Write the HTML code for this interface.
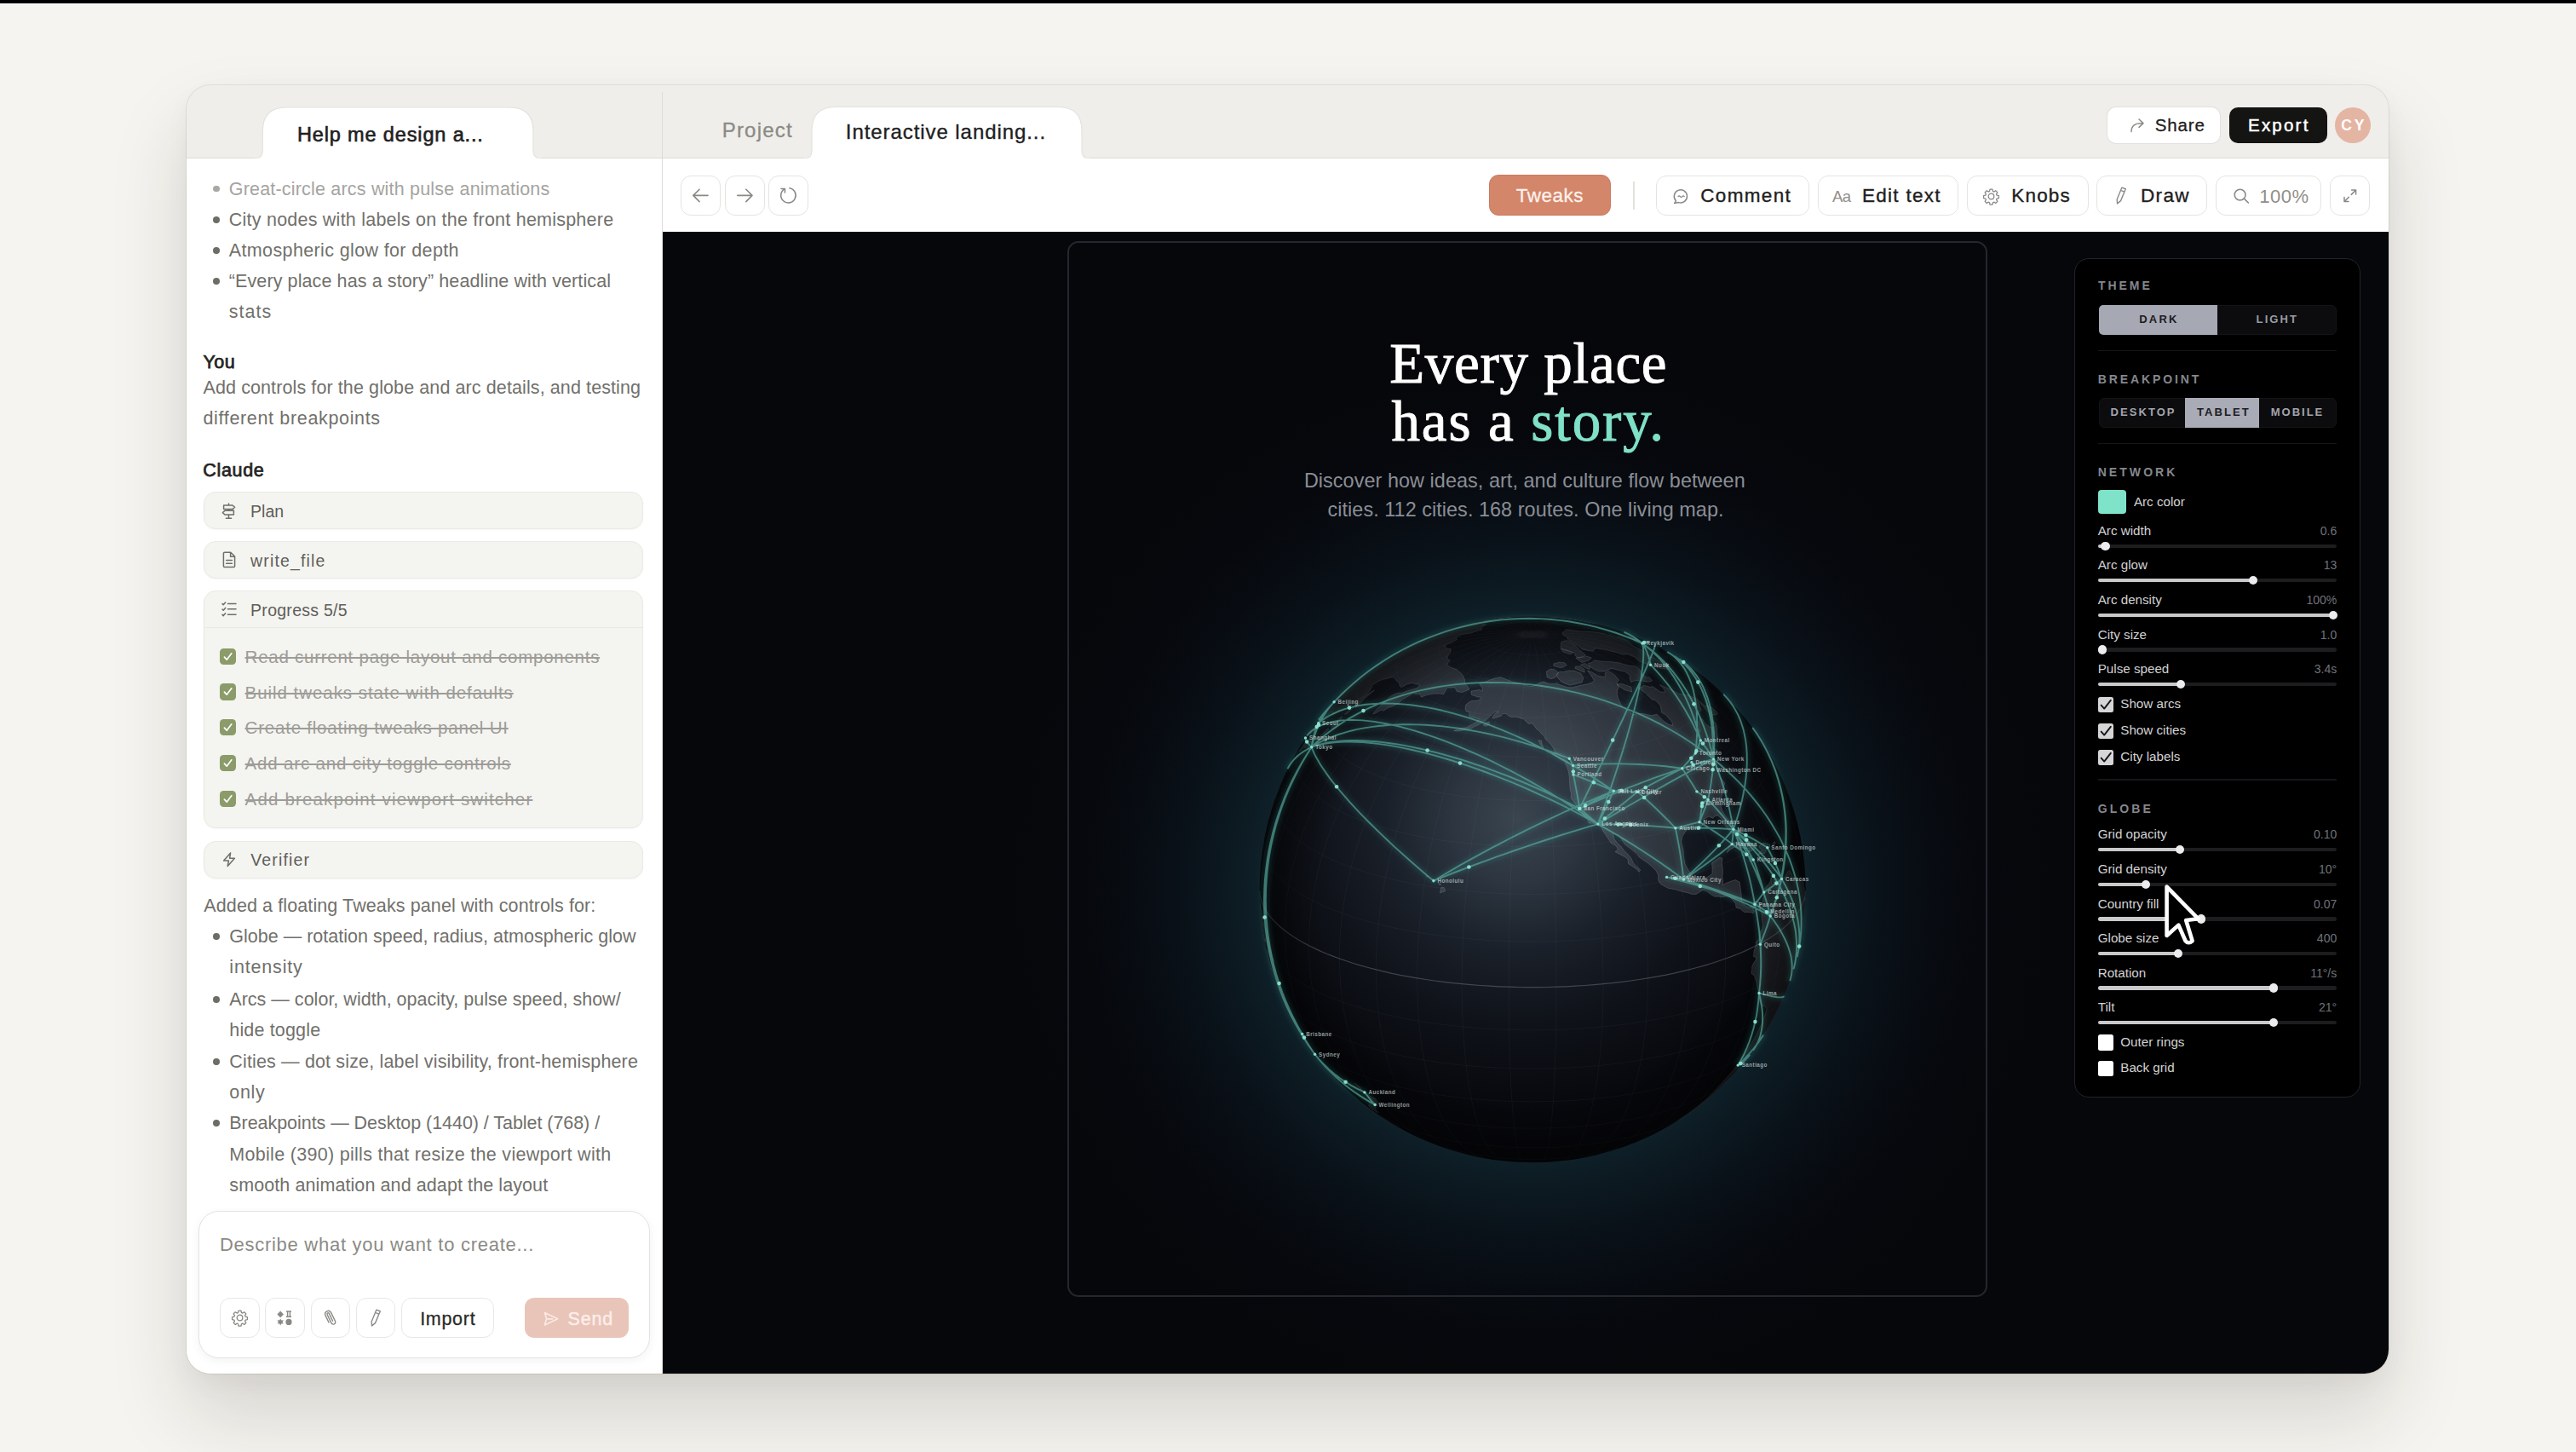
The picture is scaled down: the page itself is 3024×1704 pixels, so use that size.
<!DOCTYPE html>
<html lang="en"><head><meta charset="utf-8"><title>Interactive landing</title>
<style>
html,body{margin:0;padding:0}
body{width:3024px;height:1704px;position:relative;overflow:hidden;background:#f5f4f0;font-family:'Liberation Sans', sans-serif}
.t{position:absolute;white-space:pre;}
svg{position:absolute;overflow:visible}
</style></head><body>
<div style="position:absolute;left:0.0px;top:0.0px;width:3024.0px;height:4.0px;box-sizing:border-box;background:#000"></div>
<div style="position:absolute;left:0.0px;top:4.0px;width:3024.0px;height:1.4px;box-sizing:border-box;background:#fff"></div>
<div style="position:absolute;left:219px;top:100px;width:2585px;height:1512px;border-radius:28px;background:#efeeea;box-shadow:0 0 0 1px rgba(0,0,0,.075),0 48px 90px rgba(40,35,20,.15),0 12px 30px rgba(40,35,20,.04);overflow:hidden"><div style="position:absolute;left:-219px;top:-100px;width:3024px;height:1704px">
<div style="position:absolute;left:219.0px;top:186.0px;width:558.0px;height:1426.0px;box-sizing:border-box;background:#fff"></div>
<div style="position:absolute;left:778.0px;top:186.0px;width:2026.0px;height:85.5px;box-sizing:border-box;background:#fff"></div>
<div style="position:absolute;left:778.0px;top:271.5px;width:2026.0px;height:1340.5px;box-sizing:border-box;background:#06070b"></div>
<div style="position:absolute;left:219.0px;top:185.0px;width:2585.0px;height:1.0px;box-sizing:border-box;background:#dddcd7"></div>
<div style="position:absolute;left:777.0px;top:108.0px;width:1.0px;height:1504.0px;box-sizing:border-box;background:#dcdbd6"></div>
<svg style="left:0.0px;top:0.0px;" width="3024.0" height="1704.0" viewBox="0 0 3024 1704" fill="none"><path d="M299.3 186 Q308.3 186 308.3 177 L308.3 154 Q308.3 126 336.3 126 L598 126 Q626 126 626 154 L626 177 Q626 186 635 186 Z" fill="#fff"/><path d="M299.3 186 Q308.3 186 308.3 177 L308.3 154 Q308.3 126 336.3 126 L598 126 Q626 126 626 154 L626 177 Q626 186 635 186" stroke="#e3e2dd" stroke-width="1.2"/><rect x="299.3" y="185.8" width="335.7" height="1.6" fill="#fff"/></svg>
<svg style="left:0.0px;top:0.0px;" width="3024.0" height="1704.0" viewBox="0 0 3024 1704" fill="none"><path d="M944 186 Q953 186 953 177 L953 153.5 Q953 125.5 981 125.5 L1242 125.5 Q1270 125.5 1270 153.5 L1270 177 Q1270 186 1279 186 Z" fill="#fff"/><path d="M944 186 Q953 186 953 177 L953 153.5 Q953 125.5 981 125.5 L1242 125.5 Q1270 125.5 1270 153.5 L1270 177 Q1270 186 1279 186" stroke="#e3e2dd" stroke-width="1.2"/><rect x="944" y="185.8" width="335" height="1.6" fill="#fff"/></svg>
<div style="position:absolute;left:2474.2px;top:126.3px;width:131.8px;height:41.9px;box-sizing:border-box;background:#fff;border-radius:10px;box-shadow:0 0 0 1px rgba(0,0,0,.05)"></div>
<div style="position:absolute;left:2617.0px;top:126.3px;width:114.8px;height:41.9px;box-sizing:border-box;background:#141413;border-radius:10px"></div>
<div style="position:absolute;left:2741.2px;top:126.4px;width:42.1px;height:41.8px;box-sizing:border-box;background:#e4b5a3;border-radius:50%"></div>
<svg style="left:2500.8px;top:139.0px;" width="16.5" height="16.0" viewBox="0 0 16.5 16" fill="none"><path d="M1 15.5 C1 9 4.5 5.6 14.5 5.6 M10 1 L15 5.6 L10 10.4" stroke="#8d8c87" stroke-width="1.5" stroke-linecap="round" stroke-linejoin="round"/></svg>
<div style="position:absolute;left:799.2px;top:206.2px;width:46.8px;height:46.8px;box-sizing:border-box;background:#fff;border:1.8px solid #e5e4e0;border-radius:12px"></div>
<div style="position:absolute;left:850.8px;top:206.2px;width:46.8px;height:46.8px;box-sizing:border-box;background:#fff;border:1.8px solid #e5e4e0;border-radius:12px"></div>
<div style="position:absolute;left:902.3px;top:206.2px;width:46.8px;height:46.8px;box-sizing:border-box;background:#fff;border:1.8px solid #e5e4e0;border-radius:12px"></div>
<svg style="left:799.2px;top:206.2px;" width="46.8" height="46.8" viewBox="0 0 46.8 46.8" fill="none"><path d="M32 23.4 H15 M22 16.2 L14.8 23.4 L22 30.6" stroke="#8a8985" stroke-width="1.6" stroke-linecap="round" stroke-linejoin="round"/></svg>
<svg style="left:850.8px;top:206.2px;" width="46.8" height="46.8" viewBox="0 0 46.8 46.8" fill="none"><path d="M14.8 23.4 H32 M24.8 16.2 L32 23.4 L24.8 30.6" stroke="#8a8985" stroke-width="1.6" stroke-linecap="round" stroke-linejoin="round"/></svg>
<svg style="left:902.3px;top:206.2px;" width="46.8" height="46.8" viewBox="0 0 46.8 46.8" fill="none"><path d="M24.9 14.7 A8.7 8.7 0 1 1 19.3 15.6 M14.9 15.5 H19.4 V20" stroke="#8a8985" stroke-width="1.6" stroke-linecap="round" stroke-linejoin="round"/></svg>
<div style="position:absolute;left:1748.0px;top:205.1px;width:143.0px;height:48.4px;box-sizing:border-box;background:#d4866a;border:1.5px solid #c87a5d;border-radius:11px"></div>
<div style="position:absolute;left:1916.6px;top:212.5px;width:2.0px;height:33.8px;box-sizing:border-box;background:#e3e2dd"></div>
<div style="position:absolute;left:1944.3px;top:205.8px;width:179.3px;height:47.4px;box-sizing:border-box;background:#fff;border:1.8px solid #e5e4e0;border-radius:12px"></div>
<div style="position:absolute;left:2134.2px;top:205.8px;width:164.8px;height:47.4px;box-sizing:border-box;background:#fff;border:1.8px solid #e5e4e0;border-radius:12px"></div>
<div style="position:absolute;left:2309.2px;top:205.8px;width:142.7px;height:47.4px;box-sizing:border-box;background:#fff;border:1.8px solid #e5e4e0;border-radius:12px"></div>
<div style="position:absolute;left:2461.2px;top:205.8px;width:129.6px;height:47.4px;box-sizing:border-box;background:#fff;border:1.8px solid #e5e4e0;border-radius:12px"></div>
<div style="position:absolute;left:2600.9px;top:205.8px;width:123.7px;height:47.4px;box-sizing:border-box;background:#fff;border:1.8px solid #e5e4e0;border-radius:12px"></div>
<div style="position:absolute;left:2734.7px;top:205.8px;width:47.8px;height:47.4px;box-sizing:border-box;background:#fff;border:1.8px solid #e5e4e0;border-radius:12px"></div>
<svg style="left:1963.5px;top:221.5px;" width="19.0" height="17.5" viewBox="0 0 19 17.5" fill="none"><path d="M3.4 13.6 A7.6 7.6 0 1 1 6.6 15.6 L1.6 16.6 Z" stroke="#8a8985" stroke-width="1.5" stroke-linejoin="round"/><path d="M6 8.6 q1.2 -1.6 2.4 0 t2.4 0 t2.4 0" stroke="#8a8985" stroke-width="1.3" stroke-linecap="round"/></svg>
<svg style="left:2327.4px;top:219.7px;" width="21.0" height="21.0" viewBox="0 0 24 24" fill="none"><path d="M12 8.2a3.8 3.8 0 1 0 0 7.6 3.8 3.8 0 0 0 0-7.6Z M10.3 2.5h3.4l.5 2.6 1.6.7 2.2-1.5 2.4 2.4-1.5 2.2.7 1.6 2.6.5v3.4l-2.6.5-.7 1.6 1.5 2.2-2.4 2.4-2.2-1.5-1.6.7-.5 2.6h-3.4l-.5-2.6-1.6-.7-2.2 1.5-2.4-2.4 1.5-2.200-.7-1.600-2.600-.5v-3.400l2.600-.5.7-1.600-1.500-2.200 2.400-2.400 2.200 1.500 1.600-.7Z" stroke="#8a8985" stroke-width="1.5" stroke-linejoin="round"/></svg>
<svg style="left:2483.4px;top:219.3px;" width="14.0" height="21.0" viewBox="0 0 15 23" fill="none"><path d="M8.5 1.2 L13.3 3 L7 18.2 L2.6 21.8 L2.2 16.4 Z M7 4.8 L11.8 6.6" stroke="#8a8985" stroke-width="1.5" stroke-linejoin="round" stroke-linecap="round"/></svg>
<svg style="left:2622.0px;top:220.7px;" width="18.5" height="18.0" viewBox="0 0 18.5 18" fill="none"><circle cx="7.6" cy="7.6" r="6.4" stroke="#8a8985" stroke-width="1.6"/><path d="M12.4 12.2 L17.4 17" stroke="#8a8985" stroke-width="1.6" stroke-linecap="round"/></svg>
<svg style="left:2750.8px;top:221.9px;" width="15.6" height="15.6" viewBox="0 0 15.6 15.6" fill="none"><path d="M9.6 1 H14.6 V6 M14.4 1.2 L9.2 6.4 M6 14.6 H1 V9.6 M1.2 14.4 L6.4 9.2" stroke="#8a8985" stroke-width="1.5" stroke-linecap="round" stroke-linejoin="round"/></svg>
<div style="position:absolute;left:250.4px;top:217.5px;width:7.8px;height:7.8px;box-sizing:border-box;background:#a9a8a4;border-radius:50%"></div>
<div style="position:absolute;left:250.4px;top:254.0px;width:7.8px;height:7.8px;box-sizing:border-box;background:#6d6c67;border-radius:50%"></div>
<div style="position:absolute;left:250.4px;top:290.1px;width:7.8px;height:7.8px;box-sizing:border-box;background:#6d6c67;border-radius:50%"></div>
<div style="position:absolute;left:250.4px;top:326.2px;width:7.8px;height:7.8px;box-sizing:border-box;background:#6d6c67;border-radius:50%"></div>
<div style="position:absolute;left:239.0px;top:577.0px;width:515.5px;height:43.5px;box-sizing:border-box;background:#f4f4f0;border:1px solid #ebeae5;border-radius:14px;box-shadow:0 1px 2px rgba(0,0,0,.035)"></div>
<div style="position:absolute;left:239.0px;top:635.2px;width:515.5px;height:43.6px;box-sizing:border-box;background:#f4f4f0;border:1px solid #ebeae5;border-radius:14px;box-shadow:0 1px 2px rgba(0,0,0,.035)"></div>
<div style="position:absolute;left:239.0px;top:692.8px;width:515.5px;height:279.2px;box-sizing:border-box;background:#f4f4f0;border:1px solid #ebeae5;border-radius:14px;box-shadow:0 1px 2px rgba(0,0,0,.035)"></div>
<div style="position:absolute;left:240.0px;top:735.5px;width:513.5px;height:1.1px;box-sizing:border-box;background:#e9e8e3"></div>
<div style="position:absolute;left:239.0px;top:986.9px;width:515.5px;height:43.7px;box-sizing:border-box;background:#f4f4f0;border:1px solid #ebeae5;border-radius:14px;box-shadow:0 1px 2px rgba(0,0,0,.035)"></div>
<svg style="left:260.2px;top:589.6px;" width="17.0" height="19.5" viewBox="0 0 17 19.5" fill="none"><path d="M8.5 1 V3 M8.5 7.6 V9 M8.5 14.2 V18 M5.4 18.3 H11.6 M2.6 3 H13 L15.6 5.3 L13 7.6 H2.6 Z M14.4 9.2 H4 L1.4 11.6 L4 14 H14.4 Z" stroke="#6f6e69" stroke-width="1.5" stroke-linejoin="round" stroke-linecap="round"/></svg>
<svg style="left:260.6px;top:647.0px;" width="16.0" height="19.5" viewBox="0 0 16 19.5" fill="none"><path d="M2.6 1.2 H9.8 L14.6 6 V17.2 Q14.6 18.4 13.4 18.4 H2.6 Q1.4 18.4 1.4 17.2 V2.4 Q1.4 1.2 2.6 1.2 Z M9.6 1.4 V6.2 H14.4 M4.6 10.6 H11.4 M4.6 14.2 H11.4" stroke="#6f6e69" stroke-width="1.5" stroke-linejoin="round" stroke-linecap="round"/></svg>
<svg style="left:259.6px;top:706.0px;" width="18.0" height="17.5" viewBox="0 0 18 17.5" fill="none"><path d="M7.4 2.4 H17 M7.4 8.8 H17 M7.4 15.2 H17 M1 2.6 L2.2 3.8 L4.6 1 M1 9 L2.2 10.2 L4.6 7.4 M1 15.400 L2.2 16.6 L4.6 13.8" stroke="#6f6e69" stroke-width="1.5" stroke-linejoin="round" stroke-linecap="round"/></svg>
<svg style="left:260.6px;top:1000.2px;" width="16.0" height="17.5" viewBox="0 0 16 17.5" fill="none"><path d="M9.6 1 L1.600 10 H7.4 L6.2 16.5 L14.4 7.2 H8.6 Z" stroke="#6f6e69" stroke-width="1.5" stroke-linejoin="round"/></svg>
<div style="position:absolute;left:257.5px;top:760.7px;width:19.3px;height:19.2px;box-sizing:border-box;background:#8b9b6a;border-radius:4.5px"></div>
<svg style="left:257.5px;top:760.7px;" width="19.3" height="19.2" viewBox="0 0 19.3 19.2" fill="none"><path d="M5.4 10.2 L8.2 13.2 L13.8 5.800" stroke="#fff" stroke-width="1.7" stroke-linecap="round" stroke-linejoin="round"/></svg>
<div style="position:absolute;left:257.5px;top:802.4px;width:19.3px;height:19.2px;box-sizing:border-box;background:#8b9b6a;border-radius:4.5px"></div>
<svg style="left:257.5px;top:802.4px;" width="19.3" height="19.2" viewBox="0 0 19.3 19.2" fill="none"><path d="M5.4 10.2 L8.2 13.2 L13.8 5.800" stroke="#fff" stroke-width="1.7" stroke-linecap="round" stroke-linejoin="round"/></svg>
<div style="position:absolute;left:257.5px;top:844.2px;width:19.3px;height:19.2px;box-sizing:border-box;background:#8b9b6a;border-radius:4.5px"></div>
<svg style="left:257.5px;top:844.2px;" width="19.3" height="19.2" viewBox="0 0 19.3 19.2" fill="none"><path d="M5.4 10.2 L8.2 13.2 L13.8 5.800" stroke="#fff" stroke-width="1.7" stroke-linecap="round" stroke-linejoin="round"/></svg>
<div style="position:absolute;left:257.5px;top:885.9px;width:19.3px;height:19.2px;box-sizing:border-box;background:#8b9b6a;border-radius:4.5px"></div>
<svg style="left:257.5px;top:885.9px;" width="19.3" height="19.2" viewBox="0 0 19.3 19.2" fill="none"><path d="M5.4 10.2 L8.2 13.2 L13.8 5.800" stroke="#fff" stroke-width="1.7" stroke-linecap="round" stroke-linejoin="round"/></svg>
<div style="position:absolute;left:257.5px;top:927.7px;width:19.3px;height:19.2px;box-sizing:border-box;background:#8b9b6a;border-radius:4.5px"></div>
<svg style="left:257.5px;top:927.7px;" width="19.3" height="19.2" viewBox="0 0 19.3 19.2" fill="none"><path d="M5.4 10.2 L8.2 13.2 L13.8 5.800" stroke="#fff" stroke-width="1.7" stroke-linecap="round" stroke-linejoin="round"/></svg>
<div style="position:absolute;left:250.4px;top:1094.9px;width:7.8px;height:7.8px;box-sizing:border-box;background:#6d6c67;border-radius:50%"></div>
<div style="position:absolute;left:250.4px;top:1169.0px;width:7.8px;height:7.8px;box-sizing:border-box;background:#6d6c67;border-radius:50%"></div>
<div style="position:absolute;left:250.4px;top:1242.0px;width:7.8px;height:7.8px;box-sizing:border-box;background:#6d6c67;border-radius:50%"></div>
<div style="position:absolute;left:250.4px;top:1314.3px;width:7.8px;height:7.8px;box-sizing:border-box;background:#6d6c67;border-radius:50%"></div>
<div style="position:absolute;left:233.2px;top:1421.4px;width:529.8px;height:172.6px;box-sizing:border-box;background:#fff;border:1px solid #e4e3de;border-radius:24px;box-shadow:0 3px 12px rgba(0,0,0,.05)"></div>
<div style="position:absolute;left:258.4px;top:1523.4px;width:46.2px;height:46.2px;box-sizing:border-box;background:#fff;border:1.8px solid #e8e7e3;border-radius:12px"></div>
<div style="position:absolute;left:311.4px;top:1523.4px;width:46.2px;height:46.2px;box-sizing:border-box;background:#fff;border:1.8px solid #e8e7e3;border-radius:12px"></div>
<div style="position:absolute;left:364.6px;top:1523.4px;width:46.2px;height:46.2px;box-sizing:border-box;background:#fff;border:1.8px solid #e8e7e3;border-radius:12px"></div>
<div style="position:absolute;left:417.7px;top:1523.4px;width:46.2px;height:46.2px;box-sizing:border-box;background:#fff;border:1.8px solid #e8e7e3;border-radius:12px"></div>
<div style="position:absolute;left:470.8px;top:1523.4px;width:109.6px;height:46.2px;box-sizing:border-box;background:#fff;border:1.8px solid #e8e7e3;border-radius:12px"></div>
<div style="position:absolute;left:616.4px;top:1523.4px;width:122.1px;height:46.6px;box-sizing:border-box;background:#e9c5b9;border-radius:11px"></div>
<svg style="left:637.6px;top:1538.6px;" width="18.0" height="17.5" viewBox="0 0 18 17.5" fill="none"><path d="M1.4 1.6 L16.6 8.8 L1.4 16 L3.6 8.8 Z M3.6 8.8 H10.5" stroke="#fbe9e2" stroke-width="1.7" stroke-linejoin="round" stroke-linecap="round"/></svg>
<svg style="left:271.0px;top:1536.0px;" width="21.0" height="21.0" viewBox="0 0 24 24" fill="none"><path d="M12 8.2a3.8 3.8 0 1 0 0 7.6 3.8 3.8 0 0 0 0-7.6Z M10.3 2.5h3.4l.5 2.6 1.6.7 2.2-1.5 2.4 2.4-1.5 2.2.7 1.6 2.6.5v3.4l-2.6.5-.7 1.6 1.5 2.2-2.4 2.4-2.2-1.5-1.6.7-.5 2.6h-3.4l-.5-2.6-1.6-.7-2.2 1.5-2.4-2.4 1.5-2.200-.7-1.600-2.600-.5v-3.400l2.600-.5.7-1.600-1.500-2.200 2.400-2.400 2.200 1.500 1.600-.7Z" stroke="#8a8985" stroke-width="1.5" stroke-linejoin="round"/></svg>
<svg style="left:325.4px;top:1538.0px;" width="18.5" height="17.5" viewBox="0 0 18.5 17.5" fill="none"><path d="M4.2 0.600 L8 4.4 L4.2 8.2 L0.4 4.4 Z" fill="#8a8985"/><path d="M11 1 H17 M11 7.2 H17 M12.6 1 V7.2 M15.4 1 V7.2" stroke="#8a8985" stroke-width="1.4"/><circle cx="14" cy="13.4" r="3.6" fill="#8a8985"/><path d="M4.2 9.4 L5.4 11.6 L7.8 11.2 L6.6 13.400 L7.8 15.600 L5.4 15.2 L4.2 17.4 L3 15.2 L0.600 15.600 L1.800 13.400 L0.600 11.2 L3 11.6 Z" fill="#8a8985"/></svg>
<svg style="left:380.4px;top:1536.6px;" width="15.0" height="20.0" viewBox="0 0 15 20" fill="none"><path d="M10.6 13.2 L6.4 4.6 C5.6 3 3.400 4 4.200 5.7 L8.8 15.400 C10.4 18.700 15 16.600 13.4 13.2 L8.6 3.400 C6.600 -0.800 0 2.2 2 6.600 L6 15" stroke="#8a8985" stroke-width="1.4" stroke-linecap="round" stroke-linejoin="round"/></svg>
<svg style="left:434.0px;top:1536.4px;" width="14.0" height="21.0" viewBox="0 0 15 23" fill="none"><path d="M8.5 1.2 L13.3 3 L7 18.2 L2.6 21.8 L2.2 16.4 Z M7 4.8 L11.8 6.6" stroke="#8a8985" stroke-width="1.5" stroke-linejoin="round" stroke-linecap="round"/></svg>
<div style="position:absolute;left:778.0px;top:271.5px;width:2026.0px;height:1340.5px;box-sizing:border-box;background:radial-gradient(circle 620px at 1019px 768px,rgba(24,56,68,.60) 0,rgba(21,49,62,.48) 48%,rgba(15,32,45,.30) 66%,rgba(9,16,25,.12) 84%,rgba(6,7,11,0) 100%)"></div>
<div style="position:absolute;left:1252.6px;top:283.3px;width:1080.4px;height:1238.7px;box-sizing:border-box;border:2.2px solid #25272e;border-radius:13px"></div>
<div style="position:absolute;left:2435.0px;top:303.0px;width:336.0px;height:985.3px;box-sizing:border-box;background:#000;border:1.2px solid #22242a;border-radius:17px"></div>
<div style="position:absolute;left:2463.6px;top:357.6px;width:279.3px;height:35.6px;box-sizing:border-box;background:#0c0c0e;border:1px solid #141417;border-radius:6px"></div>
<div style="position:absolute;left:2464.4px;top:358.2px;width:138.8px;height:34.4px;box-sizing:border-box;background:#a6a8b4;border-radius:5px 0 0 5px"></div>
<div style="position:absolute;left:2463.6px;top:466.7px;width:279.3px;height:35.6px;box-sizing:border-box;background:#0c0c0e;border:1px solid #141417;border-radius:6px"></div>
<div style="position:absolute;left:2565.2px;top:467.3px;width:87.2px;height:34.4px;box-sizing:border-box;background:#a9abb6"></div>
<div style="position:absolute;left:2463.0px;top:411.2px;width:280.0px;height:1.2px;box-sizing:border-box;background:#15161a"></div>
<div style="position:absolute;left:2463.0px;top:519.6px;width:280.0px;height:1.2px;box-sizing:border-box;background:#15161a"></div>
<div style="position:absolute;left:2463.0px;top:914.4px;width:280.0px;height:1.2px;box-sizing:border-box;background:#15161a"></div>
<div style="position:absolute;left:2462.7px;top:575.0px;width:33.7px;height:28.0px;box-sizing:border-box;background:#7fe3c9;border-radius:4px"></div>
<div style="position:absolute;left:2462.7px;top:638.6px;width:280.5px;height:4.4px;box-sizing:border-box;background:#1d1d1f;border-radius:3px"></div>
<div style="position:absolute;left:2462.7px;top:638.6px;width:8.9px;height:4.4px;box-sizing:border-box;background:#c9c9cb;border-radius:3px"></div>
<div style="position:absolute;left:2466.4px;top:635.6px;width:10.4px;height:10.4px;box-sizing:border-box;background:#ececee;border-radius:50%"></div>
<div style="position:absolute;left:2462.7px;top:678.8px;width:280.5px;height:4.4px;box-sizing:border-box;background:#1d1d1f;border-radius:3px"></div>
<div style="position:absolute;left:2462.7px;top:678.8px;width:182.4px;height:4.4px;box-sizing:border-box;background:#c9c9cb;border-radius:3px"></div>
<div style="position:absolute;left:2639.9px;top:675.8px;width:10.4px;height:10.4px;box-sizing:border-box;background:#ececee;border-radius:50%"></div>
<div style="position:absolute;left:2462.7px;top:719.5px;width:280.5px;height:4.4px;box-sizing:border-box;background:#1d1d1f;border-radius:3px"></div>
<div style="position:absolute;left:2462.7px;top:719.5px;width:276.4px;height:4.4px;box-sizing:border-box;background:#c9c9cb;border-radius:3px"></div>
<div style="position:absolute;left:2733.9px;top:716.5px;width:10.4px;height:10.4px;box-sizing:border-box;background:#ececee;border-radius:50%"></div>
<div style="position:absolute;left:2462.7px;top:760.4px;width:280.5px;height:4.4px;box-sizing:border-box;background:#1d1d1f;border-radius:3px"></div>
<div style="position:absolute;left:2462.7px;top:760.4px;width:5.2px;height:4.4px;box-sizing:border-box;background:#c9c9cb;border-radius:3px"></div>
<div style="position:absolute;left:2462.7px;top:757.4px;width:10.4px;height:10.4px;box-sizing:border-box;background:#ececee;border-radius:50%"></div>
<div style="position:absolute;left:2462.7px;top:800.9px;width:280.5px;height:4.4px;box-sizing:border-box;background:#1d1d1f;border-radius:3px"></div>
<div style="position:absolute;left:2462.7px;top:800.9px;width:97.2px;height:4.4px;box-sizing:border-box;background:#c9c9cb;border-radius:3px"></div>
<div style="position:absolute;left:2554.7px;top:797.9px;width:10.4px;height:10.4px;box-sizing:border-box;background:#ececee;border-radius:50%"></div>
<div style="position:absolute;left:2462.7px;top:994.8px;width:280.5px;height:4.4px;box-sizing:border-box;background:#1d1d1f;border-radius:3px"></div>
<div style="position:absolute;left:2462.7px;top:994.8px;width:96.0px;height:4.4px;box-sizing:border-box;background:#c9c9cb;border-radius:3px"></div>
<div style="position:absolute;left:2553.5px;top:991.8px;width:10.4px;height:10.4px;box-sizing:border-box;background:#ececee;border-radius:50%"></div>
<div style="position:absolute;left:2462.7px;top:1035.5px;width:280.5px;height:4.4px;box-sizing:border-box;background:#1d1d1f;border-radius:3px"></div>
<div style="position:absolute;left:2462.7px;top:1035.5px;width:56.4px;height:4.4px;box-sizing:border-box;background:#c9c9cb;border-radius:3px"></div>
<div style="position:absolute;left:2513.9px;top:1032.5px;width:10.4px;height:10.4px;box-sizing:border-box;background:#ececee;border-radius:50%"></div>
<div style="position:absolute;left:2462.7px;top:1076.3px;width:280.5px;height:4.4px;box-sizing:border-box;background:#1d1d1f;border-radius:3px"></div>
<div style="position:absolute;left:2462.7px;top:1076.3px;width:121.1px;height:4.4px;box-sizing:border-box;background:#c9c9cb;border-radius:3px"></div>
<div style="position:absolute;left:2578.6px;top:1073.3px;width:10.4px;height:10.4px;box-sizing:border-box;background:#ececee;border-radius:50%"></div>
<div style="position:absolute;left:2462.7px;top:1116.7px;width:280.5px;height:4.4px;box-sizing:border-box;background:#1d1d1f;border-radius:3px"></div>
<div style="position:absolute;left:2462.7px;top:1116.7px;width:94.3px;height:4.4px;box-sizing:border-box;background:#c9c9cb;border-radius:3px"></div>
<div style="position:absolute;left:2551.8px;top:1113.7px;width:10.4px;height:10.4px;box-sizing:border-box;background:#ececee;border-radius:50%"></div>
<div style="position:absolute;left:2462.7px;top:1157.4px;width:280.5px;height:4.4px;box-sizing:border-box;background:#1d1d1f;border-radius:3px"></div>
<div style="position:absolute;left:2462.7px;top:1157.4px;width:206.3px;height:4.4px;box-sizing:border-box;background:#c9c9cb;border-radius:3px"></div>
<div style="position:absolute;left:2663.8px;top:1154.4px;width:10.4px;height:10.4px;box-sizing:border-box;background:#ececee;border-radius:50%"></div>
<div style="position:absolute;left:2462.7px;top:1197.8px;width:280.5px;height:4.4px;box-sizing:border-box;background:#1d1d1f;border-radius:3px"></div>
<div style="position:absolute;left:2462.7px;top:1197.8px;width:206.3px;height:4.4px;box-sizing:border-box;background:#c9c9cb;border-radius:3px"></div>
<div style="position:absolute;left:2663.8px;top:1194.8px;width:10.4px;height:10.4px;box-sizing:border-box;background:#ececee;border-radius:50%"></div>
<div style="position:absolute;left:2462.7px;top:817.9px;width:18.3px;height:18.2px;box-sizing:border-box;background:#d6d6d8;border-radius:2.5px"></div>
<svg style="left:2462.7px;top:817.9px;" width="18.3" height="18.2" viewBox="0 0 18.3 18.2" fill="none"><path d="M3.6 9.6 L7.2 13.6 L14.8 3.8" stroke="#161618" stroke-width="1.9" stroke-linecap="round" stroke-linejoin="round"/></svg>
<div style="position:absolute;left:2462.7px;top:848.7px;width:18.3px;height:18.2px;box-sizing:border-box;background:#d6d6d8;border-radius:2.5px"></div>
<svg style="left:2462.7px;top:848.7px;" width="18.3" height="18.2" viewBox="0 0 18.3 18.2" fill="none"><path d="M3.6 9.6 L7.2 13.6 L14.8 3.8" stroke="#161618" stroke-width="1.9" stroke-linecap="round" stroke-linejoin="round"/></svg>
<div style="position:absolute;left:2462.7px;top:879.5px;width:18.3px;height:18.2px;box-sizing:border-box;background:#d6d6d8;border-radius:2.5px"></div>
<svg style="left:2462.7px;top:879.5px;" width="18.3" height="18.2" viewBox="0 0 18.3 18.2" fill="none"><path d="M3.6 9.6 L7.2 13.6 L14.8 3.8" stroke="#161618" stroke-width="1.9" stroke-linecap="round" stroke-linejoin="round"/></svg>
<div style="position:absolute;left:2462.7px;top:1214.4px;width:18.3px;height:18.2px;box-sizing:border-box;background:#fff;border-radius:2.5px"></div>
<div style="position:absolute;left:2462.7px;top:1245.1px;width:18.3px;height:18.2px;box-sizing:border-box;background:#fff;border-radius:2.5px"></div>
</div></div>
<svg style="left:0;top:0" width="3024" height="1704" viewBox="0 0 3024 1704" fill="none">
<defs>
<radialGradient id="gsph" cx="1781.1" cy="961.8" r="346.14000000000004" gradientUnits="userSpaceOnUse"><stop offset="0" stop-color="#3a4550"/><stop offset=".22" stop-color="#2c3540"/><stop offset=".45" stop-color="#1a2029"/><stop offset=".7" stop-color="#0f1219"/><stop offset="1" stop-color="#07080d"/></radialGradient>
<radialGradient id="gshade" cx="1799.1" cy="1043.8" r="320.5" gradientUnits="userSpaceOnUse"><stop offset=".78" stop-color="#000" stop-opacity="0"/><stop offset="1" stop-color="#000" stop-opacity=".55"/></radialGradient>
<radialGradient id="ghalo" cx="1799.1" cy="1043.8" r="530.5" gradientUnits="userSpaceOnUse"><stop offset="0.604" stop-color="#1a4450" stop-opacity=".17"/><stop offset="0.646" stop-color="#183e4a" stop-opacity=".13"/><stop offset="0.736" stop-color="#143844" stop-opacity=".09"/><stop offset="0.849" stop-color="#112d3a" stop-opacity=".045"/><stop offset="1" stop-color="#0c1c25" stop-opacity="0"/></radialGradient>
<clipPath id="gclip"><circle cx="1799.1" cy="1043.8" r="320.5"/></clipPath>
<filter id="gblur" x="-10%" y="-10%" width="120%" height="120%"><feGaussianBlur stdDeviation="3.2"/></filter>
</defs>
<circle cx="1799.1" cy="1043.8" r="530.5" fill="url(#ghalo)"/>
<circle cx="1799.1" cy="1043.8" r="320.5" fill="url(#gsph)"/>
<g clip-path="url(#gclip)">
<path d="M1727 811.1 L1732.1 810.3 L1737.1 809.5 L1740.4 811.3 L1739.8 807.1 L1738.1 804.5 L1736.7 801.9 L1741.6 800.5 L1746.4 799.1 L1750.3 797.6 L1754.1 796.2 L1757.8 795.4 L1761.4 794.6 L1763.7 795.6 L1765.9 796.5 L1768.3 797.4 L1771.5 798.6 L1774.8 799.8 L1777.8 800.4 L1780.8 801 L1783.8 801.5 L1786.9 802.7 L1790 803.7 L1793.1 804.8 L1796.1 805.2 L1799.1 805.6 L1803 803.7 L1806.7 801.8 L1809.5 800.8 L1812.1 799.8 L1815.3 801.3 L1818.5 802.8 L1821.7 802.7 L1824.9 802.6 L1828.2 802.4 L1832 803.9 L1836 805.4 L1840.2 806.8 L1843.3 806.8 L1846.4 806.7 L1850.1 805.7 L1853.6 804.7 L1857.3 804 L1860.9 803.3 L1864.5 802.5 L1868 801.6 L1869.7 800.1 L1871.4 798.6 L1868.1 793.2 L1863.4 787 L1868.9 788.7 L1875.6 793 L1881.1 794.2 L1885 794.1 L1883.8 789.9 L1885.1 789.4 L1886.9 788.6 L1888.7 787.7 L1895.6 792 L1900.6 798.2 L1898.2 800.8 L1900.5 805.8 L1899.6 808.1 L1898.4 810.5 L1898.3 815.3 L1900.4 821.9 L1904.7 830.3 L1911.2 833.3 L1917 839 L1922.5 837.1 L1928.5 837.5 L1933.7 838.7 L1938.9 839.8 L1945 838.2 L1953.1 846.4 L1959.4 850.4 L1963.7 851.3 L1962.7 847.6 L1955.8 839.2 L1950.6 836 L1949.1 827.9 L1943.6 822 L1938.7 820.6 L1932.2 813.8 L1923.6 807.6 L1927.5 806 L1930 804.4 L1937.3 806.3 L1939.9 805.6 L1949.3 811.9 L1954.7 812.3 L1953.2 808.5 L1948.3 803.4 L1955.2 806.6 L1963.3 810 L1970.9 814 L1977.1 815.2 L1983 816.3 L1990.2 819.4 L1993 821.1 L1994.3 824.5 L1995.2 828.1 L1997.3 832.9 L1995.6 834.6 L1993.8 836.3 L1992 838.6 L1990 840.9 L1991.9 846.6 L1994.2 853.3 L1995.9 859.1 L1995.8 855 L1994.1 847.6 L1995.9 843 L1999.1 844.5 L2001.1 848.8 L2007.1 853.2 L2010.2 853.9 L2012.8 852.7 L2015 852.6 L2013.4 848.4 L2010 845.5 L2015.6 853.7 L2015.5 859.7 L2016.9 867 L2013.3 865 L2011.3 859.2 L2009.6 861.6 L2010.4 864.6 L2009.7 869.6 L2009.3 873.4 L2011.2 877.6 L2015.6 880.6 L2014.3 884.4 L2012.3 887.7 L2011.9 891.4 L2015 896.7 L2016 902 L2017.3 906.5 L2018.5 911 L2022.6 916.3 L2024.8 919 L2023.1 924.5 L2022.2 928.8 L2021.4 933.7 L2019.9 940.8 L2020.2 945 L2021.8 951.7 L2025.9 957.8 L2029.5 962.2 L2033.2 967.8 L2035.3 974.2 L2034.8 977.6 L2032.9 977.3 L2029.8 974.5 L2026.3 970 L2023.1 966.5 L2021.3 961.2 L2016.8 957.1 L2013.9 957.2 L2010.8 960.3 L2006.1 958 L2003.1 959.8 L1999.8 961.1 L1996.7 962.9 L1999.2 968.5 L1996.4 969.5 L1992.6 969.7 L1987.4 969.6 L1982.5 970.6 L1979.1 975.2 L1974.9 981.6 L1973.4 987.9 L1976 997 L1976.5 1005.6 L1978.1 1013.8 L1982.1 1021.4 L1986.9 1027.6 L1989.8 1030.8 L1994.5 1032.3 L1997.6 1033.1 L2002.6 1030.3 L2006.3 1028 L2009.9 1025.6 L2010.1 1019.7 L2009.6 1012.8 L2013.9 1009.4 L2019 1006.3 L2022 1007.5 L2021.2 1013.2 L2022.1 1018.1 L2022.4 1023.9 L2021.9 1028.8 L2022.7 1034.3 L2022.1 1038.7 L2025.6 1036.7 L2031.7 1034.3 L2037.1 1032.6 L2042.1 1035.1 L2043 1041.7 L2044 1048.8 L2044.6 1057.2 L2047.8 1061.5 L2050.7 1064.1 L2053.6 1065 L2056.7 1062.3 L2059.5 1058 L2062.8 1057.5 L2066.3 1059.5 L2066.3 1067.5 L2064.4 1064.6 L2063.7 1062.1 L2060.9 1060.8 L2059.3 1063.3 L2058 1066.8 L2059.4 1070.1 L2057.9 1071.9 L2056.1 1070.6 L2053.6 1070.7 L2050.8 1070.3 L2047.9 1070.5 L2046.3 1069.5 L2043 1066.5 L2040.3 1065.9 L2037.9 1064.7 L2037.6 1060.2 L2033.9 1056 L2030.2 1052.3 L2027.3 1051.7 L2021.5 1052.8 L2017.3 1052 L2013.2 1052.3 L2008.5 1049.8 L2003.5 1045.6 L1999 1044.2 L1995.9 1046.3 L1991.2 1049.4 L1985.4 1049.3 L1982 1047.9 L1974.9 1046.3 L1966.2 1043.8 L1958 1042.3 L1952.8 1039.4 L1949.2 1037.3 L1946.5 1032.7 L1946.8 1027 L1944 1021.8 L1939.3 1017.1 L1933.8 1012.4 L1928.4 1008.9 L1924 1005.7 L1921.4 1001.6 L1917 998.3 L1914.2 996 L1907.7 991.3 L1903.8 985.2 L1900.9 980 L1896.1 979 L1893.2 977.7 L1894.9 984.8 L1899.1 989.8 L1902.9 993.2 L1906.7 998.3 L1910.7 1002.2 L1914.9 1007.2 L1917.2 1012.4 L1920.2 1015.9 L1924.1 1019.2 L1925.9 1021.2 L1923.9 1023.3 L1921.5 1020.3 L1915.5 1016.1 L1911.8 1013.9 L1910.7 1007.8 L1906.5 1005 L1901.3 1002.4 L1896.1 999.7 L1899.3 996.5 L1897.3 992.8 L1891 989.2 L1887.8 984 L1884.7 979.4 L1881.6 974.7 L1879.6 970.5 L1874.6 967.8 L1869.8 966.1 L1865.2 966 L1863.7 961.7 L1859.6 958.3 L1857.4 955.2 L1856.1 952.1 L1853.9 949 L1851.4 946.5 L1847.1 940.4 L1844 935.8 L1844.7 931.6 L1843.2 926.4 L1842.7 920.2 L1842.5 913 L1841.4 905.9 L1839.8 900.4 L1837.1 895.1 L1842.8 895.7 L1846.1 899.5 L1845.7 895.5 L1843.5 891.6 L1841.8 890.3 L1837.9 888.1 L1834.6 885.4 L1829 883.7 L1825.4 882.9 L1823.8 878.2 L1821 874.5 L1817.2 869.9 L1814.4 867.6 L1812.5 863.5 L1809.2 860.8 L1806.8 857.6 L1803.7 855.4 L1800.6 850.9 L1797.6 848.7 L1794.7 849.6 L1791.9 847.3 L1788.4 843.7 L1785.9 843.2 L1782.3 841.8 L1778.2 841.2 L1774 841.4 L1770.3 839.4 L1767.9 837.5 L1763.8 837.6 L1761.7 840.5 L1758.1 841.5 L1754 842.9 L1751.7 843.1 L1754.8 837.7 L1759.1 835 L1755 835.5 L1751.2 838.6 L1747.9 841.8 L1744 845.4 L1739.8 848 L1735.1 851.1 L1730.6 852.7 L1726.9 855 L1722.6 855.7 L1718.1 856.9 L1714 857.6 L1710.7 857.9 L1706.8 857.6 L1712.4 855.8 L1717.1 854.3 L1721.9 853.7 L1728.1 850 L1732.6 847.9 L1736.2 843.4 L1732.7 842.9 L1729.5 841.9 L1725.3 841.6 L1724.6 839.2 L1725.1 835.6 L1721.4 834.9 L1720 831.9 L1720.8 827 L1724.4 824.2 L1727.5 822.6 L1731.3 822.5 L1735.3 821.9 L1738 820.2 L1738.2 818.1 L1735.2 818 L1732.2 817 L1727.7 815.6 L1726.9 812.8Z M1841.5 894.8 L1835.8 893.7 L1829.9 890.1 L1822.8 884.5 L1826.7 884.3 L1833 886.4 L1838.3 890.5Z M1812.2 878.6 L1808.5 873.9 L1805.7 868.7 L1809.6 869.1 L1810.2 873.8Z M1741.1 850.9 L1743.7 852.2 L1748.2 850.4 L1748.3 847.2 L1744.2 848.1Z M2008.1 841.6 L2006 836.8 L1997.7 827.4 L1995.2 822.8 L2001.5 828.4 L2004.7 827.9 L2009.3 830.6 L2014.4 834.5 L2016.5 837.7 L2014.2 839 L2011.3 838.7Z M2027.2 1000.6 L2030.2 993.2 L2033.7 989.8 L2039.1 987.8 L2044.8 989.2 L2051.1 990 L2056.4 991.3 L2061.7 993.1 L2060.1 996 L2053.3 1000 L2053 995.8 L2048.6 995.8 L2042 994.3 L2035.9 994.2 L2031.3 996.9Z M2064 1002.9 L2067.9 1001.6 L2071.7 1001.5 L2073.9 997.3 L2077.9 994.2 L2077.7 991.1 L2073.7 989.7 L2070 989.3 L2065.7 992.3 L2064.8 994.2 L2068.4 998.1 L2065.3 1000.8Z M2053.6 1010.2 L2057.3 1010.6 L2060 1008.5 L2057.6 1006.8 L2054.6 1007.9Z M2081.3 992.6 L2084.2 990 L2083.4 987.4 L2080.7 989.8Z M1833 800 L1838 802.4 L1842.9 804.1 L1846.6 803.3 L1850.1 802.5 L1853.6 801.7 L1857.1 800.8 L1858 798.2 L1858.8 795.6 L1856 790.3 L1851.9 788.7 L1847.9 787.1 L1844.5 787 L1841.2 786.9 L1838.5 787.8 L1835.7 788.6 L1833.1 788.4 L1830.6 788.2 L1828.9 789.7 L1827.1 791.1 L1828 795Z M1816 794.6 L1820.6 796.8 L1823 796 L1825.4 795.3 L1827.7 792.3 L1829.6 789.4 L1824.5 785.5 L1822.1 785.4 L1819.8 785.3 L1817.7 786.6 L1815.4 788Z M1872.8 775.1 L1876.1 775.6 L1879.5 776 L1882.9 776.2 L1886.3 776.4 L1889.7 776.6 L1894.4 777.1 L1899 777.5 L1905.5 779.3 L1911.9 781.1 L1916.3 781.5 L1920.7 781.9 L1925.5 786.2 L1926.4 789.2 L1932.2 794.8 L1936.3 794.6 L1939.6 798.9 L1936.7 800.1 L1931.9 799.9 L1925.6 798.7 L1922.4 798.7 L1919 798.8 L1917 799.7 L1914.8 800.7 L1913 796.1 L1913.7 792.7 L1907.4 788 L1901.7 787 L1894.3 784.9 L1890 784.6 L1888.8 785.7 L1887.5 786.9 L1885.3 787.4 L1883.1 787.9 L1880.2 787.9 L1877.3 787.9 L1871.6 785.6 L1865.4 781.4 L1864.5 778.3 L1866.5 778 L1868.4 777.6 L1869.5 776.7 L1870.5 775.8Z M1852 771.8 L1854.4 771.5 L1856.8 771.2 L1858.1 770.7 L1859.3 770.1 L1860.6 769.5 L1861.7 768.9 L1857.3 765.2 L1853.9 762.4 L1852.6 760.7 L1851.1 759.1 L1849.4 757.6 L1847.6 756.3 L1845.7 754.9 L1843.6 753.7 L1841.4 752.6 L1839.1 751.5 L1838.1 751.7 L1837.1 751.9 L1836.1 752.1 L1835.1 752.3 L1834.4 752.6 L1833.8 753 L1833.1 753.3 L1832.4 753.7 L1832.6 754.9 L1832.5 756.2 L1832.4 757.5 L1832.1 758.8 L1831.8 759.4 L1835.2 762.6 L1838.5 763.2 L1841.8 763.9 L1848.6 766.3 L1848.8 767.6 L1849 768.9Z M1849.8 772.2 L1852 771.8 L1854.2 771.4 L1856.1 771.2 L1858 771 L1859.9 770.8 L1861.7 770.6 L1863.5 770.3 L1868.4 772.1 L1867.2 773.1 L1866 774.2 L1864.7 775.2 L1862.8 775.8 L1860.8 776.3 L1858.8 776.9 L1856.8 777.4Z M1834.8 765.1 L1839 766.5 L1843.4 767.8 L1844.5 767.2 L1845.6 766.6 L1846.6 765.9 L1839.1 763 L1835.5 762.1 L1831.9 761.2 L1833.5 763.1Z M1823.9 781.5 L1826.7 782.2 L1829.6 783 L1832.6 783.7 L1834.3 783 L1836.1 782.3 L1837.7 781.5 L1839.3 780.8 L1836.7 777.8 L1833.7 777.5 L1830.7 777.2 L1829 777.6 L1827.3 778 L1825.6 778.4 L1823.8 778.8Z M1848.7 784.3 L1854.4 786.7 L1860.3 789.2 L1859.8 785.3 L1854.2 781.7 L1852 781.9 L1849.8 782.1Z M1855.3 780.6 L1865.4 785.6 L1866.7 783.1 L1861.2 778.7 L1857.5 779.1Z M1897.9 803.4 L1900.6 802.8 L1903.2 802.2 L1909 804.2 L1914.8 806.1 L1915.7 812.1 L1907 809.6Z M1857 761.9 L1862.9 763.2 L1866.7 763.8 L1870.5 764.3 L1871 763.2 L1871.4 762.1 L1872.7 761.4 L1874 760.7 L1882.7 762.1 L1896.6 765.4 L1904.6 768.1 L1907.7 767.9 L1910.7 767.7 L1918.5 770.9 L1923 775 L1928 777.4 L1938.6 781 L1946.4 783.5 L1951.7 784.7 L1956.8 785.4 L1959.3 784.7 L1959.3 782.7 L1951.9 778.5 L1944.3 774 L1934 768.4 L1931.7 766.3 L1929.2 764.3 L1922.9 760.8 L1916.5 757.4 L1915.3 756.1 L1913.9 754.7 L1912.4 753.4 L1910.2 751.7 L1904.8 749.5 L1899.4 747.4 L1897.2 748.1 L1890.6 745.6 L1887.6 745.8 L1884.9 744.7 L1882.3 743.6 L1874.3 742.2 L1863.9 740.9 L1857 740.9 L1848.7 740.1 L1845.4 739.5 L1842.1 739 L1837.9 738.7 L1837.7 739.6 L1837.3 740.4 L1836.2 741.2 L1835.2 741.7 L1834.2 742 L1834.3 742.8 L1834.1 743.4 L1834.4 744.2 L1835 745 L1836.1 745.8 L1836.9 746.3 L1837.7 746.7 L1838.5 747.2 L1839.2 747.7 L1839.8 748.7 L1840.3 749.8 L1841 750.4 L1841.6 751 L1842.2 751.6 L1844.4 752.8 L1846.5 754.1 L1848.5 755.5 L1852.9 757.8 L1854.5 759.3 L1855.8 760.6Z M1923.3 754.6 L1917.2 751.6 L1916.8 750.8 L1916.3 750 L1913.8 748.6 L1911.3 747.3 L1913.6 747.4 L1916.1 747.8 L1922.9 750.7 L1925.5 752.2 L1928.1 753.7 L1928.9 755.1 L1926.1 754.4 L1926 755.4 L1923.3 753.7Z M2067 1059.7 L2068.8 1062.1 L2069.7 1056.5 L2070.6 1052.4 L2070.6 1046.6 L2072.1 1042.5 L2074 1039.8 L2076.5 1037.5 L2078.5 1033.1 L2079.2 1029.6 L2080.4 1032.4 L2079.5 1036.7 L2080.8 1038.1 L2082.1 1034.2 L2083.1 1028.5 L2084.9 1030.8 L2087.8 1031.5 L2090.2 1032 L2093.2 1029.2 L2095.5 1029.5 L2097.1 1026 L2098.6 1023.1 L2100.3 1021.2 L2101.5 1022.9 L2102.9 1025.1 L2104.5 1029.4 L2106.4 1030.6 L2108.4 1033.9 L2110.9 1036.3 L2112.6 1033.9 L2114 1031.4 L2115.6 1032.7 L2116.6 1034.3 L2117.4 1040.1 L2118.2 1044.4 L2118.1 1052.2 L2118.4 1053.8 L2118.8 1057 L2119.1 1054 L2119.4 1053.1 L2120.7 1055.9 L2120.8 1052.9 L2120.8 1052 L2120.8 1048.5 L2120.8 1050.7 L2120.7 1053.1 L2120.8 1052.2 L2120.6 1058.2 L2120.1 1065.9 L2119.3 1075.3 L2118.1 1086.2 L2116.6 1096 L2115.4 1103.2 L2113.2 1113.7 L2110.7 1124.3 L2107.4 1135.9 L2104.6 1145 L2102 1152.5 L2100.1 1157.6 L2099.2 1159.9 L2096.6 1166.3 L2094.6 1171.2 L2090.9 1179.4 L2088.2 1185.1 L2083.4 1194.6 L2079.1 1202.3 L2075.3 1209 L2069.7 1217.9 L2063.9 1226.6 L2060 1232.2 L2058.4 1234.4 L2055.4 1238.3 L2053.2 1241.3 L2046.4 1249.7 L2042.1 1254.7 L2038.3 1259.1 L2032.8 1265 L2028.7 1269.2 L2026.4 1269.7 L2023.7 1274.2 L2017.8 1279.8 L2012.6 1284.6 L2007.5 1289 L2003.8 1292.1 L2002.5 1293.2 L1993.5 1300.2 L1986.2 1305.6 L1979.6 1310.2 L1976 1312.6 L1974.4 1313.6 L1973.8 1314 L1969.7 1316.6 L1966.1 1318.8 L1967.8 1317.8 L1969.3 1316.9 L1970.8 1314.4 L1975.1 1311.5 L1980.3 1307.9 L1987 1303 L1988.8 1301.3 L1994.6 1296.9 L2001.7 1291.1 L2005.1 1287.9 L2007.4 1285.4 L2011.1 1281.9 L2016 1276.7 L2023.5 1268.4 L2026.6 1265.1 L2032 1258.9 L2037.7 1252.1 L2041 1247.8 L2046.2 1239.8 L2050 1233.7 L2056 1224.3 L2061.3 1215.1 L2066.8 1203.7 L2071.6 1192.1 L2074 1184.5 L2073.1 1182.3 L2071.3 1181.1 L2068.6 1179.8 L2066.4 1178 L2065 1173.1 L2064.4 1165.9 L2063.7 1161 L2062.7 1155.7 L2061.4 1150.9 L2060.2 1146.3 L2057.5 1143.4 L2056 1142.7 L2056.7 1137.5 L2056.7 1134 L2059.5 1128.6 L2061.2 1126.8 L2061.4 1123.2 L2058.5 1122.6 L2059 1116.2 L2060 1113.1 L2061.3 1109.8 L2061.6 1105.5 L2064.7 1101.7 L2065.3 1098.3 L2066.1 1093.6 L2069 1089.8 L2069.4 1085.2 L2068.5 1080.3 L2068.1 1076 L2067.8 1069.5 L2066.3 1067.5Z M1724.9 808.9 L1716.7 812.5 L1713.5 812.1 L1710.4 811.6 L1709.2 809.2 L1708.1 806.7 L1703.3 806.9 L1698.9 806.8 L1694.6 814.5 L1689.1 813.9 L1685.2 814.1 L1681.4 814.3 L1675 815.6 L1668.6 818 L1666.7 814.2 L1661.7 814.3 L1658.8 813.6 L1649.8 819.1 L1646.8 820.2 L1641.7 825.2 L1635.3 828.6 L1629.1 830.8 L1624.3 834.1 L1621.4 833.2 L1614.8 837 L1611.7 838 L1614.9 833.4 L1621.1 827.8 L1627 821.9 L1633.4 816.5 L1638.9 814.1 L1642.2 813.3 L1646.1 813.1 L1652.7 810.7 L1658.5 809.1 L1664.7 807 L1666.4 803.1 L1661.8 803 L1660.7 802.2 L1657.3 801.4 L1651.3 803.2 L1645.3 806.6 L1643 805 L1642.7 802.1 L1641.3 800.1 L1639 798.7 L1638 796.7 L1636.6 795.6 L1635.3 794.5 L1629 795.9 L1622.4 797.6 L1617.7 799.8 L1610.8 804.1 L1610.2 806.5 L1607.1 811.5 L1603.8 815.1 L1600.8 817.5 L1594.1 821.9 L1587.7 827 L1583.2 829.3 L1576.8 832.7 L1571.8 835.1 L1566.6 837.8 L1564 838.3 L1565 835.3 L1562.7 836.1 L1561.1 836.9 L1557.5 840.3 L1555.2 841.5 L1553.9 841.9 L1549.9 847.4 L1544.4 854.6 L1541 859 L1538.8 861.6 L1537.9 861.5 L1537.9 860.3 L1542.1 854.7 L1545.8 850.5 L1549.3 845.4 L1552.1 841.9 L1556.1 837.4 L1557.9 835 L1557.7 834.3 L1556.9 834.7 L1561.6 829.8 L1564 826.9 L1562.5 828 L1560.9 829.4 L1559.3 831.2 L1554.7 836.5 L1553 838.8 L1549.9 843.1 L1548.8 843.9 L1547.1 845.8 L1544.7 846.7 L1540.4 854.7 L1534.8 862.5 L1531.4 867.6 L1527.2 871.6 L1524.1 876.8 L1522.5 879.3 L1519.7 884.2 L1517.1 888.8 L1516.1 890.6 L1516.5 890 L1516.9 889.2 L1517.4 888.3 L1518 887.2 L1522.4 879.5 L1520.3 883.1 L1513.7 895.1 L1507.7 907.4 L1503.5 916.7 L1499.6 926.2 L1498.8 928.2 L1498.1 930.1 L1502.5 918.9 L1507.5 907.8 L1512.9 896.7 L1509.9 902.8 L1506.9 909.1 L1504 915.6 L1499 927.8 L1494.5 940.1 L1490.5 952.5 L1487.1 964.9 L1490.2 953.6 L1493.8 942.3 L1497.7 931.1 L1502 920.1 L1506.8 909.3 L1511.9 898.7 L1517.4 888.4 L1523.2 878.2 L1529.3 868.4 L1536.2 858.2 L1543.5 848.4 L1551 838.8 L1558.9 829.6 L1559.8 828.7 L1560.4 828 L1561.1 827.2 L1562 826.2 L1559.2 829.3 L1556.4 832.6 L1553.4 836 L1550.4 839.6 L1558.5 830.2 L1566.7 821.3 L1575 812.9 L1583.3 805.1 L1591.7 797.8 L1600 791 L1608.3 784.7 L1616.6 778.8 L1628.1 771.2 L1639.8 764.2 L1651.6 757.8 L1663.3 752.1 L1671.8 748.3 L1680.5 744.7 L1689.5 741.3 L1698.7 738.1 L1708.1 735.1 L1717.8 732.5 L1721.1 731.6 L1724.8 730.7 L1729 729.7 L1733.7 728.7 L1739 727.7 L1750.7 725.7 L1763.1 724 L1776.1 722.8 L1789.7 722.2 L1803.9 722.1 L1818.6 722.6 L1826.2 723.2 L1833 723.8 L1839.3 724.5 L1844.9 725.3 L1850.1 726.1 L1854.8 726.9 L1859.1 727.7 L1863 728.4 L1866.5 729.2 L1869.7 729.9 L1864.8 728.8 L1860 727.8 L1855.6 727 L1851.3 726.3 L1847.3 725.7 L1854.9 726.9 L1862.3 728.3 L1869.6 729.8 L1876.7 731.5 L1883.7 733.3 L1890.4 735.2 L1889.6 735 L1888.8 734.8 L1899.6 738.1 L1910.5 741.9 L1911.8 742.4 L1912.6 742.7 L1916.3 744.1 L1919.7 745.5 L1922.9 746.8 L1925.8 748 L1931.6 750.5 L1937.5 753.3 L1943.4 756.2 L1949.5 759.3 L1948.5 758.8 L1947.3 758.2 L1946 757.5 L1944.5 756.8 L1950.6 759.9 L1956.5 763.1 L1962.3 766.5 L1970 771.2 L1977.7 776.1 L1985.4 781.4 L1993 787 L1997.2 790.2 L2001.2 793.4 L2005.1 796.6 L2008.8 799.7 L2012.4 802.8 L2007.3 798.5 L2002.2 794.2 L1997.1 790.1 L1991.9 786.2 L1988.3 783.5 L1984.5 780.8 L1980.7 778.1 L1976.7 775.5 L1972.6 772.8 L1966.7 769.1 L1960.8 765.6 L1961.8 766.2 L1962.7 766.7 L1957.1 763.5 L1951.5 760.4 L1945.8 757.4 L1940 754.5 L1933.6 751.5 L1927.1 748.6 L1920.6 745.9 L1914.2 743.3 L1909.1 741.4 L1904 739.6 L1897.6 737.5 L1894.5 736.5 L1898.2 737.7 L1901.8 738.8 L1905.4 740.1 L1897.8 737.5 L1891.6 735.6 L1885.5 733.8 L1878.6 732 L1871.5 731.6 L1860.9 729.5 L1856.3 728.7 L1851.8 728 L1848.1 727.4 L1844.5 726.9 L1840.9 726.5 L1837 726 L1833.1 725.5 L1830.4 725.1 L1827.5 724.7 L1824.1 724.3 L1820.5 724.1 L1817.9 723.9 L1815.3 722.4 L1812.5 722.3 L1809.6 722.2 L1808.1 722.1 L1811.8 722.3 L1815.5 722.4 L1819.2 722.6 L1825.6 723.1 L1821 722.8 L1816.4 722.5 L1812.5 722.3 L1808.8 722.2 L1805 722.1 L1801.4 722 L1800.1 722 L1796.5 722 L1792.7 722.1 L1789.6 722.2 L1786.6 722.3 L1783.6 722.4 L1780.7 722.5 L1776.6 722.8 L1772.7 724.4 L1770.5 724.6 L1768.5 724.9 L1765 725.2 L1761.5 725.6 L1757.9 726 L1763.6 726.5 L1760.8 727 L1758 727.5 L1751.4 727.9 L1743.4 728.5 L1746.4 728.4 L1749.6 728.5 L1747.6 729 L1745.7 729.5 L1745.6 730.5 L1744.1 731 L1742.7 731.6 L1741.3 732.1 L1740 732.7 L1744.7 732.7 L1743.8 733.3 L1742.9 733.8 L1742.2 734.3 L1741.5 734.9 L1740.4 735.5 L1739.4 736.1 L1738.5 736.7 L1739.1 737.8 L1740.1 738.9 L1737.1 739.5 L1734 740.2 L1732.3 740.9 L1730.6 741.6 L1728.9 742.3 L1727.2 743.1 L1715.9 744.7 L1713.6 745.9 L1711.3 747.1 L1709 748.4 L1709.3 749.1 L1709.8 749.9 L1710.3 750.6 L1706.8 752.3 L1703.4 754.2 L1695.2 757.6 L1696.3 758.2 L1697.5 758.8 L1697.4 760 L1697.5 761.3 L1700.2 761.4 L1703.1 761.4 L1703 762.6 L1703 763.7 L1703.1 764.8 L1701.8 766.5 L1700.5 768.3 L1699.3 770.1 L1699.1 771.5 L1698.9 772.9 L1700.6 773.9 L1702.4 774.9 L1700.3 777.4 L1698.3 780 L1700 781.3 L1701.8 782.5 L1704 783.6 L1706.3 784.6 L1709.3 785.2 L1710.6 786.3 L1711.9 787.4 L1713.7 788.9 L1715.7 790.5 L1716.7 792 L1717.9 793.6 L1718.6 795.6 L1719.5 797.7 L1719.6 801.7 L1722.2 804.7Z M1534.1 869.7 L1532.8 872.8 L1534.7 872.8 L1535.3 873.9 L1535.1 877.3 L1535.6 878.8 L1537.2 878.7 L1538.2 879.5 L1540.2 878.6 L1544.5 873.3 L1549.2 868.6 L1554 863.9 L1557 859.4 L1560.2 855.5 L1558.2 855.5 L1554.5 859.1 L1550.9 863 L1547.2 865.9 L1543.4 867.7 L1544.3 865.4 L1541.6 868.2 L1538.5 870.9 L1538.2 868.4 L1538.1 866.4 L1535.9 867.6Z M1561.8 851 L1564.1 850.5 L1563.4 855.8 L1568.3 854.3 L1573 849.9 L1572 847.8 L1575.7 840.6 L1572 843.5 L1567.3 847.8 L1566.5 846.7Z M1532.9 870.3 L1530.7 875.5 L1526.4 881.3 L1525.5 881.7 L1528.8 876.2 L1531.5 871.9Z M1533.6 872.3 L1534.4 873.5 L1532.8 876.8 L1531.6 877.4 L1530.5 877.5 L1531.5 875.3Z M1578.1 838.3 L1582.1 837.2 L1590.9 828.5 L1591.8 830.5 L1601.7 820 L1610.3 812.8 L1613.7 809.7 L1609 812.3 L1601 818.1 L1590.4 827.3 L1584.2 832.7Z M1487 1114.6 L1489.1 1123.7 L1491.5 1132.7 L1494.5 1141.1 L1497.1 1149.1 L1499.9 1157.1 L1504.1 1167.1 L1507.8 1174.6 L1515.2 1189.5 L1522.1 1201.6 L1527.8 1211.6 L1532.5 1219.5 L1537.8 1228.3 L1541.3 1233.7 L1543.8 1237.4 L1546.7 1243.3 L1551.5 1249.3 L1553.2 1251.4 L1548.4 1245.6 L1546.5 1243.2 L1541.7 1236.9 L1534.1 1226.4 L1533.7 1225.7 L1526.2 1214.3 L1529.9 1220.2 L1528.3 1217.6 L1520.6 1205 L1517 1198.5 L1519.5 1203.1 L1518.6 1201.6 L1517.9 1200.1 L1519.8 1203.7 L1516.8 1198.3 L1510.4 1186 L1505.6 1175.7 L1501.1 1165.1 L1495.2 1149.6 L1491.9 1139.5 L1488.9 1129.3 L1486.9 1121.9 L1486.5 1120.2 L1484.4 1110.8 L1484.1 1109.5 L1482.3 1100.5 L1483.8 1108.3 L1484.4 1110.9 L1482.4 1100.6 L1482.1 1099.1 L1483.7 1107.5 L1484.4 1110.9 L1486.1 1118.6 L1487.2 1122.8 L1489.5 1131.6 L1492.9 1142.8 L1493.7 1145.3 L1491.5 1133.8 L1488.3 1121.6Z M1590.1 1271.2 L1596.7 1276.1 L1601.9 1281.9 L1604.8 1283.1 L1609.2 1287 L1614.5 1289.1 L1617.2 1293.5 L1615.6 1293.7 L1617.4 1297.3 L1616 1297.9 L1614.1 1296.5 L1611.8 1293.4 L1606.1 1289.3 L1605.8 1287.4 L1602.7 1283.1 L1597 1277.9Z M1606.3 1291.5 L1612.5 1295.6 L1614.5 1298 L1615.4 1300.8 L1614.2 1301.4 L1618.2 1305.4 L1616.5 1305.3 L1612 1302.5 L1608.2 1299.9 L1606.4 1297.2 L1608 1296.3 L1607.2 1294.1Z M1480.7 1069.4 L1481.8 1075.5 L1483.2 1081.6 L1485.9 1094.3 L1487.9 1099.8 L1489.2 1108.1 L1495.2 1127.5 L1491.7 1121.7 L1487.9 1109.7 L1485.3 1101.2 L1485.4 1106.4 L1484.4 1103 L1482.5 1093.4 L1481.4 1086.2 L1480.5 1078.5 L1478.3 1069.4 L1478 1064.8 L1477.7 1060.2 L1477.4 1052.5 L1477.3 1046 L1478.9 1057.3 L1479.2 1058.7 L1479.8 1064Z M1690.5 1047.8 L1696.8 1045.8 L1695.2 1041.6 L1691.8 1041.2Z M1688.4 1036.8 L1691.7 1037.8 L1690.1 1038.7Z M1681.1 1032.3 L1683.9 1033.8 L1683.2 1031.5Z M1674.5 1028.4 L1676.9 1028.2 L1675.8 1029.2Z" fill="#c9ccd6" fill-opacity=".14" stroke="#d5d8e0" stroke-opacity=".2" stroke-width=".9" stroke-linejoin="round"/>
<path d="M1685.8 1343.5 L1679 1340.6 L1672.4 1337.3 L1665.9 1333.6 L1659.6 1329.6 L1653.4 1325.2 L1647.5 1320.5 L1641.7 1315.5 L1636.1 1310.1 L1630.7 1304.4 L1625.5 1298.3 L1620.5 1292 L1615.8 1285.4 L1611.2 1278.4 L1606.9 1271.2 L1602.8 1263.7 L1599 1256 L1595.4 1248 L1592.1 1239.7 L1589 1231.2 L1586.1 1222.5 L1583.6 1213.5 L1581.3 1204.3 L1579.2 1195 L1577.4 1185.5 L1575.9 1175.7 L1574.7 1165.9 L1573.7 1155.8 L1573 1145.7 L1572.6 1135.4 L1572.5 1125 L1572.6 1114.5 L1573 1103.9 L1573.7 1093.3 L1574.7 1082.6 L1575.9 1071.8 L1577.4 1061 L1579.2 1050.2 L1581.3 1039.4 L1583.6 1028.6 L1586.1 1017.8 L1589 1007 L1592.1 996.3 L1595.4 985.6 L1599 975 L1602.8 964.5 L1606.9 954.1 L1611.2 943.8 L1615.8 933.6 L1620.5 923.6 L1625.5 913.7 L1630.7 903.9 L1636.1 894.4 L1641.7 885 L1647.5 875.8 L1653.4 866.8 L1659.6 858 L1665.9 849.5 L1672.4 841.2 L1679 833.1 L1685.8 825.3 L1692.7 817.7 L1699.8 810.5 L1706.9 803.5 L1714.2 796.8 L1721.6 790.4 L1729.1 784.3 L1736.6 778.6 L1744.3 773.1 L1752 768 L1759.7 763.2 L1767.6 758.8 L1775.4 754.7 L1783.3 751 L1791.2 747.6M1718.5 1354 L1712.8 1352.2 L1707.2 1350 L1701.7 1347.4 L1696.3 1344.5 L1691 1341.2 L1685.9 1337.5 L1680.9 1333.5 L1676.1 1329.1 L1671.4 1324.4 L1666.9 1319.3 L1662.5 1313.9 L1658.3 1308.2 L1654.2 1302.2 L1650.4 1295.8 L1646.7 1289.1 L1643.2 1282.1 L1639.9 1274.9 L1636.8 1267.3 L1633.9 1259.5 L1631.2 1251.5 L1628.7 1243.1 L1626.4 1234.5 L1624.3 1225.7 L1622.4 1216.7 L1620.7 1207.5 L1619.3 1198 L1618.1 1188.4 L1617.1 1178.6 L1616.3 1168.6 L1615.7 1158.5 L1615.4 1148.3 L1615.3 1137.9 L1615.4 1127.4 L1615.7 1116.8 L1616.3 1106.1 L1617.1 1095.3 L1618.1 1084.5 L1619.3 1073.6 L1620.7 1062.7 L1622.4 1051.8 L1624.3 1040.8 L1626.4 1029.9 L1628.7 1018.9 L1631.2 1008.1 L1633.9 997.2 L1636.8 986.4 L1639.9 975.7 L1643.2 965 L1646.7 954.5 L1650.4 944 L1654.2 933.7 L1658.3 923.5 L1662.5 913.5 L1666.9 903.6 L1671.4 893.9 L1676.1 884.4 L1680.9 875.1 L1685.9 865.9 L1691 857 L1696.3 848.4 L1701.7 839.9 L1707.2 831.7 L1712.8 823.8 L1718.5 816.1 L1724.3 808.7 L1730.2 801.6 L1736.2 794.8 L1742.3 788.3 L1748.4 782.1 L1754.6 776.2 L1760.9 770.7 L1767.2 765.5 L1773.5 760.6 L1779.9 756.1 L1786.3 751.9 L1792.7 748.1M1744 1359.5 L1739.7 1358.4 L1735.5 1356.9 L1731.4 1355 L1727.3 1352.7 L1723.4 1350.1 L1719.5 1347.1 L1715.7 1343.7 L1712 1339.9 L1708.5 1335.8 L1705 1331.3 L1701.7 1326.5 L1698.4 1321.4 L1695.3 1315.9 L1692.4 1310 L1689.5 1303.9 L1686.8 1297.4 L1684.2 1290.6 L1681.8 1283.6 L1679.5 1276.2 L1677.4 1268.5 L1675.4 1260.6 L1673.5 1252.4 L1671.8 1244 L1670.3 1235.3 L1668.9 1226.3 L1667.7 1217.2 L1666.6 1207.8 L1665.7 1198.3 L1665 1188.5 L1664.4 1178.6 L1664 1168.5 L1663.7 1158.3 L1663.7 1147.9 L1663.7 1137.4 L1664 1126.8 L1664.4 1116 L1665 1105.2 L1665.7 1094.4 L1666.6 1083.4 L1667.7 1072.4 L1668.9 1061.4 L1670.3 1050.3 L1671.8 1039.3 L1673.5 1028.2 L1675.4 1017.2 L1677.4 1006.2 L1679.5 995.2 L1681.8 984.3 L1684.2 973.5 L1686.8 962.8 L1689.5 952.1 L1692.4 941.6 L1695.3 931.2 L1698.4 920.9 L1701.7 910.8 L1705 900.9 L1708.5 891.1 L1712 881.5 L1715.7 872.1 L1719.5 862.9 L1723.4 854 L1727.3 845.2 L1731.4 836.7 L1735.5 828.5 L1739.7 820.5 L1744 812.8 L1748.4 805.4 L1752.8 798.2 L1757.2 791.4 L1761.8 784.9 L1766.3 778.7 L1770.9 772.8 L1775.6 767.2 L1780.2 762 L1784.9 757.1 L1789.7 752.6 L1794.4 748.4M1768 1362.8 L1765.4 1362.3 L1762.7 1361.4 L1760.2 1360.1 L1757.6 1358.4 L1755.1 1356.3 L1752.7 1353.9 L1750.3 1351.1 L1748 1347.9 L1745.8 1344.3 L1743.6 1340.4 L1741.5 1336.1 L1739.4 1331.5 L1737.5 1326.5 L1735.6 1321.1 L1733.7 1315.4 L1732 1309.4 L1730.3 1303.1 L1728.8 1296.4 L1727.3 1289.5 L1725.9 1282.2 L1724.5 1274.7 L1723.3 1266.9 L1722.2 1258.8 L1721.2 1250.4 L1720.2 1241.8 L1719.4 1232.9 L1718.6 1223.8 L1718 1214.5 L1717.4 1205 L1717 1195.3 L1716.6 1185.4 L1716.4 1175.3 L1716.2 1165.1 L1716.1 1154.7 L1716.2 1144.2 L1716.4 1133.6 L1716.6 1122.9 L1717 1112 L1717.4 1101.1 L1718 1090.1 L1718.6 1079.1 L1719.4 1068 L1720.2 1056.9 L1721.2 1045.7 L1722.2 1034.6 L1723.3 1023.5 L1724.5 1012.3 L1725.9 1001.3 L1727.3 990.3 L1728.8 979.3 L1730.3 968.5 L1732 957.7 L1733.7 947 L1735.6 936.5 L1737.5 926 L1739.4 915.8 L1741.5 905.6 L1743.6 895.7 L1745.8 885.9 L1748 876.3 L1750.3 866.9 L1752.7 857.8 L1755.1 848.8 L1757.6 840.1 L1760.2 831.7 L1762.7 823.5 L1765.4 815.6 L1768 807.9 L1770.7 800.6 L1773.5 793.5 L1776.2 786.8 L1779 780.3 L1781.9 774.2 L1784.7 768.4 L1787.6 762.9 L1790.4 757.8 L1793.3 753.1 L1796.2 748.6M1788.6 1364.1 L1787.7 1363.7 L1786.9 1362.9 L1786 1361.7 L1785.1 1360.1 L1784.3 1358.2 L1783.5 1355.8 L1782.7 1353.1 L1781.9 1350 L1781.1 1346.6 L1780.4 1342.7 L1779.7 1338.5 L1779 1334 L1778.3 1329 L1777.7 1323.8 L1777.1 1318.2 L1776.5 1312.2 L1775.9 1306 L1775.4 1299.4 L1774.9 1292.5 L1774.4 1285.3 L1774 1277.8 L1773.6 1270 L1773.2 1262 L1772.9 1253.7 L1772.5 1245.1 L1772.2 1236.3 L1772 1227.2 L1771.8 1217.9 L1771.6 1208.4 L1771.4 1198.7 L1771.3 1188.9 L1771.2 1178.8 L1771.2 1168.6 L1771.2 1158.2 L1771.2 1147.7 L1771.2 1137.1 L1771.3 1126.3 L1771.4 1115.5 L1771.6 1104.5 L1771.8 1093.5 L1772 1082.4 L1772.2 1071.3 L1772.5 1060.2 L1772.9 1049 L1773.2 1037.8 L1773.6 1026.6 L1774 1015.5 L1774.4 1004.4 L1774.9 993.3 L1775.4 982.3 L1775.9 971.3 L1776.5 960.5 L1777.1 949.8 L1777.7 939.1 L1778.3 928.6 L1779 918.3 L1779.7 908 L1780.4 898 L1781.1 888.1 L1781.9 878.5 L1782.7 869 L1783.5 859.7 L1784.3 850.7 L1785.1 841.9 L1786 833.3 L1786.9 825 L1787.7 817 L1788.6 809.2 L1789.5 801.8 L1790.5 794.6 L1791.4 787.7 L1792.3 781.2 L1793.3 774.9 L1794.2 769 L1795.2 763.4 L1796.2 758.2 L1797.2 753.3 L1798.1 748.8M1809.6 1364.1 L1810.5 1363.7 L1811.3 1362.9 L1812.2 1361.7 L1813.1 1360.1 L1813.9 1358.2 L1814.7 1355.8 L1815.5 1353.1 L1816.3 1350 L1817.1 1346.6 L1817.8 1342.7 L1818.5 1338.5 L1819.2 1334 L1819.9 1329 L1820.5 1323.8 L1821.1 1318.2 L1821.7 1312.2 L1822.3 1306 L1822.8 1299.4 L1823.3 1292.5 L1823.8 1285.3 L1824.2 1277.8 L1824.6 1270 L1825 1262 L1825.3 1253.7 L1825.7 1245.1 L1826 1236.3 L1826.2 1227.2 L1826.4 1217.9 L1826.6 1208.4 L1826.8 1198.7 L1826.9 1188.9 L1827 1178.8 L1827 1168.6 L1827 1158.2 L1827 1147.7 L1827 1137.1 L1826.9 1126.3 L1826.8 1115.5 L1826.6 1104.5 L1826.4 1093.5 L1826.2 1082.4 L1826 1071.3 L1825.7 1060.2 L1825.3 1049 L1825 1037.8 L1824.6 1026.6 L1824.2 1015.5 L1823.8 1004.4 L1823.3 993.3 L1822.8 982.3 L1822.3 971.3 L1821.7 960.5 L1821.1 949.8 L1820.5 939.1 L1819.9 928.6 L1819.2 918.3 L1818.5 908 L1817.8 898 L1817.1 888.1 L1816.3 878.5 L1815.5 869 L1814.7 859.7 L1813.9 850.7 L1813.1 841.9 L1812.2 833.3 L1811.3 825 L1810.5 817 L1809.6 809.2 L1808.7 801.8 L1807.7 794.6 L1806.8 787.7 L1805.9 781.2 L1804.9 774.9 L1804 769 L1803 763.4 L1802 758.2 L1801 753.3 L1800.1 748.8M1830.2 1362.8 L1832.8 1362.3 L1835.5 1361.4 L1838 1360.1 L1840.6 1358.4 L1843.1 1356.3 L1845.5 1353.9 L1847.9 1351.1 L1850.2 1347.9 L1852.4 1344.3 L1854.6 1340.4 L1856.7 1336.1 L1858.8 1331.5 L1860.7 1326.5 L1862.6 1321.1 L1864.5 1315.4 L1866.2 1309.4 L1867.9 1303.1 L1869.4 1296.4 L1870.9 1289.5 L1872.3 1282.2 L1873.7 1274.7 L1874.9 1266.9 L1876 1258.8 L1877 1250.4 L1878 1241.8 L1878.8 1232.9 L1879.6 1223.8 L1880.2 1214.5 L1880.8 1205 L1881.2 1195.3 L1881.6 1185.4 L1881.8 1175.3 L1882 1165.1 L1882.1 1154.7 L1882 1144.2 L1881.8 1133.6 L1881.6 1122.9 L1881.2 1112 L1880.8 1101.1 L1880.2 1090.1 L1879.6 1079.1 L1878.8 1068 L1878 1056.9 L1877 1045.7 L1876 1034.6 L1874.9 1023.5 L1873.7 1012.3 L1872.3 1001.3 L1870.9 990.3 L1869.4 979.3 L1867.9 968.5 L1866.2 957.7 L1864.5 947 L1862.6 936.5 L1860.7 926 L1858.8 915.8 L1856.7 905.6 L1854.6 895.7 L1852.4 885.9 L1850.2 876.3 L1847.9 866.9 L1845.5 857.8 L1843.1 848.8 L1840.6 840.1 L1838 831.7 L1835.5 823.5 L1832.8 815.6 L1830.2 807.9 L1827.5 800.6 L1824.7 793.5 L1822 786.8 L1819.2 780.3 L1816.3 774.2 L1813.5 768.4 L1810.6 762.9 L1807.8 757.8 L1804.9 753.1 L1802 748.6M1854.2 1359.5 L1858.5 1358.4 L1862.7 1356.9 L1866.8 1355 L1870.9 1352.7 L1874.8 1350.1 L1878.7 1347.1 L1882.5 1343.7 L1886.2 1339.9 L1889.7 1335.8 L1893.2 1331.3 L1896.5 1326.5 L1899.8 1321.4 L1902.9 1315.9 L1905.8 1310 L1908.7 1303.9 L1911.4 1297.4 L1914 1290.6 L1916.4 1283.6 L1918.7 1276.2 L1920.8 1268.5 L1922.8 1260.6 L1924.7 1252.4 L1926.4 1244 L1927.9 1235.3 L1929.3 1226.3 L1930.5 1217.2 L1931.6 1207.8 L1932.5 1198.3 L1933.2 1188.5 L1933.8 1178.6 L1934.2 1168.5 L1934.5 1158.3 L1934.5 1147.9 L1934.5 1137.4 L1934.2 1126.8 L1933.8 1116 L1933.2 1105.2 L1932.5 1094.4 L1931.6 1083.4 L1930.5 1072.4 L1929.3 1061.4 L1927.9 1050.3 L1926.4 1039.3 L1924.7 1028.2 L1922.8 1017.2 L1920.8 1006.2 L1918.7 995.2 L1916.4 984.3 L1914 973.5 L1911.4 962.8 L1908.7 952.1 L1905.8 941.6 L1902.9 931.2 L1899.8 920.9 L1896.5 910.8 L1893.2 900.9 L1889.7 891.1 L1886.2 881.5 L1882.5 872.1 L1878.7 862.9 L1874.8 854 L1870.9 845.2 L1866.8 836.7 L1862.7 828.5 L1858.5 820.5 L1854.2 812.8 L1849.8 805.4 L1845.4 798.2 L1841 791.4 L1836.4 784.9 L1831.9 778.7 L1827.3 772.8 L1822.6 767.2 L1818 762 L1813.3 757.1 L1808.5 752.6 L1803.8 748.4M1879.7 1354 L1885.4 1352.2 L1891 1350 L1896.5 1347.4 L1901.9 1344.5 L1907.2 1341.2 L1912.3 1337.5 L1917.3 1333.5 L1922.1 1329.1 L1926.8 1324.4 L1931.3 1319.3 L1935.7 1313.9 L1939.9 1308.2 L1944 1302.2 L1947.8 1295.8 L1951.5 1289.1 L1955 1282.1 L1958.3 1274.9 L1961.4 1267.3 L1964.3 1259.5 L1967 1251.5 L1969.5 1243.1 L1971.8 1234.5 L1973.9 1225.7 L1975.8 1216.7 L1977.5 1207.5 L1978.9 1198 L1980.1 1188.4 L1981.1 1178.6 L1981.9 1168.6 L1982.5 1158.5 L1982.8 1148.3 L1982.9 1137.9 L1982.8 1127.4 L1982.5 1116.8 L1981.9 1106.1 L1981.1 1095.3 L1980.1 1084.5 L1978.9 1073.6 L1977.5 1062.7 L1975.8 1051.8 L1973.9 1040.8 L1971.8 1029.9 L1969.5 1018.9 L1967 1008.1 L1964.3 997.2 L1961.4 986.4 L1958.3 975.7 L1955 965 L1951.5 954.5 L1947.8 944 L1944 933.7 L1939.9 923.5 L1935.7 913.5 L1931.3 903.6 L1926.8 893.9 L1922.1 884.4 L1917.3 875.1 L1912.3 865.9 L1907.2 857 L1901.9 848.4 L1896.5 839.9 L1891 831.7 L1885.4 823.8 L1879.7 816.1 L1873.9 808.7 L1868 801.6 L1862 794.8 L1855.9 788.3 L1849.8 782.1 L1843.6 776.2 L1837.3 770.7 L1831 765.5 L1824.7 760.6 L1818.3 756.1 L1811.9 751.9 L1805.5 748.1M1912.4 1343.5 L1919.2 1340.6 L1925.8 1337.3 L1932.3 1333.6 L1938.6 1329.6 L1944.8 1325.2 L1950.7 1320.5 L1956.5 1315.5 L1962.1 1310.1 L1967.5 1304.4 L1972.7 1298.3 L1977.7 1292 L1982.4 1285.4 L1987 1278.4 L1991.3 1271.2 L1995.4 1263.7 L1999.2 1256 L2002.8 1248 L2006.1 1239.7 L2009.2 1231.2 L2012.1 1222.5 L2014.6 1213.5 L2016.9 1204.3 L2019 1195 L2020.8 1185.5 L2022.3 1175.7 L2023.5 1165.9 L2024.5 1155.8 L2025.2 1145.7 L2025.6 1135.4 L2025.7 1125 L2025.6 1114.5 L2025.2 1103.9 L2024.5 1093.3 L2023.5 1082.6 L2022.3 1071.8 L2020.8 1061 L2019 1050.2 L2016.9 1039.4 L2014.6 1028.6 L2012.1 1017.8 L2009.2 1007 L2006.1 996.3 L2002.8 985.6 L1999.2 975 L1995.4 964.5 L1991.3 954.1 L1987 943.8 L1982.4 933.6 L1977.7 923.6 L1972.7 913.7 L1967.5 903.9 L1962.1 894.4 L1956.5 885 L1950.7 875.8 L1944.8 866.8 L1938.6 858 L1932.3 849.5 L1925.8 841.2 L1919.2 833.1 L1912.4 825.3 L1905.5 817.7 L1898.4 810.5 L1891.3 803.5 L1884 796.8 L1876.6 790.4 L1869.1 784.3 L1861.6 778.6 L1853.9 773.1 L1846.2 768 L1838.5 763.2 L1830.6 758.8 L1822.8 754.7 L1814.9 751 L1807 747.6M1945.9 1328.7 L1953.4 1324.6 L1960.7 1320.1 L1967.9 1315.4 L1974.8 1310.2 L1981.5 1304.8 L1988 1299 L1994.2 1293 L2000.2 1286.6 L2006 1279.9 L2011.5 1273 L2016.8 1265.7 L2021.7 1258.2 L2026.5 1250.5 L2030.9 1242.4 L2035.1 1234.2 L2038.9 1225.7 L2042.5 1217 L2045.8 1208 L2048.8 1198.9 L2051.5 1189.6 L2053.8 1180.1 L2055.9 1170.4 L2057.6 1160.6 L2059.1 1150.7 L2060.2 1140.6 L2061 1130.4 L2061.5 1120.1 L2061.6 1109.7 L2061.5 1099.2 L2061 1088.6 L2060.2 1078 L2059.1 1067.4 L2057.6 1056.7 L2055.9 1046 L2053.8 1035.3 L2051.5 1024.7 L2048.8 1014 L2045.8 1003.4 L2042.5 992.8 L2038.9 982.3 L2035.1 971.8 L2030.9 961.5 L2026.5 951.2 L2021.7 941.1 L2016.8 931.1 L2011.5 921.2 L2006 911.5 L2000.2 901.9 L1994.2 892.5 L1988 883.3 L1981.5 874.3 L1974.8 865.5 L1967.9 856.9 L1960.7 848.6 L1953.4 840.5 L1945.9 832.6 L1938.2 825 L1930.4 817.6 L1922.4 810.5 L1914.2 803.7 L1905.9 797.3 L1897.4 791.1 L1888.9 785.2 L1880.2 779.6 L1871.5 774.3 L1862.6 769.4 L1853.7 764.8 L1844.7 760.6 L1835.6 756.7 L1826.5 753.1 L1817.4 749.9 L1808.3 747.1M2000.9 1292.8 L2008 1286.6 L2015 1280.1 L2021.6 1273.3 L2028 1266.3 L2034.1 1258.9 L2039.9 1251.4 L2045.4 1243.5 L2050.7 1235.4 L2055.6 1227.1 L2060.2 1218.6 L2064.5 1209.8 L2068.4 1200.9 L2072.1 1191.7 L2075.4 1182.4 L2078.3 1172.9 L2080.9 1163.3 L2083.2 1153.5 L2085.2 1143.6 L2086.7 1133.5 L2088 1123.4 L2088.9 1113.1 L2089.4 1102.8 L2089.6 1092.3 L2089.4 1081.9 L2088.9 1071.4 L2088 1060.8 L2086.7 1050.2 L2085.2 1039.6 L2083.2 1029.1 L2080.9 1018.5 L2078.3 1008 L2075.4 997.5 L2072.1 987.1 L2068.4 976.7 L2064.5 966.4 L2060.2 956.3 L2055.6 946.2 L2050.7 936.2 L2045.4 926.4 L2039.9 916.7 L2034.1 907.2 L2028 897.8 L2021.6 888.7 L2015 879.7 L2008 870.9 L2000.9 862.3 L1993.5 853.9 L1985.8 845.8 L1977.9 837.9 L1969.8 830.3 L1961.5 822.9 L1953 815.8 L1944.3 808.9 L1935.5 802.4 L1926.4 796.1 L1917.2 790.2 L1907.9 784.6 L1898.4 779.2 L1888.9 774.2 L1879.2 769.6 L1869.4 765.2 L1859.5 761.2 L1849.5 757.6 L1839.5 754.3 L1829.5 751.3 L1819.4 748.7 L1809.2 746.5M2061.6 1227.6 L2067.2 1219.2 L2072.4 1210.5 L2077.3 1201.7 L2081.9 1192.7 L2086.1 1183.4 L2090 1174.1 L2093.5 1164.5 L2096.7 1154.8 L2099.5 1145 L2101.9 1135.1 L2104 1125 L2105.7 1114.9 L2107 1104.6 L2107.9 1094.3 L2108.5 1084 L2108.7 1073.5 L2108.5 1063.1 L2107.9 1052.6 L2107 1042.1 L2105.7 1031.6 L2104 1021.1 L2101.9 1010.7 L2099.5 1000.3 L2096.7 989.9 L2093.5 979.6 L2090 969.4 L2086.1 959.3 L2081.9 949.3 L2077.3 939.4 L2072.4 929.6 L2067.2 919.9 L2061.6 910.5 L2055.8 901.1 L2049.6 892 L2043.1 883 L2036.3 874.2 L2029.2 865.7 L2021.8 857.3 L2014.2 849.2 L2006.2 841.3 L1998.1 833.7 L1989.7 826.3 L1981.1 819.2 L1972.2 812.4 L1963.2 805.8 L1953.9 799.5 L1944.4 793.6 L1934.8 787.9 L1925 782.5 L1915.1 777.5 L1905 772.8 L1894.8 768.4 L1884.4 764.4 L1874 760.7 L1863.5 757.3 L1852.9 754.3 L1842.2 751.6 L1831.5 749.3 L1820.7 747.4 L1809.9 745.8M2111.4 1115.8 L2113.5 1105.6 L2115.3 1095.4 L2116.6 1085 L2117.6 1074.7 L2118.2 1064.2 L2118.4 1053.8 L2118.2 1043.4 L2117.6 1032.9 L2116.6 1022.5 L2115.3 1012.1 L2113.5 1001.7 L2111.4 991.4 L2108.9 981.1 L2106 970.9 L2102.8 960.9 L2099.1 950.9 L2095.1 941 L2090.8 931.2 L2086.1 921.6 L2081 912.2 L2075.6 902.9 L2069.9 893.7 L2063.8 884.8 L2057.4 876 L2050.7 867.5 L2043.7 859.1 L2036.4 851 L2028.8 843.2 L2020.9 835.5 L2012.7 828.1 L2004.3 821 L1995.7 814.2 L1986.8 807.6 L1977.6 801.3 L1968.3 795.4 L1958.7 789.7 L1949 784.3 L1939.1 779.3 L1929 774.5 L1918.7 770.1 L1908.3 766.1 L1897.8 762.3 L1887.1 758.9 L1876.3 755.9 L1865.5 753.2 L1854.5 750.9 L1843.5 748.9 L1832.5 747.3 L1821.4 746 L1810.2 745.1M2108.9 961.7 L2106 951.7 L2102.8 941.8 L2099.1 932.1 L2095.1 922.4 L2090.8 913 L2086.1 903.6 L2081 894.5 L2075.6 885.5 L2069.9 876.8 L2063.8 868.2 L2057.4 859.8 L2050.7 851.7 L2043.7 843.8 L2036.4 836.1 L2028.8 828.7 L2020.9 821.6 L2012.7 814.7 L2004.3 808.2 L1995.7 801.9 L1986.8 795.8 L1977.6 790.1 L1968.3 784.7 L1958.7 779.7 L1949 774.9 L1939.1 770.5 L1929 766.4 L1918.7 762.6 L1908.3 759.2 L1897.8 756.1 L1887.1 753.4 L1876.3 751.1 L1865.5 749 L1854.5 747.4 L1843.5 746.1 L1832.5 745.2 L1821.4 744.6 L1810.2 744.4M2055.8 851.8 L2049.6 843.9 L2043.1 836.2 L2036.3 828.7 L2029.2 821.5 L2021.8 814.6 L2014.2 807.9 L2006.2 801.6 L1998.1 795.5 L1989.7 789.7 L1981.1 784.3 L1972.2 779.1 L1963.2 774.3 L1953.9 769.8 L1944.4 765.7 L1934.8 761.8 L1925 758.4 L1915.1 755.2 L1905 752.5 L1894.8 750 L1884.4 748 L1874 746.3 L1863.5 744.9 L1852.9 744 L1842.2 743.4 L1831.5 743.1 L1820.7 743.2 L1809.9 743.7M1993.5 789 L1985.8 783.4 L1977.9 778.1 L1969.8 773.2 L1961.5 768.6 L1953 764.3 L1944.3 760.4 L1935.5 756.8 L1926.4 753.6 L1917.2 750.7 L1907.9 748.2 L1898.4 746 L1888.9 744.2 L1879.2 742.8 L1869.4 741.7 L1859.5 741 L1849.5 740.7 L1839.5 740.7 L1829.5 741.2 L1819.4 741.9 L1809.2 743.1M1938.2 755.1 L1930.4 751.7 L1922.4 748.7 L1914.2 746 L1905.9 743.7 L1897.4 741.7 L1888.9 740.1 L1880.2 738.9 L1871.5 738 L1862.6 737.5 L1853.7 737.4 L1844.7 737.7 L1835.6 738.3 L1826.5 739.3 L1817.4 740.7 L1808.3 742.5M1905.5 741.5 L1898.4 739.3 L1891.3 737.4 L1884 736 L1876.6 734.9 L1869.1 734.1 L1861.6 733.8 L1853.9 733.8 L1846.2 734.2 L1838.5 735 L1830.6 736.2 L1822.8 737.7 L1814.9 739.7 L1807 741.9M1873.9 732.2 L1868 731.1 L1862 730.5 L1855.9 730.2 L1849.8 730.2 L1843.6 730.7 L1837.3 731.6 L1831 732.8 L1824.7 734.4 L1818.3 736.4 L1811.9 738.8 L1805.5 741.5M1849.8 727.4 L1845.4 727 L1841 727.1 L1836.4 727.5 L1831.9 728.3 L1827.3 729.5 L1822.6 731.1 L1818 733 L1813.3 735.3 L1808.5 738.1 L1803.8 741.1M1827.5 724.7 L1824.7 724.9 L1822 725.6 L1819.2 726.6 L1816.3 728.1 L1813.5 729.9 L1810.6 732.1 L1807.8 734.6 L1804.9 737.6 L1802 740.9M1808.7 723.5 L1807.7 723.9 L1806.8 724.6 L1805.9 725.8 L1804.9 727.3 L1804 729.3 L1803 731.6 L1802 734.3 L1801 737.3 L1800.1 740.8M1789.5 723.5 L1790.5 723.9 L1791.4 724.6 L1792.3 725.8 L1793.3 727.3 L1794.2 729.3 L1795.2 731.6 L1796.2 734.3 L1797.2 737.3 L1798.1 740.8M1770.7 724.7 L1773.5 724.9 L1776.2 725.6 L1779 726.6 L1781.9 728.1 L1784.7 729.9 L1787.6 732.1 L1790.4 734.6 L1793.3 737.6 L1796.2 740.9M1748.4 727.4 L1752.8 727 L1757.2 727.1 L1761.8 727.5 L1766.3 728.3 L1770.9 729.5 L1775.6 731.1 L1780.2 733 L1784.9 735.3 L1789.7 738.1 L1794.4 741.1M1724.3 732.2 L1730.2 731.1 L1736.2 730.5 L1742.3 730.2 L1748.4 730.2 L1754.6 730.7 L1760.9 731.6 L1767.2 732.8 L1773.5 734.4 L1779.9 736.4 L1786.3 738.8 L1792.7 741.5M1692.7 741.5 L1699.8 739.3 L1706.9 737.4 L1714.2 736 L1721.6 734.9 L1729.1 734.1 L1736.6 733.8 L1744.3 733.8 L1752 734.2 L1759.7 735 L1767.6 736.2 L1775.4 737.7 L1783.3 739.7 L1791.2 741.9M1660 755.1 L1667.8 751.7 L1675.8 748.7 L1684 746 L1692.3 743.7 L1700.8 741.7 L1709.3 740.1 L1718 738.9 L1726.7 738 L1735.6 737.5 L1744.5 737.4 L1753.5 737.7 L1762.6 738.3 L1771.7 739.3 L1780.8 740.7 L1789.9 742.5M1604.7 789 L1612.4 783.4 L1620.3 778.1 L1628.4 773.2 L1636.7 768.6 L1645.2 764.3 L1653.9 760.4 L1662.7 756.8 L1671.8 753.6 L1681 750.7 L1690.3 748.2 L1699.8 746 L1709.3 744.2 L1719 742.8 L1728.8 741.7 L1738.7 741 L1748.7 740.7 L1758.7 740.7 L1768.7 741.2 L1778.8 741.9 L1789 743.1M1542.4 851.8 L1548.6 843.9 L1555.1 836.2 L1561.9 828.7 L1569 821.5 L1576.4 814.6 L1584 807.9 L1592 801.6 L1600.1 795.5 L1608.5 789.7 L1617.1 784.3 L1626 779.1 L1635 774.3 L1644.3 769.8 L1653.8 765.7 L1663.4 761.8 L1673.2 758.4 L1683.1 755.2 L1693.2 752.5 L1703.4 750 L1713.8 748 L1724.2 746.3 L1734.7 744.9 L1745.3 744 L1756 743.4 L1766.7 743.1 L1777.5 743.2 L1788.3 743.7M1489.3 961.7 L1492.2 951.7 L1495.4 941.8 L1499.1 932.1 L1503.1 922.4 L1507.4 913 L1512.1 903.6 L1517.2 894.5 L1522.6 885.5 L1528.3 876.8 L1534.4 868.2 L1540.8 859.8 L1547.5 851.7 L1554.5 843.8 L1561.8 836.1 L1569.4 828.7 L1577.3 821.6 L1585.5 814.7 L1593.9 808.2 L1602.5 801.9 L1611.4 795.8 L1620.6 790.1 L1629.9 784.7 L1639.5 779.7 L1649.2 774.9 L1659.1 770.5 L1669.2 766.4 L1679.5 762.6 L1689.9 759.2 L1700.4 756.1 L1711.1 753.4 L1721.9 751.1 L1732.7 749 L1743.7 747.4 L1754.7 746.1 L1765.7 745.2 L1776.8 744.6 L1788 744.4M1486.8 1115.8 L1484.7 1105.6 L1482.9 1095.4 L1481.6 1085 L1480.6 1074.7 L1480 1064.2 L1479.8 1053.8 L1480 1043.4 L1480.6 1032.9 L1481.6 1022.5 L1482.9 1012.1 L1484.7 1001.7 L1486.8 991.4 L1489.3 981.1 L1492.2 970.9 L1495.4 960.9 L1499.1 950.9 L1503.1 941 L1507.4 931.2 L1512.1 921.6 L1517.2 912.2 L1522.6 902.9 L1528.3 893.7 L1534.4 884.8 L1540.8 876 L1547.5 867.5 L1554.5 859.1 L1561.8 851 L1569.4 843.2 L1577.3 835.5 L1585.5 828.1 L1593.9 821 L1602.5 814.2 L1611.4 807.6 L1620.6 801.3 L1629.9 795.4 L1639.5 789.7 L1649.2 784.3 L1659.1 779.3 L1669.2 774.5 L1679.5 770.1 L1689.9 766.1 L1700.4 762.3 L1711.1 758.9 L1721.9 755.9 L1732.7 753.2 L1743.7 750.9 L1754.7 748.9 L1765.7 747.3 L1776.8 746 L1788 745.1M1536.6 1227.6 L1531 1219.2 L1525.8 1210.5 L1520.9 1201.7 L1516.3 1192.7 L1512.1 1183.4 L1508.2 1174.1 L1504.7 1164.5 L1501.5 1154.8 L1498.7 1145 L1496.3 1135.1 L1494.2 1125 L1492.5 1114.9 L1491.2 1104.6 L1490.3 1094.3 L1489.7 1084 L1489.5 1073.5 L1489.7 1063.1 L1490.3 1052.6 L1491.2 1042.1 L1492.5 1031.6 L1494.2 1021.1 L1496.3 1010.7 L1498.7 1000.3 L1501.5 989.9 L1504.7 979.6 L1508.2 969.4 L1512.1 959.3 L1516.3 949.3 L1520.9 939.4 L1525.8 929.6 L1531 919.9 L1536.6 910.5 L1542.4 901.1 L1548.6 892 L1555.1 883 L1561.9 874.2 L1569 865.7 L1576.4 857.3 L1584 849.2 L1592 841.3 L1600.1 833.7 L1608.5 826.3 L1617.1 819.2 L1626 812.4 L1635 805.8 L1644.3 799.5 L1653.8 793.6 L1663.4 787.9 L1673.2 782.5 L1683.1 777.5 L1693.2 772.8 L1703.4 768.4 L1713.8 764.4 L1724.2 760.7 L1734.7 757.3 L1745.3 754.3 L1756 751.6 L1766.7 749.3 L1777.5 747.4 L1788.3 745.8M1597.3 1292.8 L1590.2 1286.6 L1583.2 1280.1 L1576.6 1273.3 L1570.2 1266.3 L1564.1 1258.9 L1558.3 1251.4 L1552.8 1243.5 L1547.5 1235.4 L1542.6 1227.1 L1538 1218.6 L1533.7 1209.8 L1529.8 1200.9 L1526.1 1191.7 L1522.8 1182.4 L1519.9 1172.9 L1517.3 1163.3 L1515 1153.5 L1513 1143.6 L1511.5 1133.5 L1510.2 1123.4 L1509.3 1113.1 L1508.8 1102.8 L1508.6 1092.3 L1508.8 1081.9 L1509.3 1071.4 L1510.2 1060.8 L1511.5 1050.2 L1513 1039.6 L1515 1029.1 L1517.3 1018.5 L1519.9 1008 L1522.8 997.5 L1526.1 987.1 L1529.8 976.7 L1533.7 966.4 L1538 956.3 L1542.6 946.2 L1547.5 936.2 L1552.8 926.4 L1558.3 916.7 L1564.1 907.2 L1570.2 897.8 L1576.6 888.7 L1583.2 879.7 L1590.2 870.9 L1597.3 862.3 L1604.7 853.9 L1612.4 845.8 L1620.3 837.9 L1628.4 830.3 L1636.7 822.9 L1645.2 815.8 L1653.9 808.9 L1662.7 802.4 L1671.8 796.1 L1681 790.2 L1690.3 784.6 L1699.8 779.2 L1709.3 774.2 L1719 769.6 L1728.8 765.2 L1738.7 761.2 L1748.7 757.6 L1758.7 754.3 L1768.7 751.3 L1778.8 748.7 L1789 746.5M1652.3 1328.7 L1644.8 1324.6 L1637.5 1320.1 L1630.3 1315.4 L1623.4 1310.2 L1616.7 1304.8 L1610.2 1299 L1604 1293 L1598 1286.6 L1592.2 1279.9 L1586.7 1273 L1581.4 1265.7 L1576.5 1258.2 L1571.7 1250.5 L1567.3 1242.4 L1563.1 1234.2 L1559.3 1225.7 L1555.7 1217 L1552.4 1208 L1549.4 1198.9 L1546.7 1189.6 L1544.4 1180.1 L1542.3 1170.4 L1540.6 1160.6 L1539.1 1150.7 L1538 1140.6 L1537.2 1130.4 L1536.7 1120.1 L1536.6 1109.7 L1536.7 1099.2 L1537.2 1088.6 L1538 1078 L1539.1 1067.4 L1540.6 1056.7 L1542.3 1046 L1544.4 1035.3 L1546.7 1024.7 L1549.4 1014 L1552.4 1003.4 L1555.7 992.8 L1559.3 982.3 L1563.1 971.8 L1567.3 961.5 L1571.7 951.2 L1576.5 941.1 L1581.4 931.1 L1586.7 921.2 L1592.2 911.5 L1598 901.9 L1604 892.5 L1610.2 883.3 L1616.7 874.3 L1623.4 865.5 L1630.3 856.9 L1637.5 848.6 L1644.8 840.5 L1652.3 832.6 L1660 825 L1667.8 817.6 L1675.8 810.5 L1684 803.7 L1692.3 797.3 L1700.8 791.1 L1709.3 785.2 L1718 779.6 L1726.7 774.3 L1735.6 769.4 L1744.5 764.8 L1753.5 760.6 L1762.6 756.7 L1771.7 753.1 L1780.8 749.9 L1789.9 747.1M1685.8 1343.5 L1689.8 1344.9 L1694 1346.3 L1698.3 1347.6 L1702.7 1348.8 L1707.2 1350 L1711.8 1351.1 L1716.6 1352.2 L1721.4 1353.2 L1726.3 1354.1 L1731.4 1355 L1736.5 1355.8 L1741.7 1356.5 L1746.9 1357.2 L1752.2 1357.8 L1757.6 1358.4 L1763.1 1358.9 L1768.5 1359.3 L1774 1359.6 L1779.6 1359.9 L1785.1 1360.1 L1790.7 1360.3 L1796.3 1360.3 L1801.9 1360.3 L1807.5 1360.3 L1813.1 1360.1 L1818.6 1359.9 L1824.2 1359.6 L1829.7 1359.3 L1835.1 1358.9 L1840.6 1358.4 L1846 1357.8 L1851.3 1357.2 L1856.5 1356.5 L1861.7 1355.8 L1866.8 1355 L1871.9 1354.1 L1876.8 1353.2 L1881.6 1352.2 L1886.4 1351.1 L1891 1350 L1895.5 1348.8 L1899.9 1347.6 L1904.2 1346.3 L1908.4 1344.9 L1912.4 1343.5 L1916.3 1342.1M1681.9 1342.1 L1685.8 1343.5M1653.4 1325.2 L1658.6 1327 L1663.9 1328.7 L1669.5 1330.4 L1675.1 1332 L1680.9 1333.5 L1686.9 1334.9 L1693 1336.3 L1699.2 1337.6 L1705.6 1338.8 L1712 1339.9 L1718.6 1341 L1725.3 1341.9 L1732 1342.8 L1738.9 1343.6 L1745.8 1344.3 L1752.8 1344.9 L1759.8 1345.5 L1766.9 1345.9 L1774 1346.3 L1781.1 1346.6 L1788.3 1346.7 L1795.5 1346.8 L1802.7 1346.8 L1809.9 1346.7 L1817.1 1346.6 L1824.2 1346.3 L1831.3 1345.9 L1838.4 1345.5 L1845.4 1344.9 L1852.4 1344.3 L1859.3 1343.6 L1866.2 1342.8 L1872.9 1341.9 L1879.6 1341 L1886.2 1339.9 L1892.6 1338.8 L1899 1337.6 L1905.2 1336.3 L1911.3 1334.9 L1917.3 1333.5 L1923.1 1332 L1928.7 1330.4 L1934.3 1328.7 L1939.6 1327 L1944.8 1325.2 L1949.8 1323.4 L1954.6 1321.4 L1959.2 1319.5 L1963.6 1317.4 L1967.9 1315.4 L1971.9 1313.2 L1975.7 1311 L1979.3 1308.8M1618.9 1308.8 L1622.5 1311 L1626.3 1313.2 L1630.3 1315.4 L1634.6 1317.4 L1639 1319.5 L1643.6 1321.4 L1648.4 1323.4 L1653.4 1325.2M1625.5 1298.3 L1631.7 1300.5 L1638 1302.5 L1644.6 1304.5 L1651.3 1306.4 L1658.3 1308.2 L1665.4 1309.9 L1672.6 1311.5 L1680.1 1313.1 L1687.6 1314.5 L1695.3 1315.9 L1703.2 1317.1 L1711.1 1318.3 L1719.2 1319.3 L1727.3 1320.3 L1735.6 1321.1 L1743.9 1321.9 L1752.3 1322.5 L1760.7 1323 L1769.2 1323.5 L1777.7 1323.8 L1786.3 1324 L1794.8 1324.1 L1803.4 1324.1 L1811.9 1324 L1820.5 1323.8 L1829 1323.5 L1837.5 1323 L1845.9 1322.5 L1854.3 1321.9 L1862.6 1321.1 L1870.9 1320.3 L1879 1319.3 L1887.1 1318.3 L1895 1317.1 L1902.9 1315.9 L1910.6 1314.5 L1918.1 1313.1 L1925.6 1311.5 L1932.8 1309.9 L1939.9 1308.2 L1946.9 1306.4 L1953.6 1304.5 L1960.2 1302.5 L1966.5 1300.5 L1972.7 1298.3 L1978.7 1296.1 L1984.4 1293.9 L1989.9 1291.5 L1995.2 1289.1 L2000.2 1286.6 L2005 1284.1 L2009.5 1281.4 L2013.8 1278.8 L2017.9 1276.1 L2021.6 1273.3 L2025.1 1270.5 L2028.3 1267.7 L2031.2 1264.8M1567 1264.8 L1569.9 1267.7 L1573.1 1270.5 L1576.6 1273.3 L1580.3 1276.1 L1584.4 1278.8 L1588.7 1281.4 L1593.2 1284.1 L1598 1286.6 L1603 1289.1 L1608.3 1291.5 L1613.8 1293.9 L1619.5 1296.1 L1625.5 1298.3M1602.8 1263.7 L1609.8 1266.2 L1617 1268.5 L1624.4 1270.7 L1632.1 1272.8 L1639.9 1274.9 L1647.9 1276.8 L1656.1 1278.7 L1664.5 1280.4 L1673.1 1282 L1681.8 1283.6 L1690.6 1285 L1699.6 1286.3 L1708.7 1287.5 L1717.9 1288.5 L1727.3 1289.5 L1736.7 1290.3 L1746.1 1291 L1755.7 1291.7 L1765.3 1292.1 L1774.9 1292.5 L1784.6 1292.7 L1794.3 1292.9 L1803.9 1292.9 L1813.6 1292.7 L1823.3 1292.5 L1832.9 1292.1 L1842.5 1291.7 L1852.1 1291 L1861.5 1290.3 L1870.9 1289.5 L1880.3 1288.5 L1889.5 1287.5 L1898.6 1286.3 L1907.6 1285 L1916.4 1283.6 L1925.1 1282 L1933.7 1280.4 L1942.1 1278.7 L1950.3 1276.8 L1958.3 1274.9 L1966.1 1272.8 L1973.8 1270.7 L1981.2 1268.5 L1988.4 1266.2 L1995.4 1263.7 L2002.1 1261.2 L2008.6 1258.7 L2014.8 1256 L2020.8 1253.3 L2026.5 1250.5 L2031.9 1247.6 L2037 1244.6 L2041.9 1241.6 L2046.4 1238.6 L2050.7 1235.4 L2054.6 1232.3 L2058.2 1229.1 L2061.5 1225.8 L2064.5 1222.5 L2067.2 1219.2 L2069.5 1215.8M1528.7 1215.8 L1531 1219.2 L1533.7 1222.5 L1536.7 1225.8 L1540 1229.1 L1543.6 1232.3 L1547.5 1235.4 L1551.8 1238.6 L1556.3 1241.6 L1561.2 1244.6 L1566.3 1247.6 L1571.7 1250.5 L1577.4 1253.3 L1583.4 1256 L1589.6 1258.7 L1596.1 1261.2 L1602.8 1263.7M1586.1 1222.5 L1593.7 1225.1 L1601.5 1227.6 L1609.6 1230 L1617.9 1232.3 L1626.4 1234.5 L1635.1 1236.7 L1644 1238.7 L1653.1 1240.5 L1662.4 1242.3 L1671.8 1244 L1681.4 1245.5 L1691.2 1246.9 L1701 1248.2 L1711 1249.4 L1721.2 1250.4 L1731.4 1251.3 L1741.6 1252.1 L1752 1252.7 L1762.4 1253.3 L1772.9 1253.7 L1783.3 1253.9 L1793.8 1254.1 L1804.4 1254.1 L1814.9 1253.9 L1825.3 1253.7 L1835.8 1253.3 L1846.2 1252.7 L1856.6 1252.1 L1866.8 1251.3 L1877 1250.4 L1887.2 1249.4 L1897.2 1248.2 L1907 1246.9 L1916.8 1245.5 L1926.4 1244 L1935.8 1242.3 L1945.1 1240.5 L1954.2 1238.7 L1963.1 1236.7 L1971.8 1234.5 L1980.3 1232.3 L1988.6 1230 L1996.7 1227.6 L2004.5 1225.1 L2012.1 1222.5 L2019.4 1219.7 L2026.4 1216.9 L2033.2 1214.1 L2039.6 1211.1 L2045.8 1208 L2051.7 1204.9 L2057.3 1201.7 L2062.5 1198.5 L2067.4 1195.1 L2072.1 1191.7 L2076.3 1188.3 L2080.3 1184.8 L2083.9 1181.3 L2087.1 1177.7 L2090 1174.1 L2092.6 1170.4 L2094.7 1166.7 L2096.6 1163M1501.6 1163 L1503.5 1166.7 L1505.6 1170.4 L1508.2 1174.1 L1511.1 1177.7 L1514.3 1181.3 L1517.9 1184.8 L1521.9 1188.3 L1526.1 1191.7 L1530.8 1195.1 L1535.7 1198.5 L1540.9 1201.7 L1546.5 1204.9 L1552.4 1208 L1558.6 1211.1 L1565 1214.1 L1571.8 1216.9 L1578.8 1219.7 L1586.1 1222.5M1575.9 1175.7 L1583.8 1178.5 L1592 1181.1 L1600.5 1183.7 L1609.1 1186.1 L1618.1 1188.4 L1627.2 1190.6 L1636.5 1192.7 L1646.1 1194.7 L1655.8 1196.5 L1665.7 1198.3 L1675.8 1199.9 L1686 1201.4 L1696.3 1202.7 L1706.8 1203.9 L1717.4 1205 L1728.1 1206 L1738.9 1206.8 L1749.7 1207.5 L1760.6 1208 L1771.6 1208.4 L1782.6 1208.7 L1793.6 1208.9 L1804.6 1208.9 L1815.6 1208.7 L1826.6 1208.4 L1837.6 1208 L1848.5 1207.5 L1859.3 1206.8 L1870.1 1206 L1880.8 1205 L1891.4 1203.9 L1901.9 1202.7 L1912.2 1201.4 L1922.4 1199.9 L1932.5 1198.3 L1942.4 1196.5 L1952.1 1194.7 L1961.7 1192.7 L1971 1190.6 L1980.1 1188.4 L1989.1 1186.1 L1997.7 1183.7 L2006.2 1181.1 L2014.4 1178.5 L2022.3 1175.7 L2029.9 1172.9 L2037.3 1170 L2044.4 1166.9 L2051.2 1163.8 L2057.6 1160.6 L2063.8 1157.4 L2069.6 1154 L2075.2 1150.6 L2080.3 1147.1 L2085.2 1143.6 L2089.6 1140 L2093.8 1136.3 L2097.5 1132.6 L2100.9 1128.8 L2104 1125 L2106.6 1121.2 L2108.9 1117.3 L2110.8 1113.5 L2112.4 1109.5 L2113.5 1105.6M1484.7 1105.6 L1485.8 1109.5 L1487.4 1113.5 L1489.3 1117.3 L1491.6 1121.2 L1494.2 1125 L1497.3 1128.8 L1500.7 1132.6 L1504.4 1136.3 L1508.6 1140 L1513 1143.6 L1517.9 1147.1 L1523 1150.6 L1528.6 1154 L1534.4 1157.4 L1540.6 1160.6 L1547 1163.8 L1553.8 1166.9 L1560.9 1170 L1568.3 1172.9 L1575.9 1175.7M1575.9 1071.8 L1583.8 1074.6 L1592 1077.2 L1600.5 1079.7 L1609.1 1082.2 L1618.1 1084.5 L1627.2 1086.7 L1636.5 1088.8 L1646.1 1090.8 L1655.8 1092.6 L1665.7 1094.4 L1675.8 1096 L1686 1097.4 L1696.3 1098.8 L1706.8 1100 L1717.4 1101.1 L1728.1 1102.1 L1738.9 1102.9 L1749.7 1103.6 L1760.6 1104.1 L1771.6 1104.5 L1782.6 1104.8 L1793.6 1104.9 L1804.6 1104.9 L1815.6 1104.8 L1826.6 1104.5 L1837.6 1104.1 L1848.5 1103.6 L1859.3 1102.9 L1870.1 1102.1 L1880.8 1101.1 L1891.4 1100 L1901.9 1098.8 L1912.2 1097.4 L1922.4 1096 L1932.5 1094.4 L1942.4 1092.6 L1952.1 1090.8 L1961.7 1088.8 L1971 1086.7 L1980.1 1084.5 L1989.1 1082.2 L1997.7 1079.7 L2006.2 1077.2 L2014.4 1074.6 L2022.3 1071.8 L2029.9 1069 L2037.3 1066.1 L2044.4 1063 L2051.2 1059.9 L2057.6 1056.7 L2063.8 1053.4 L2069.6 1050.1 L2075.2 1046.7 L2080.3 1043.2 L2085.2 1039.6 L2089.6 1036 L2093.8 1032.4 L2097.5 1028.7 L2100.9 1024.9 L2104 1021.1 L2106.6 1017.3 L2108.9 1013.4 L2110.8 1009.5 L2112.4 1005.6 L2113.5 1001.7 L2114.3 997.8 L2114.7 993.8 L2114.7 989.9 L2114.3 985.9M1483.9 985.9 L1483.5 989.9 L1483.5 993.8 L1483.9 997.8 L1484.7 1001.7 L1485.8 1005.6 L1487.4 1009.5 L1489.3 1013.4 L1491.6 1017.3 L1494.2 1021.1 L1497.3 1024.9 L1500.7 1028.7 L1504.4 1032.4 L1508.6 1036 L1513 1039.6 L1517.9 1043.2 L1523 1046.7 L1528.6 1050.1 L1534.4 1053.4 L1540.6 1056.7 L1547 1059.9 L1553.8 1063 L1560.9 1066.1 L1568.3 1069 L1575.9 1071.8M1586.1 1017.8 L1593.7 1020.4 L1601.5 1022.9 L1609.6 1025.3 L1617.9 1027.7 L1626.4 1029.9 L1635.1 1032 L1644 1034 L1653.1 1035.9 L1662.4 1037.6 L1671.8 1039.3 L1681.4 1040.8 L1691.2 1042.2 L1701 1043.5 L1711 1044.7 L1721.2 1045.7 L1731.4 1046.6 L1741.6 1047.4 L1752 1048.1 L1762.4 1048.6 L1772.9 1049 L1783.3 1049.2 L1793.8 1049.4 L1804.4 1049.4 L1814.9 1049.2 L1825.3 1049 L1835.8 1048.6 L1846.2 1048.1 L1856.6 1047.4 L1866.8 1046.6 L1877 1045.7 L1887.2 1044.7 L1897.2 1043.5 L1907 1042.2 L1916.8 1040.8 L1926.4 1039.3 L1935.8 1037.6 L1945.1 1035.9 L1954.2 1034 L1963.1 1032 L1971.8 1029.9 L1980.3 1027.7 L1988.6 1025.3 L1996.7 1022.9 L2004.5 1020.4 L2012.1 1017.8 L2019.4 1015.1 L2026.4 1012.3 L2033.2 1009.4 L2039.6 1006.4 L2045.8 1003.4 L2051.7 1000.2 L2057.3 997.1 L2062.5 993.8 L2067.4 990.5 L2072.1 987.1 L2076.3 983.6 L2080.3 980.1 L2083.9 976.6 L2087.1 973 L2090 969.4 L2092.6 965.7 L2094.7 962.1 L2096.6 958.3 L2098 954.6 L2099.1 950.9 L2099.9 947.1 L2100.2 943.3 L2100.2 939.6 L2099.9 935.8 L2099.1 932.1 L2098 928.3M1500.2 928.3 L1499.1 932.1 L1498.3 935.8 L1498 939.6 L1498 943.3 L1498.3 947.1 L1499.1 950.9 L1500.2 954.6 L1501.6 958.3 L1503.5 962.1 L1505.6 965.7 L1508.2 969.4 L1511.1 973 L1514.3 976.6 L1517.9 980.1 L1521.9 983.6 L1526.1 987.1 L1530.8 990.5 L1535.7 993.8 L1540.9 997.1 L1546.5 1000.2 L1552.4 1003.4 L1558.6 1006.4 L1565 1009.4 L1571.8 1012.3 L1578.8 1015.1 L1586.1 1017.8M1602.8 964.5 L1609.8 966.9 L1617 969.3 L1624.4 971.5 L1632.1 973.6 L1639.9 975.7 L1647.9 977.6 L1656.1 979.5 L1664.5 981.2 L1673.1 982.8 L1681.8 984.3 L1690.6 985.8 L1699.6 987.1 L1708.7 988.2 L1717.9 989.3 L1727.3 990.3 L1736.7 991.1 L1746.1 991.8 L1755.7 992.4 L1765.3 992.9 L1774.9 993.3 L1784.6 993.5 L1794.3 993.6 L1803.9 993.6 L1813.6 993.5 L1823.3 993.3 L1832.9 992.9 L1842.5 992.4 L1852.1 991.8 L1861.5 991.1 L1870.9 990.3 L1880.3 989.3 L1889.5 988.2 L1898.6 987.1 L1907.6 985.8 L1916.4 984.3 L1925.1 982.8 L1933.7 981.2 L1942.1 979.5 L1950.3 977.6 L1958.3 975.7 L1966.1 973.6 L1973.8 971.5 L1981.2 969.3 L1988.4 966.9 L1995.4 964.5 L2002.1 962 L2008.6 959.5 L2014.8 956.8 L2020.8 954.1 L2026.5 951.2 L2031.9 948.4 L2037 945.4 L2041.9 942.4 L2046.4 939.4 L2050.7 936.2 L2054.6 933.1 L2058.2 929.8 L2061.5 926.6 L2064.5 923.3 L2067.2 919.9 L2069.5 916.6 L2071.6 913.2 L2073.2 909.8 L2074.6 906.3 L2075.6 902.9 L2076.3 899.4 L2076.6 895.9 L2076.6 892.5 L2076.3 889 L2075.6 885.5 L2074.6 882.1 L2073.2 878.6 L2071.6 875.2M1526.6 875.2 L1525 878.6 L1523.6 882.1 L1522.6 885.5 L1521.9 889 L1521.6 892.5 L1521.6 895.9 L1521.9 899.4 L1522.6 902.9 L1523.6 906.3 L1525 909.8 L1526.6 913.2 L1528.7 916.6 L1531 919.9 L1533.7 923.3 L1536.7 926.6 L1540 929.8 L1543.6 933.1 L1547.5 936.2 L1551.8 939.4 L1556.3 942.4 L1561.2 945.4 L1566.3 948.4 L1571.7 951.2 L1577.4 954.1 L1583.4 956.8 L1589.6 959.5 L1596.1 962 L1602.8 964.5M1625.5 913.7 L1631.7 915.8 L1638 917.9 L1644.6 919.8 L1651.3 921.7 L1658.3 923.5 L1665.4 925.3 L1672.6 926.9 L1680.1 928.4 L1687.6 929.9 L1695.3 931.2 L1703.2 932.5 L1711.1 933.6 L1719.2 934.7 L1727.3 935.6 L1735.6 936.5 L1743.9 937.2 L1752.3 937.8 L1760.7 938.4 L1769.2 938.8 L1777.7 939.1 L1786.3 939.3 L1794.8 939.4 L1803.4 939.4 L1811.9 939.3 L1820.5 939.1 L1829 938.8 L1837.5 938.4 L1845.9 937.8 L1854.3 937.2 L1862.6 936.5 L1870.9 935.6 L1879 934.7 L1887.1 933.6 L1895 932.5 L1902.9 931.2 L1910.6 929.9 L1918.1 928.4 L1925.6 926.9 L1932.8 925.3 L1939.9 923.5 L1946.9 921.7 L1953.6 919.8 L1960.2 917.9 L1966.5 915.8 L1972.7 913.7 L1978.7 911.5 L1984.4 909.2 L1989.9 906.8 L1995.2 904.4 L2000.2 901.9 L2005 899.4 L2009.5 896.8 L2013.8 894.1 L2017.9 891.4 L2021.6 888.7 L2025.1 885.8 L2028.3 883 L2031.2 880.1 L2033.9 877.2 L2036.3 874.2 L2038.3 871.3 L2040.1 868.3 L2041.6 865.2 L2042.8 862.2 L2043.7 859.1 L2044.3 856.1 L2044.6 853 L2044.6 849.9 L2044.3 846.9 L2043.7 843.8 L2042.8 840.7 L2041.6 837.7 L2040.1 834.7 L2038.3 831.7 L2036.3 828.7 L2033.9 825.7M1564.3 825.7 L1561.9 828.7 L1559.9 831.7 L1558.1 834.7 L1556.6 837.7 L1555.4 840.7 L1554.5 843.8 L1553.9 846.9 L1553.6 849.9 L1553.6 853 L1553.9 856.1 L1554.5 859.1 L1555.4 862.2 L1556.6 865.2 L1558.1 868.3 L1559.9 871.3 L1561.9 874.2 L1564.3 877.2 L1567 880.1 L1569.9 883 L1573.1 885.8 L1576.6 888.7 L1580.3 891.4 L1584.4 894.1 L1588.7 896.8 L1593.2 899.4 L1598 901.9 L1603 904.4 L1608.3 906.8 L1613.8 909.2 L1619.5 911.5 L1625.5 913.7M1653.4 866.8 L1658.6 868.6 L1663.9 870.3 L1669.5 872 L1675.1 873.6 L1680.9 875.1 L1686.9 876.5 L1693 877.9 L1699.2 879.2 L1705.6 880.4 L1712 881.5 L1718.6 882.5 L1725.3 883.5 L1732 884.4 L1738.9 885.2 L1745.8 885.9 L1752.8 886.5 L1759.8 887.1 L1766.9 887.5 L1774 887.9 L1781.1 888.1 L1788.3 888.3 L1795.5 888.4 L1802.7 888.4 L1809.9 888.3 L1817.1 888.1 L1824.2 887.9 L1831.3 887.5 L1838.4 887.1 L1845.4 886.5 L1852.4 885.9 L1859.3 885.2 L1866.2 884.4 L1872.9 883.5 L1879.6 882.5 L1886.2 881.5 L1892.6 880.4 L1899 879.2 L1905.2 877.9 L1911.3 876.5 L1917.3 875.1 L1923.1 873.6 L1928.7 872 L1934.3 870.3 L1939.6 868.6 L1944.8 866.8 L1949.8 864.9 L1954.6 863 L1959.2 861.1 L1963.6 859 L1967.9 856.9 L1971.9 854.8 L1975.7 852.6 L1979.3 850.4 L1982.7 848.1 L1985.8 845.8 L1988.7 843.4 L1991.4 841 L1993.9 838.6 L1996.1 836.2 L1998.1 833.7 L1999.8 831.2 L2001.3 828.7 L2002.6 826.1 L2003.6 823.6 L2004.3 821 L2004.8 818.5 L2005.1 815.9 L2005.1 813.3 L2004.8 810.7 L2004.3 808.2 L2003.6 805.6 L2002.6 803 L2001.3 800.5 L1999.8 798 L1998.1 795.5 L1996.1 793 L1993.9 790.6 L1991.4 788.1 L1988.7 785.7 L1985.8 783.4 L1982.7 781.1M1615.5 781.1 L1612.4 783.4 L1609.5 785.7 L1606.8 788.1 L1604.3 790.6 L1602.1 793 L1600.1 795.5 L1598.4 798 L1596.9 800.5 L1595.6 803 L1594.6 805.6 L1593.9 808.2 L1593.4 810.7 L1593.1 813.3 L1593.1 815.9 L1593.4 818.5 L1593.9 821 L1594.6 823.6 L1595.6 826.1 L1596.9 828.7 L1598.4 831.2 L1600.1 833.7 L1602.1 836.2 L1604.3 838.6 L1606.8 841 L1609.5 843.4 L1612.4 845.8 L1615.5 848.1 L1618.9 850.4 L1622.5 852.6 L1626.3 854.8 L1630.3 856.9 L1634.6 859 L1639 861.1 L1643.6 863 L1648.4 864.9 L1653.4 866.8M1685.8 825.3 L1689.8 826.7 L1694 828 L1698.3 829.3 L1702.7 830.5 L1707.2 831.7 L1711.8 832.8 L1716.6 833.9 L1721.4 834.9 L1726.3 835.8 L1731.4 836.7 L1736.5 837.5 L1741.7 838.3 L1746.9 839 L1752.2 839.6 L1757.6 840.1 L1763.1 840.6 L1768.5 841 L1774 841.4 L1779.6 841.7 L1785.1 841.9 L1790.7 842 L1796.3 842.1 L1801.9 842.1 L1807.5 842 L1813.1 841.9 L1818.6 841.7 L1824.2 841.4 L1829.7 841 L1835.1 840.6 L1840.6 840.1 L1846 839.6 L1851.3 839 L1856.5 838.3 L1861.7 837.5 L1866.8 836.7 L1871.9 835.8 L1876.8 834.9 L1881.6 833.9 L1886.4 832.8 L1891 831.7 L1895.5 830.5 L1899.9 829.3 L1904.2 828 L1908.4 826.7 L1912.4 825.3 L1916.3 823.8 L1920 822.4 L1923.6 820.8 L1927.1 819.2 L1930.4 817.6 L1933.5 816 L1936.5 814.3 L1939.3 812.5 L1941.9 810.7 L1944.3 808.9 L1946.6 807.1 L1948.7 805.3 L1950.6 803.4 L1952.3 801.5 L1953.9 799.5 L1955.2 797.6 L1956.4 795.6 L1957.4 793.7 L1958.2 791.7 L1958.7 789.7 L1959.1 787.7 L1959.3 785.7 L1959.3 783.7 L1959.1 781.7 L1958.7 779.7 L1958.2 777.7 L1957.4 775.7 L1956.4 773.7 L1955.2 771.8 L1953.9 769.8 L1952.3 767.9 L1950.6 766 L1948.7 764.1 L1946.6 762.2 L1944.3 760.4 L1941.9 758.6 L1939.3 756.8 L1936.5 755.1 L1933.5 753.4 L1930.4 751.7 L1927.1 750.1 L1923.6 748.5 L1920 747M1678.2 747 L1674.6 748.5 L1671.1 750.1 L1667.8 751.7 L1664.7 753.4 L1661.7 755.1 L1658.9 756.8 L1656.3 758.6 L1653.9 760.4 L1651.6 762.2 L1649.5 764.1 L1647.6 766 L1645.9 767.9 L1644.3 769.8 L1643 771.8 L1641.8 773.7 L1640.8 775.7 L1640 777.7 L1639.5 779.7 L1639.1 781.7 L1638.9 783.7 L1638.9 785.7 L1639.1 787.7 L1639.5 789.7 L1640 791.7 L1640.8 793.7 L1641.8 795.6 L1643 797.6 L1644.3 799.5 L1645.9 801.5 L1647.6 803.4 L1649.5 805.3 L1651.6 807.1 L1653.9 808.9 L1656.3 810.7 L1658.9 812.5 L1661.7 814.3 L1664.7 816 L1667.8 817.6 L1671.1 819.2 L1674.6 820.8 L1678.2 822.4 L1681.9 823.8 L1685.8 825.3M1721.6 790.4 L1724.3 791.4 L1727.2 792.3 L1730.1 793.2 L1733.1 794 L1736.2 794.8 L1739.4 795.6 L1742.6 796.3 L1746 797 L1749.3 797.6 L1752.8 798.2 L1756.3 798.8 L1759.8 799.3 L1763.4 799.8 L1767.1 800.2 L1770.7 800.6 L1774.4 800.9 L1778.2 801.2 L1782 801.4 L1785.7 801.6 L1789.5 801.8 L1793.4 801.9 L1797.2 801.9 L1801 801.9 L1804.8 801.9 L1808.7 801.8 L1812.5 801.6 L1816.2 801.4 L1820 801.2 L1823.8 800.9 L1827.5 800.6 L1831.1 800.2 L1834.8 799.8 L1838.4 799.3 L1841.9 798.8 L1845.4 798.2 L1848.9 797.6 L1852.2 797 L1855.6 796.3 L1858.8 795.6 L1862 794.8 L1865.1 794 L1868.1 793.2 L1871 792.3 L1873.9 791.4 L1876.6 790.4 L1879.3 789.4 L1881.8 788.4 L1884.3 787.4 L1886.6 786.3 L1888.9 785.2 L1891 784 L1893.1 782.9 L1895 781.7 L1896.8 780.5 L1898.4 779.2 L1900 778 L1901.4 776.7 L1902.7 775.4 L1903.9 774.1 L1905 772.8 L1905.9 771.5 L1906.7 770.1 L1907.4 768.8 L1907.9 767.4 L1908.3 766.1 L1908.6 764.7 L1908.7 763.3 L1908.7 761.9 L1908.6 760.6 L1908.3 759.2 L1907.9 757.8 L1907.4 756.5 L1906.7 755.1 L1905.9 753.8 L1905 752.5 L1903.9 751.1 L1902.7 749.8 L1901.4 748.6 L1900 747.3 L1898.4 746 L1896.8 744.8 L1895 743.6 L1893.1 742.4 L1891 741.2 L1888.9 740.1 L1886.6 739 L1884.3 737.9 L1881.8 736.9 L1879.3 735.8 L1876.6 734.9 L1873.9 733.9 L1871 733 L1868.1 732.1 L1865.1 731.3 L1862 730.5 L1858.8 729.7 L1855.6 729 L1852.2 728.3 L1848.9 727.6 L1845.4 727 L1841.9 726.5 L1838.4 726 L1834.8 725.5 L1831.1 725.1 L1827.5 724.7 L1823.8 724.4 L1820 724.1 L1816.2 723.8 L1812.5 723.6 L1808.7 723.5 L1804.8 723.4 L1801 723.4 L1797.2 723.4 L1793.4 723.4 L1789.5 723.5 L1785.7 723.6 L1782 723.8 L1778.2 724.1 L1774.4 724.4 L1770.7 724.7 L1767.1 725.1 L1763.4 725.5 L1759.8 726 L1756.3 726.5 L1752.8 727 L1749.3 727.6 L1746 728.3 L1742.6 729 L1739.4 729.7 L1736.2 730.5 L1733.1 731.3 L1730.1 732.1 L1727.2 733 L1724.3 733.9 L1721.6 734.9 L1718.9 735.8 L1716.4 736.9 L1713.9 737.9 L1711.6 739 L1709.3 740.1 L1707.2 741.2 L1705.1 742.4 L1703.2 743.6 L1701.4 744.8 L1699.8 746 L1698.2 747.3 L1696.8 748.6 L1695.5 749.8 L1694.3 751.1 L1693.2 752.5 L1692.3 753.8 L1691.5 755.1 L1690.8 756.5 L1690.3 757.8 L1689.9 759.2 L1689.6 760.6 L1689.5 761.9 L1689.5 763.3 L1689.6 764.7 L1689.9 766.1 L1690.3 767.4 L1690.8 768.8 L1691.5 770.1 L1692.3 771.5 L1693.2 772.8 L1694.3 774.1 L1695.5 775.4 L1696.8 776.7 L1698.2 778 L1699.8 779.2 L1701.4 780.5 L1703.2 781.7 L1705.1 782.9 L1707.2 784 L1709.3 785.2 L1711.6 786.3 L1713.9 787.4 L1716.4 788.4 L1718.9 789.4 L1721.6 790.4M1759.7 763.2 L1761.1 763.7 L1762.6 764.2 L1764.1 764.6 L1765.6 765.1 L1767.2 765.5 L1768.8 765.9 L1770.4 766.2 L1772.1 766.6 L1773.8 766.9 L1775.6 767.2 L1777.4 767.5 L1779.2 767.8 L1781 768 L1782.8 768.2 L1784.7 768.4 L1786.6 768.6 L1788.5 768.7 L1790.4 768.8 L1792.3 768.9 L1794.2 769 L1796.2 769.1 L1798.1 769.1 L1800.1 769.1 L1802 769.1 L1804 769 L1805.9 768.9 L1807.8 768.8 L1809.7 768.7 L1811.6 768.6 L1813.5 768.4 L1815.4 768.2 L1817.2 768 L1819 767.8 L1820.8 767.5 L1822.6 767.2 L1824.4 766.9 L1826.1 766.6 L1827.8 766.2 L1829.4 765.9 L1831 765.5 L1832.6 765.1 L1834.1 764.6 L1835.6 764.2 L1837.1 763.7 L1838.5 763.2 L1839.8 762.7 L1841.1 762.2 L1842.4 761.7 L1843.5 761.1 L1844.7 760.6 L1845.8 760 L1846.8 759.4 L1847.8 758.8 L1848.7 758.2 L1849.5 757.6 L1850.3 756.9 L1851.1 756.3 L1851.7 755.6 L1852.3 755 L1852.9 754.3 L1853.3 753.6 L1853.7 752.9 L1854.1 752.3 L1854.3 751.6 L1854.5 750.9 L1854.7 750.2 L1854.7 749.5 L1854.7 748.8 L1854.7 748.1 L1854.5 747.4 L1854.3 746.7 L1854.1 746 L1853.7 745.3 L1853.3 744.6 L1852.9 744 L1852.3 743.3 L1851.7 742.6 L1851.1 742 L1850.3 741.3 L1849.5 740.7 L1848.7 740.1 L1847.8 739.5 L1846.8 738.9 L1845.8 738.3 L1844.7 737.7 L1843.5 737.1 L1842.4 736.6 L1841.1 736 L1839.8 735.5 L1838.5 735 L1837.1 734.5 L1835.6 734.1 L1834.1 733.6 L1832.6 733.2 L1831 732.8 L1829.4 732.4 L1827.8 732 L1826.1 731.7 L1824.4 731.4 L1822.6 731.1 L1820.8 730.8 L1819 730.5 L1817.2 730.3 L1815.4 730.1 L1813.5 729.9 L1811.6 729.7 L1809.7 729.6 L1807.8 729.4 L1805.9 729.3 L1804 729.3 L1802 729.2 L1800.1 729.2 L1798.1 729.2 L1796.2 729.2 L1794.2 729.3 L1792.3 729.3 L1790.4 729.4 L1788.5 729.6 L1786.6 729.7 L1784.7 729.9 L1782.8 730.1 L1781 730.3 L1779.2 730.5 L1777.4 730.8 L1775.6 731.1 L1773.8 731.4 L1772.1 731.7 L1770.4 732 L1768.8 732.4 L1767.2 732.8 L1765.6 733.2 L1764.1 733.6 L1762.6 734.1 L1761.1 734.5 L1759.7 735 L1758.4 735.5 L1757.1 736 L1755.8 736.6 L1754.7 737.1 L1753.5 737.7 L1752.4 738.3 L1751.4 738.9 L1750.4 739.5 L1749.5 740.1 L1748.7 740.7 L1747.9 741.3 L1747.1 742 L1746.5 742.6 L1745.9 743.3 L1745.3 744 L1744.9 744.6 L1744.5 745.3 L1744.1 746 L1743.9 746.7 L1743.7 747.4 L1743.5 748.1 L1743.5 748.8 L1743.5 749.5 L1743.5 750.2 L1743.7 750.9 L1743.9 751.6 L1744.1 752.3 L1744.5 752.9 L1744.9 753.6 L1745.3 754.3 L1745.9 755 L1746.5 755.6 L1747.1 756.3 L1747.9 756.9 L1748.7 757.6 L1749.5 758.2 L1750.4 758.8 L1751.4 759.4 L1752.4 760 L1753.5 760.6 L1754.7 761.1 L1755.8 761.7 L1757.1 762.2 L1758.4 762.7 L1759.7 763.2" stroke="#b9c4d6" stroke-opacity=".05" stroke-width="1"/>
<path d="M1572.5 1125 L1580.5 1127.8 L1588.8 1130.5 L1597.4 1133.1 L1606.2 1135.5 L1615.3 1137.9 L1624.5 1140.1 L1634 1142.3 L1643.7 1144.3 L1653.6 1146.1 L1663.7 1147.9 L1673.9 1149.5 L1684.2 1151 L1694.8 1152.4 L1705.4 1153.6 L1716.1 1154.7 L1727 1155.7 L1737.9 1156.5 L1749 1157.2 L1760 1157.8 L1771.2 1158.2 L1782.3 1158.5 L1793.5 1158.6 L1804.7 1158.6 L1815.9 1158.5 L1827 1158.2 L1838.2 1157.8 L1849.2 1157.2 L1860.3 1156.5 L1871.2 1155.7 L1882.1 1154.7 L1892.8 1153.6 L1903.4 1152.4 L1914 1151 L1924.3 1149.5 L1934.5 1147.9 L1944.6 1146.1 L1954.5 1144.3 L1964.2 1142.3 L1973.7 1140.1 L1982.9 1137.9 L1992 1135.5 L2000.8 1133.1 L2009.4 1130.5 L2017.7 1127.8 L2025.7 1125 L2033.5 1122.1 L2041 1119.2 L2048.2 1116.1 L2055.1 1112.9 L2061.6 1109.7 L2067.9 1106.4 L2073.8 1103 L2079.4 1099.5 L2084.7 1095.9 L2089.6 1092.3 L2094.1 1088.7 L2098.3 1085 L2102.1 1081.2 L2105.6 1077.4 L2108.7 1073.5 L2111.4 1069.6 L2113.7 1065.7 L2115.7 1061.8 L2117.2 1057.8 L2118.4 1053.8 L2119.2 1049.8 L2119.6 1045.8M1478.6 1045.8 L1479 1049.8 L1479.8 1053.8 L1481 1057.8 L1482.5 1061.8 L1484.5 1065.7 L1486.8 1069.6 L1489.5 1073.5 L1492.6 1077.4 L1496.1 1081.2 L1499.9 1085 L1504.1 1088.7 L1508.6 1092.3 L1513.5 1095.9 L1518.8 1099.5 L1524.4 1103 L1530.3 1106.4 L1536.6 1109.7 L1543.1 1112.9 L1550 1116.1 L1557.2 1119.2 L1564.7 1122.1 L1572.5 1125" stroke="#c6cfdc" stroke-opacity=".26" stroke-width="1.2"/>
<ellipse cx="1799.1" cy="744.6" rx="16" ry="3.2" fill="#cfd6e0" fill-opacity=".16" filter="url(#gblur)"/>
<circle cx="1799.1" cy="1043.8" r="320.5" fill="url(#gshade)"/>
</g>
<defs><path id="garcs" d="M1539.7 876.8 L1541.2 880.6 L1543 884.6 L1545.1 888.8 L1547.6 893.1 L1550.3 897.7 L1553.5 902.5 L1556.9 907.4 L1560.6 912.6 L1564.7 917.9 L1569.1 923.3 L1573.7 928.9 L1578.7 934.7 L1583.9 940.6 L1589.4 946.7 L1595.2 952.8 L1601.3 959.1 L1607.6 965.5 L1614.2 972 L1621 978.6 L1628 985.3 L1635.2 992.1 L1642.7 998.9 L1650.4 1005.8 L1658.3 1012.7 L1666.3 1019.7 L1674.5 1026.7 L1682.9 1033.7M1539.7 876.8 L1544.4 875.3 L1549.4 874 L1554.7 872.9 L1560.3 872 L1566.2 871.3 L1572.4 870.8 L1578.9 870.6 L1585.7 870.5 L1592.7 870.7 L1600 871.1 L1607.6 871.7 L1615.4 872.6 L1623.4 873.6 L1631.7 874.9 L1640.1 876.4 L1648.8 878.1 L1657.6 880 L1666.6 882.1 L1675.8 884.4 L1685.2 886.9 L1694.7 889.6 L1704.3 892.5 L1714 895.6 L1723.9 898.9 L1733.8 902.3 L1743.8 906 L1753.9 909.8 L1764.1 913.8 L1774.3 917.9 L1784.5 922.2 L1794.7 926.7 L1805 931.3 L1815.2 936 L1825.5 940.9 L1835.6 945.9 L1845.8 951 L1855.9 956.3 L1865.9 961.6 L1875.8 967.1M1539.7 876.8 L1544.4 875.1 L1549.5 873.6 L1554.8 872.3 L1560.4 871.2 L1566.4 870.4 L1572.6 869.7 L1579.1 869.3 L1585.8 869 L1592.9 869 L1600.2 869.2 L1607.7 869.6 L1615.5 870.3 L1623.4 871.1 L1631.6 872.2 L1640.1 873.4 L1648.7 874.9 L1657.5 876.6 L1666.4 878.5 L1675.6 880.6 L1684.8 882.9 L1694.3 885.4 L1703.8 888.1 L1713.5 890.9 L1723.3 894 L1733.1 897.3 L1743.1 900.7 L1753.1 904.3 L1763.2 908.1 L1773.3 912 L1783.4 916.1 L1793.6 920.4 L1803.8 924.8 L1814 929.4 L1824.1 934.1 L1834.2 938.9 L1844.3 943.9 L1854.3 949M1539.7 876.8 L1545.3 873.4 L1551.3 870.2 L1557.5 867.3 L1564.1 864.5 L1571 862 L1578.2 859.8 L1585.6 857.7 L1593.4 855.9 L1601.4 854.4 L1609.6 853.1 L1618.1 852 L1626.8 851.2 L1635.8 850.6 L1645 850.3 L1654.3 850.2 L1663.9 850.4 L1673.6 850.8 L1683.5 851.5 L1693.5 852.4 L1703.7 853.6 L1714 855 L1724.4 856.7 L1734.9 858.6 L1745.5 860.8 L1756.1 863.1 L1766.8 865.7 L1777.6 868.6 L1788.4 871.7 L1799.2 875 L1810 878.5 L1820.7 882.2 L1831.5 886.1 L1842.2 890.2M1539.7 876.8 L1546.2 870.7 L1553.1 864.8 L1560.3 859 L1567.8 853.6 L1575.5 848.3 L1583.6 843.3 L1591.9 838.6 L1600.5 834.1 L1609.3 829.9 L1618.4 826 L1627.6 822.3 L1637.2 818.9 L1646.9 815.8 L1656.8 812.9 L1666.9 810.4 L1677.1 808.2 L1687.5 806.2 L1698.1 804.6 L1708.7 803.2 L1719.5 802.2 L1730.4 801.5 L1741.4 801 L1752.4 800.9 L1763.5 801.1 L1774.7 801.6 L1785.9 802.4 L1797 803.4 L1808.2 804.8 L1819.4 806.5 L1830.6 808.5 L1841.7 810.8 L1852.8 813.4 L1863.8 816.3 L1874.7 819.4 L1885.5 822.9 L1896.2 826.6 L1906.8 830.6 L1917.3 834.9 L1927.6 839.4 L1937.7 844.2 L1947.7 849.2 L1957.5 854.5 L1967.1 860 L1976.5 865.7 L1985.6 871.7 L1994.5 877.9 L2003.2 884.3 L2011.6 890.9M1547.6 848.6 L1551.9 845.2 L1556.6 842.2 L1561.5 839.3 L1566.7 836.8 L1572.2 834.4 L1577.9 832.4 L1584 830.6 L1590.3 829.1 L1596.9 827.8 L1603.7 826.8 L1610.8 826.1 L1618.1 825.7 L1625.7 825.5 L1633.4 825.6 L1641.4 826 L1649.5 826.6 L1657.9 827.5 L1666.4 828.7 L1675.1 830.1 L1683.9 831.8 L1692.9 833.8 L1702 836.1 L1711.2 838.6 L1720.6 841.3 L1730 844.3 L1739.6 847.6 L1749.2 851.1 L1758.8 854.8 L1768.5 858.8 L1778.3 863 L1788.1 867.4 L1797.9 872.1 L1807.7 876.9 L1817.4 882 L1827.2 887.3 L1836.9 892.7 L1846.6 898.4M1534.8 862.8 L1537.4 860 L1540.3 857.4 L1543.6 855.1 L1547.2 853 L1551.1 851.1 L1555.3 849.5 L1559.8 848.1 L1564.7 846.9 L1569.8 846.1 L1575.2 845.4 L1580.9 845.1 L1586.9 844.9 L1593.2 845.1 L1599.7 845.4 L1606.4 846.1 L1613.5 846.9 L1620.7 848.1 L1628.2 849.5 L1635.9 851.1 L1643.7 852.9 L1651.8 855.1 L1660.1 857.4 L1668.6 860 L1677.2 862.8 L1686 865.8 L1694.9 869.1 L1703.9 872.6 L1713.1 876.3 L1722.4 880.3 L1731.7 884.4 L1741.2 888.7 L1750.7 893.2 L1760.3 898 L1770 902.9 L1779.7 908 L1789.4 913.2 L1799.1 918.6 L1808.8 924.2 L1818.5 929.9 L1828.2 935.8 L1837.8 941.8 L1847.4 948 L1857 954.2 L1866.4 960.6 L1875.8 967.1M1682.9 1033.7 L1693.1 1029.6 L1703.4 1025.5 L1713.8 1021.5 L1724.4 1017.5 L1735 1013.5 L1745.7 1009.6 L1756.5 1005.7 L1767.4 1001.8 L1778.3 998 L1789.2 994.3 L1800.1 990.6 L1811 987 L1822 983.5 L1832.8 980 L1843.7 976.7 L1854.5 973.4 L1865.2 970.2 L1875.8 967.1M1682.9 1033.7 L1692.4 1028 L1702.1 1022.4 L1711.8 1016.7 L1721.7 1011.2 L1731.7 1005.6 L1741.8 1000.1 L1751.9 994.7 L1762.1 989.3 L1772.4 984 L1782.6 978.8 L1793 973.6 L1803.3 968.6 L1813.6 963.6 L1823.9 958.8 L1834.1 954 L1844.4 949.4 L1854.5 944.9 L1864.6 940.6 L1874.6 936.3 L1884.5 932.2 L1894.3 928.3M1539.7 876.8 L1533.6 886.2 L1527.8 895.8 L1522.3 905.6 L1517.2 915.5 L1512.4 925.7 L1508 935.9 L1504 946.3 L1500.3 956.8 L1496.9 967.4 L1494 978.1 L1491.4 988.9 L1489.2 999.7 L1487.4 1010.6 L1486 1021.6 L1484.9 1032.6 L1484.3 1043.6 L1484 1054.5 L1484.1 1065.5 L1484.6 1076.5 L1485.5 1087.4 L1486.8 1098.2 L1488.5 1109 L1490.5 1119.7 L1493 1130.3 L1495.8 1140.8 L1499 1151.2 L1502.5 1161.5 L1506.4 1171.6 L1510.7 1181.5 L1515.3 1191.3 L1520.3 1200.9 L1525.7 1210.3 L1531.3 1219.5 L1537.3 1228.5 L1543.6 1237.3M1539.7 876.8 L1533.7 886.4 L1528 896.1 L1522.7 906 L1517.7 916 L1513 926.2 L1508.7 936.6 L1504.7 947.1 L1501.2 957.7 L1497.9 968.5 L1495.1 979.3 L1492.6 990.2 L1490.5 1001.1 L1488.8 1012.2 L1487.5 1023.2 L1486.6 1034.3 L1486 1045.4 L1485.8 1056.5 L1486.1 1067.6 L1486.7 1078.6 L1487.7 1089.6 L1489 1100.5 L1490.8 1111.4 L1492.9 1122.2 L1495.4 1132.9 L1498.3 1143.5 L1501.6 1154 L1505.2 1164.3 L1509.2 1174.5 L1513.6 1184.5 L1518.3 1194.3 L1523.3 1204 L1528.7 1213.4M1543.6 1237.3 L1548.8 1243.4 L1554.3 1249.3 L1560.1 1254.9 L1566.3 1260.2 L1572.8 1265.2 L1579.6 1269.8 L1586.8 1274.2 L1594.2 1278.2 L1601.9 1281.9M1528.7 1213.4 L1531 1217.6 L1533.3 1221.7 L1535.8 1225.7 L1538.3 1229.6 L1540.9 1233.5 L1543.6 1237.3M1601.9 1281.9 L1603.9 1284.4 L1605.9 1286.9 L1607.9 1289.4 L1609.9 1291.8 L1612 1294.2 L1614.1 1296.5M1543.6 1237.3 L1549.4 1244.4 L1555.5 1251.3 L1561.9 1257.9 L1568.5 1264.3 L1575.5 1270.3 L1582.7 1276.2 L1590.2 1281.7 L1597.9 1286.9 L1605.9 1291.9 L1614.1 1296.5M1566.1 823.8 L1573.9 815.8 L1582 808.1 L1590.3 800.7 L1599 793.6 L1607.8 786.8 L1617 780.4 L1626.3 774.2 L1635.9 768.4 L1645.6 763 L1655.6 757.9 L1665.7 753.1 L1676 748.8 L1686.5 744.8 L1697.1 741.1 L1707.8 737.9 L1718.7 735 L1729.6 732.5 L1740.6 730.4 L1751.7 728.7 L1762.9 727.4 L1774.1 726.5 L1785.3 726 L1796.6 725.8 L1807.8 726.1 L1819.1 726.8 L1830.3 727.9 L1841.5 729.3 L1852.6 731.2 L1863.7 733.4 L1874.7 736.1 L1885.5 739.1 L1896.3 742.5 L1907 746.3 L1917.5 750.4 L1927.9 755M1566.1 823.8 L1562.6 827.6 L1559.3 831.5 L1556.2 835.6 L1553.2 839.8 L1550.3 844.1 L1547.6 848.6M1547.6 848.6 L1545.7 852.9 L1544.1 857.3 L1542.6 862 L1541.4 866.8 L1540.4 871.7 L1539.7 876.8M1532.3 866.6 L1532.5 867.6 L1533.1 868.9 L1534.2 870.5 L1535.6 872.4 L1537.4 874.5 L1539.7 876.8M1566.1 823.8 L1560 830.4 L1554.1 837.2 L1548.4 844.1M1566.1 823.8 L1561.8 828.6 L1557.9 833.7 L1554.3 839.1 L1551 844.7 L1548.1 850.7 L1545.5 856.8 L1543.2 863.3 L1541.3 869.9 L1539.7 876.8M1539.7 876.8 L1535 879.2 L1530.6 881.8 L1526.6 884.5 L1522.9 887.5 L1519.6 890.7 L1516.7 894.1 L1514.1 897.7 L1511.9 901.5M1927.9 755 L1934.4 759.7 L1940.8 764.7 L1946.9 770.2 L1952.9 776 L1958.7 782.2 L1964.2 788.7 L1969.5 795.6 L1974.6 802.8 L1979.5 810.3 L1984.1 818.2 L1988.5 826.3 L1992.6 834.8 L1996.4 843.5 L2000 852.5 L2003.3 861.7 L2006.4 871.2 L2009.1 881 L2011.6 890.9M1927.9 755 L1933.8 759.5 L1939.5 764.4 L1945 769.7 L1950.3 775.3 L1955.4 781.3 L1960.3 787.7 L1965 794.4 L1969.4 801.5 L1973.7 808.9 L1977.7 816.6 L1981.4 824.6 L1984.9 832.9 L1988.1 841.5 L1991.1 850.4 L1993.9 859.5 L1996.3 868.9M1927.9 755 L1930 758.2 L1931.9 761.8 L1933.6 765.8 L1935.1 770.3 L1936.5 775.1 L1937.6 780.2M1937.6 780.2 L1944 786.8 L1950.2 793.8 L1956.1 801 L1961.9 808.5 L1967.5 816.3 L1972.9 824.5 L1978 832.8 L1983 841.5 L1987.7 850.4 L1992.1 859.5 L1996.3 868.9M1927.9 755 L1930.1 754.1 L1932.1 753.6 L1934 753.6 L1935.6 753.9M1927.9 755 L1922.9 751.1 L1917.8 747.6 L1912.5 744.7 L1907.1 742.1M1854.3 949 L1859 939.4 L1863.6 930 L1868.1 920.7 L1872.6 911.6 L1876.9 902.6 L1881.2 893.8 L1885.3 885.2 L1889.3 876.8 L1893.2 868.6 L1897 860.7 L1900.7 852.9 L1904.3 845.5 L1907.7 838.2 L1910.9 831.2 L1914.1 824.5 L1917.1 818.1 L1919.9 812 L1922.6 806.1 L1925.1 800.6 L1927.5 795.3 L1929.7 790.4 L1931.7 785.8 L1933.6 781.5 L1935.3 777.6 L1936.8 773.9 L1938.2 770.7 L1939.3 767.8 L1940.4 765.2 L1941.2 763 L1941.8 761.1 L1942.3 759.6 L1942.6 758.4 L1942.7 757.7 L1942.6 757.2M1875.8 967.1 L1879.4 957.1 L1883 947.2 L1886.4 937.5 L1889.8 927.9 L1893 918.4 L1896.1 909 L1899.1 899.9 L1901.9 890.9 L1904.7 882.1 L1907.3 873.5 L1909.8 865.1 L1912.1 856.9 L1914.3 849 L1916.3 841.3 L1918.3 833.8 L1920 826.7 L1921.6 819.7 L1923.1 813.1 L1924.4 806.7 L1925.6 800.6 L1926.6 794.9 L1927.4 789.4 L1928.1 784.2 L1928.6 779.4 L1929 774.9 L1929.2 770.7 L1929.3 766.9 L1929.2 763.4 L1928.9 760.2 L1928.5 757.4 L1927.9 755M2011.6 890.9 L2011.7 882.5 L2011.6 874.3 L2011.1 866.3 L2010.5 858.5 L2009.5 850.9 L2008.3 843.6 L2006.9 836.5 L2005.2 829.7 L2003.2 823.1 L2001 816.8 L1998.5 810.8 L1995.8 805.1 L1992.9 799.6 L1989.7 794.5 L1986.3 789.6 L1982.7 785.1 L1978.8 780.9 L1974.7 777 L1970.4 773.5 L1965.9 770.2M2011.6 890.9 L2012.1 882.7 L2012.3 874.6 L2012.2 866.8 L2011.9 859.2 L2011.3 851.8 L2010.4 844.6 L2009.3 837.7 L2007.9 831.1 L2006.3 824.7 L2004.4 818.6 L2002.2 812.8 L1999.8 807.2 L1997.2 802 L1994.3 797 L1991.2 792.4 L1987.8 788 L1984.2 784 L1980.3 780.3 L1976.3 777 L1972 773.9M2034.9 973.2 L2037.9 964.4 L2040.6 955.7 L2043 947.2 L2045.1 938.7 L2046.8 930.4 L2048.3 922.3 L2049.4 914.3 L2050.2 906.5 L2050.7 898.8 L2050.8 891.3 L2050.7 884.1 L2050.2 877 L2049.4 870.2 L2048.2 863.5 L2046.8 857.1 L2045 851 L2042.9 845.1 L2040.5 839.4 L2037.7 834.1 L2034.7 828.9 L2031.4 824.1 L2027.7 819.6 L2023.8 815.3M2010.6 903.3 L2011.1 894.4 L2011.3 885.8 L2011.3 877.4 L2011 869.1 L2010.4 861.1 L2009.6 853.4 L2008.5 845.8 L2007.1 838.6 L2005.4 831.5 L2003.5 824.8 L2001.4 818.3 L1998.9 812.1 L1996.3 806.2 L1993.3 800.6 L1990.2 795.3 L1986.8 790.4 L1983.1 785.7 L1979.2 781.4 L1975.1 777.4 L1970.8 773.8 L1966.2 770.4M1990.3 884 L1991.2 875.6 L1991.8 867.4 L1992.2 859.5 L1992.3 851.8 L1992.2 844.3 L1991.9 837.1 L1991.3 830.2 L1990.4 823.6 L1989.3 817.2 L1988 811.1 L1986.4 805.3 L1984.6 799.8 L1982.5 794.7 L1980.2 789.8 L1977.7 785.3 L1974.9 781.1 L1971.9 777.3 L1968.7 773.8 L1965.3 770.6 L1961.7 767.8 L1957.8 765.4M2091.5 1031.4 L2093.3 1021.6 L2094.7 1011.9 L2095.8 1002.2 L2096.5 992.5 L2096.8 982.9 L2096.8 973.4 L2096.4 964 L2095.6 954.6 L2094.4 945.4 L2092.9 936.3 L2091 927.4 L2088.7 918.6 L2086.1 909.9 L2083.1 901.4 L2079.7 893.1 L2076 885 L2072 877.1 L2067.6 869.4 L2062.9 861.9 L2057.8 854.6M2078.2 1075 L2081.6 1065.3 L2084.7 1055.7 L2087.4 1046.1 L2089.8 1036.4 L2091.8 1026.8 L2093.4 1017.1 L2094.7 1007.5 L2095.6 998 L2096.2 988.5 L2096.4 979.1 L2096.3 969.7 L2095.7 960.5 L2094.9 951.3 L2093.6 942.3 L2092 933.4 L2090 924.6 L2087.7 915.9 L2085.1 907.5 L2082 899.1 L2078.7 891 L2075 883.1 L2070.9 875.3 L2066.6 867.8 L2061.9 860.4M1842.2 890.2 L1842.9 891.6 L1843.7 892.9 L1844.4 894.3 L1845.1 895.7 L1845.9 897 L1846.6 898.4M1846.6 898.4 L1846.7 900.2 L1846.7 901.9 L1846.8 903.7 L1846.8 905.5 L1846.9 907.3 L1847 909M1847 909 L1848.3 915.5 L1849.5 922.1 L1850.8 928.8 L1852 935.4 L1853.2 942.2 L1854.3 949M1854.3 949 L1858 952 L1861.6 954.9 L1865.1 958 L1868.7 961 L1872.3 964 L1875.8 967.1M1854.3 949 L1861.1 945.4 L1867.8 941.8 L1874.5 938.3 L1881.2 934.9 L1887.8 931.5 L1894.3 928.3M1894.3 928.3 L1899 928.3 L1903.8 928.5 L1908.5 928.6 L1913.1 928.8 L1917.8 929 L1922.4 929.2M1922.4 929.2 L1931.7 924.2 L1940.7 919.3 L1949.6 914.7 L1958.2 910.2 L1966.6 905.9 L1974.7 901.8M1875.8 967.1 L1880.4 967.1 L1885 967.1 L1889.6 967.2 L1894.2 967.2 L1898.7 967.3 L1903.2 967.4M1903.2 967.4 L1914.2 967.9 L1925.1 968.5 L1935.8 969.1 L1946.4 969.9 L1956.7 970.8 L1966.8 971.7M1966.8 971.7 L1971.7 970.5 L1976.5 969.3 L1981.2 968.1 L1985.9 966.9 L1990.5 965.8 L1995 964.7M1995 964.7 L1996.9 960.2 L1998.6 955.8 L2000.4 951.4 L2002 947.1 L2003.6 942.7 L2005.1 938.4M2005.1 938.4 L2003 936.8 L2000.8 935.2 L1998.6 933.6 L1996.4 932 L1994.2 930.4 L1991.9 928.9M1991.9 928.9 L1989.2 924.3 L1986.4 919.7 L1983.5 915.2 L1980.6 910.7 L1977.7 906.3 L1974.7 901.8M1974.7 901.8 L1977.4 898.7 L1980.1 895.7 L1982.8 892.7 L1985.3 889.7 L1987.8 886.8 L1990.3 884M1990.3 884 L1991.4 881.4 L1992.4 878.9 L1993.5 876.3 L1994.5 873.8 L1995.4 871.4 L1996.3 868.9M1996.3 868.9 L1999 872.5 L2001.6 876.1 L2004.2 879.8 L2006.7 883.4 L2009.2 887.2 L2011.6 890.9M2011.6 890.9 L2011.5 892.9 L2011.3 895 L2011.2 897 L2011 899.1 L2010.8 901.2 L2010.6 903.3M2010.6 903.3 L2010 909 L2009.2 914.7 L2008.4 920.6 L2007.4 926.5 L2006.3 932.4 L2005.1 938.4M2005.1 938.4 L2010.4 944.1 L2015.6 949.8 L2020.7 955.6 L2025.5 961.4 L2030.3 967.3 L2034.9 973.2M2034.9 973.2 L2034.7 976.1 L2034.4 979 L2034.2 981.9 L2033.9 984.8 L2033.6 987.7 L2033.3 990.6M1875.8 967.1 L1885.7 972.7 L1895.4 978.3 L1905.1 984.1 L1914.6 989.9 L1923.9 995.8 L1933.1 1001.8 L1942.2 1007.8 L1951 1013.8 L1959.7 1019.9 L1968.1 1026 L1976.4 1032.2M1976.4 1032.2 L1973.1 1031.7 L1969.9 1031.3 L1966.6 1030.8 L1963.3 1030.3 L1960 1029.9 L1956.6 1029.4M1966.8 971.7 L1968.8 981.7 L1970.7 991.7 L1972.4 1001.8 L1973.9 1011.9 L1975.2 1022 L1976.4 1032.2M1875.8 967.1 L1885.2 961.5 L1894.4 956 L1903.5 950.6 L1912.5 945.3 L1921.3 940.2 L1930 935.2 L1938.5 930.3 L1946.8 925.6 L1954.9 921.1 L1962.8 916.7 L1970.5 912.4 L1978 908.4 L1985.2 904.5 L1992.2 900.8 L1998.9 897.3 L2005.4 894 L2011.6 890.9M1854.3 949 L1864.4 944.5 L1874.3 940.1 L1884.2 935.8 L1894 931.7 L1903.6 927.8 L1913.1 923.9 L1922.4 920.3 L1931.6 916.8 L1940.6 913.4 L1949.4 910.3 L1958.1 907.3 L1966.5 904.5 L1974.7 901.8M1846.6 898.4 L1858 897.6 L1869.3 897 L1880.5 896.6 L1891.6 896.4 L1902.5 896.4 L1913.4 896.6 L1924.1 897 L1934.6 897.6 L1944.9 898.4 L1955.1 899.3 L1965 900.5 L1974.7 901.8M1922.4 929.2 L1930.2 936 L1937.8 943 L1945.3 950 L1952.6 957.2 L1959.8 964.4 L1966.8 971.7M1875.8 967.1 L1883.9 960.5 L1891.8 954 L1899.6 947.6 L1907.4 941.4 L1914.9 935.2 L1922.4 929.2M1894.3 928.3 L1891.3 934.6 L1888.3 941 L1885.3 947.4 L1882.2 953.9 L1879 960.5 L1875.8 967.1M1998.3 942.5 L1999.5 941.8 L2000.6 941.1 L2001.8 940.4 L2002.9 939.8 L2004 939.1 L2005.1 938.4M1998.3 942.5 L1997.9 946.1 L1997.4 949.8 L1996.8 953.5 L1996.3 957.2 L1995.7 960.9 L1995 964.7M1846.6 898.4 L1854.7 903.1 L1862.7 907.9 L1870.7 912.8 L1878.7 917.9 L1886.5 923 L1894.3 928.3M1847 909 L1855 912 L1862.9 915.1 L1870.9 918.3 L1878.7 921.5 L1886.5 924.8 L1894.3 928.3M1875.8 967.1 L1887.8 967.3 L1899.6 967.6 L1911.3 968 L1922.8 968.5 L1934.1 969.1 L1945.2 969.9 L1956.1 970.8 L1966.8 971.7M1974.7 901.8 L1981.3 899.7 L1987.7 897.7 L1993.9 895.8 L2000 894 L2005.9 892.4 L2011.6 890.9M2011.6 890.9 L2016 902.1 L2020 913.5 L2023.7 925.1 L2027 936.9 L2030 948.8 L2032.6 961 L2034.9 973.2M1966.8 971.7 L1976.1 971.6 L1985.3 971.6 L1994.2 971.6 L2002.8 971.7 L2011.3 972 L2019.4 972.3 L2027.3 972.7 L2034.9 973.2M2034.9 973.2 L2039.1 979 L2043.2 985 L2047.2 990.9 L2051 996.9 L2054.7 1002.9 L2058.2 1008.9M2034.9 973.2 L2042.3 976.6 L2049.4 980.1 L2056.2 983.6 L2062.7 987.3 L2068.9 991 L2074.8 994.7M2033.3 990.6 L2037.7 993.6 L2042 996.6 L2046.2 999.6 L2050.3 1002.7 L2054.3 1005.8 L2058.2 1008.9M2058.2 1008.9 L2060.6 1015.2 L2062.9 1021.6 L2065 1028 L2067.1 1034.4 L2069 1040.7 L2070.7 1047.1M2074.8 994.7 L2078 1000.8 L2081 1006.9 L2083.9 1013 L2086.6 1019.1 L2089.1 1025.2 L2091.5 1031.4M2091.5 1031.4 L2089.8 1038.7 L2087.9 1045.9 L2085.8 1053.2 L2083.4 1060.5 L2080.9 1067.7 L2078.2 1075M2070.7 1047.1 L2069 1049.5 L2067.3 1051.8 L2065.5 1054.2 L2063.7 1056.5 L2061.9 1058.9 L2060 1061.2M2060 1061.2 L2062.3 1062.7 L2064.6 1064.1 L2066.9 1065.4 L2069.1 1066.8 L2071.3 1068.2 L2073.4 1069.6M2073.4 1069.6 L2074.2 1070.5 L2075 1071.4 L2075.8 1072.3 L2076.6 1073.2 L2077.4 1074.1 L2078.2 1075M2078.2 1075 L2076.5 1080.5 L2074.7 1086.1 L2072.7 1091.7 L2070.7 1097.2 L2068.6 1102.7 L2066.4 1108.2M2066.4 1108.2 L2066.9 1118 L2067.2 1127.8 L2067.1 1137.4 L2066.7 1146.9 L2066 1156.3 L2065 1165.5M2065 1165.5 L2064.3 1174.2 L2063.3 1182.7 L2062.1 1191 L2060.4 1199.1 L2058.5 1207 L2056.2 1214.8 L2053.6 1222.3 L2050.7 1229.6 L2047.5 1236.7 L2044 1243.5 L2040.2 1250.1M2060 1061.2 L2062.1 1072 L2063.9 1082.8 L2065.3 1093.4 L2066.3 1104.1 L2067 1114.6 L2067.3 1125 L2067.3 1135.4 L2066.9 1145.6 L2066.1 1155.6 L2065 1165.5M2034.9 973.2 L2040.9 983.1 L2046.6 993.2 L2051.8 1003.3 L2056.8 1013.5 L2061.3 1023.7 L2065.5 1034 L2069.3 1044.2 L2072.6 1054.5 L2075.6 1064.7 L2078.2 1075M1976.4 1032.2 L1986.1 1035.1 L1995.5 1038 L2004.7 1040.9 L2013.6 1043.8 L2022.1 1046.8 L2030.4 1049.7 L2038.3 1052.6 L2045.9 1055.5 L2053.1 1058.4 L2060 1061.2M1976.4 1032.2 L1985.4 1035.3 L1994.3 1038.4 L2002.8 1041.5 L2011.2 1044.6 L2019.2 1047.7 L2027 1050.8 L2034.5 1053.9 L2041.7 1057 L2048.6 1060 L2055.2 1063.1 L2061.4 1066.1 L2067.4 1069.1 L2073 1072 L2078.2 1075M1956.6 1029.4 L1966.8 1032.1 L1976.7 1034.7 L1986.4 1037.4 L1995.8 1040 L2004.9 1042.7 L2013.7 1045.4 L2022.2 1048.1 L2030.5 1050.7 L2038.4 1053.4 L2045.9 1056 L2053.1 1058.6 L2060 1061.2M2040.2 1250.1 L2043.3 1248.1 L2046.3 1246 L2049 1243.7 L2051.4 1241.2 L2053.7 1238.5M2065 1165.5 L2069.4 1166.7 L2073.5 1167.7 L2077.3 1168.6 L2080.6 1169.3 L2083.6 1169.8 L2086.3 1170.2 L2088.5 1170.4 L2090.4 1170.4 L2091.9 1170.3 L2093.1 1170 L2093.8 1169.5M2078.2 1075 L2082.4 1080.5 L2086.2 1086 L2089.7 1091.5 L2092.7 1096.9 L2095.4 1102.2 L2097.8 1107.5 L2099.7 1112.6 L2101.3 1117.7 L2102.5 1122.7 L2103.3 1127.6 L2103.7 1132.4 L2103.7 1137 L2103.3 1141.6 L2102.5 1146 L2101.4 1150.3M2091.5 1031.4 L2095.3 1038.1 L2098.7 1044.8 L2101.8 1051.4 L2104.5 1058.1 L2106.8 1064.8 L2108.7 1071.4 L2110.2 1078 L2111.3 1084.6 L2112 1091.1 L2112.4 1097.5 L2112.3 1103.9 L2111.9 1110.2 L2111 1116.4 L2109.8 1122.5M2040.2 1250.1 L2046.8 1243.7 L2053.1 1237 L2059 1230 L2064.5 1222.8 L2069.7 1215.3M2011.6 890.9 L2019.8 897.7 L2027.6 904.7 L2035.2 911.9 L2042.5 919.2 L2049.4 926.7 L2056.1 934.3 L2062.4 942.1 L2068.4 950 L2074.1 958 L2079.4 966.2 L2084.3 974.4 L2089 982.7 L2093.2 991.1 L2097.1 999.5 L2100.6 1008.1 L2103.7 1016.6 L2106.4 1025.2 L2108.8 1033.8 L2110.7 1042.4 L2112.3 1051.1 L2113.5 1059.7 L2114.2 1068.3 L2114.6 1076.9 L2114.6 1085.4 L2114.2 1093.9 L2113.4 1102.3 L2112.2 1110.6 L2110.6 1118.9M2034.9 973.2 L2041.9 979.8 L2048.6 986.5 L2055 993.3 L2061 1000.1 L2066.7 1007 L2072.1 1013.9 L2077.2 1020.9 L2081.9 1027.9 L2086.2 1034.9 L2090.2 1041.9 L2093.8 1049 L2097 1056 L2099.9 1063 L2102.3 1070 L2104.4 1076.9 L2106.1 1083.9 L2107.5 1090.7 L2108.4 1097.5 L2108.9 1104.3 L2109.1 1110.9 L2108.8 1117.5 L2108.2 1124 L2107.2 1130.3 L2105.7 1136.6M2034.9 973.2 L2042.7 979.4 L2050.2 985.6 L2057.3 992 L2064 998.4 L2070.3 1004.9 L2076.2 1011.5 L2081.7 1018.1 L2086.8 1024.7 L2091.5 1031.4M2034.9 973.2 L2039.2 984 L2043.2 994.9 L2046.8 1005.9 L2050.1 1016.9 L2053.1 1028 L2055.7 1039.1 L2058 1050.2 L2060 1061.2M2070.7 1047.1 L2074.6 1044.5 L2078.3 1041.9 L2081.9 1039.2 L2085.3 1036.6 L2088.5 1034 L2091.5 1031.4M2066.4 1108.2 L2065.8 1100.5 L2065 1092.7 L2064 1084.9 L2062.9 1077 L2061.5 1069.1 L2060 1061.2M2065 1165.5 L2066.5 1171.8 L2067.6 1177.8 L2068.5 1183.7 L2069 1189.4 L2069.1 1195 L2069 1200.3 L2068.5 1205.5 L2067.6 1210.4 L2066.5 1215.2 L2065 1219.7 L2063.2 1224 L2061 1228.1 L2058.5 1232M1976.4 1032.2 L1985.5 1026.1 L1994.2 1020 L2002.7 1014 L2010.9 1008.1 L2018.7 1002.2 L2026.2 996.3 L2033.3 990.6M1976.4 1032.2 L1983.9 1025.4 L1991.2 1018.7 L1998.3 1012.1 L2005.1 1005.4 L2011.6 998.8 L2017.9 992.3 L2023.8 985.9 L2029.5 979.5 L2034.9 973.2M1995 964.7 L2001.8 968.8 L2008.5 973.1 L2014.9 977.4 L2021.2 981.7 L2027.4 986.1 L2033.3 990.6"/></defs>
<use href="#garcs" stroke="#46bfae" stroke-opacity=".22" stroke-width="4.5" stroke-linecap="round" filter="url(#gblur)"/>
<use href="#garcs" stroke="#5cb2a6" stroke-opacity=".62" stroke-width="1.9" stroke-linecap="round" stroke-linejoin="round"/>
<g fill="#8fe6d4" fill-opacity=".92"><circle cx="1927.9" cy="755" r="1.7"/><circle cx="1937.6" cy="780.2" r="1.7"/><circle cx="1996.3" cy="868.9" r="1.7"/><circle cx="1990.3" cy="884" r="1.7"/><circle cx="2011.6" cy="890.9" r="1.7"/><circle cx="2010.6" cy="903.3" r="1.7"/><circle cx="1974.7" cy="901.8" r="1.7"/><circle cx="1985.9" cy="894.7" r="1.7"/><circle cx="1991.9" cy="928.9" r="1.7"/><circle cx="2005.1" cy="938.4" r="1.7"/><circle cx="1998.3" cy="942.5" r="1.7"/><circle cx="1995" cy="964.7" r="1.7"/><circle cx="2034.9" cy="973.2" r="1.7"/><circle cx="1966.8" cy="971.7" r="1.7"/><circle cx="1922.4" cy="929.2" r="1.7"/><circle cx="1894.3" cy="928.3" r="1.7"/><circle cx="1842.2" cy="890.2" r="1.7"/><circle cx="1846.6" cy="898.4" r="1.7"/><circle cx="1847" cy="909" r="1.7"/><circle cx="1854.3" cy="949" r="1.7"/><circle cx="1875.8" cy="967.1" r="1.7"/><circle cx="1903.2" cy="967.4" r="1.7"/><circle cx="1956.6" cy="1029.4" r="1.7"/><circle cx="1976.4" cy="1032.2" r="1.7"/><circle cx="2033.3" cy="990.6" r="1.7"/><circle cx="2058.2" cy="1008.9" r="1.7"/><circle cx="2074.8" cy="994.7" r="1.7"/><circle cx="2091.5" cy="1031.4" r="1.7"/><circle cx="2070.7" cy="1047.1" r="1.7"/><circle cx="2060" cy="1061.2" r="1.7"/><circle cx="2073.4" cy="1069.6" r="1.7"/><circle cx="2078.2" cy="1075" r="1.7"/><circle cx="2066.4" cy="1108.2" r="1.7"/><circle cx="2065" cy="1165.5" r="1.7"/><circle cx="2040.2" cy="1250.1" r="1.7"/><circle cx="1682.9" cy="1033.7" r="1.7"/><circle cx="1566.1" cy="823.8" r="1.7"/><circle cx="1547.6" cy="848.6" r="1.7"/><circle cx="1532.5" cy="865.9" r="1.7"/><circle cx="1539.7" cy="876.8" r="1.7"/><circle cx="1528.7" cy="1213.4" r="1.7"/><circle cx="1543.6" cy="1237.3" r="1.7"/><circle cx="1601.9" cy="1281.9" r="1.7"/><circle cx="1614.1" cy="1296.5" r="1.7"/><circle cx="1569.1" cy="923.3" r="2.3"/><circle cx="1714" cy="895.6" r="2.3"/><circle cx="1675.6" cy="880.6" r="2.3"/><circle cx="1600.5" cy="834.1" r="2.3"/><circle cx="1584" cy="830.6" r="2.3"/><circle cx="1724.4" cy="1017.5" r="2.3"/><circle cx="1484.6" cy="1076.5" r="2.3"/><circle cx="1501.6" cy="1154" r="2.3"/><circle cx="1579.6" cy="1269.8" r="2.3"/><circle cx="1531" cy="1217.6" r="2.3"/><circle cx="1545.7" cy="852.9" r="2.3"/><circle cx="1534.2" cy="870.5" r="2.3"/><circle cx="1548.1" cy="850.7" r="2.3"/><circle cx="1988.5" cy="826.3" r="2.3"/><circle cx="1930.1" cy="754.1" r="2.3"/><circle cx="1893.2" cy="868.6" r="2.3"/><circle cx="1976.3" cy="777" r="2.3"/><circle cx="1993.3" cy="800.6" r="2.3"/><circle cx="1846.8" cy="905.5" r="2.3"/><circle cx="1854.3" cy="949" r="2.3"/><circle cx="1861.1" cy="945.4" r="2.3"/><circle cx="1931.7" cy="924.2" r="2.3"/><circle cx="1914.2" cy="967.9" r="2.3"/><circle cx="2000.8" cy="935.2" r="2.3"/><circle cx="1985.3" cy="889.7" r="2.3"/><circle cx="1991.4" cy="881.4" r="2.3"/><circle cx="1999" cy="872.5" r="2.3"/><circle cx="2011.2" cy="897" r="2.3"/><circle cx="2010.6" cy="903.3" r="2.3"/><circle cx="1966.6" cy="1030.8" r="2.3"/><circle cx="1903.6" cy="927.8" r="2.3"/><circle cx="1930.2" cy="936" r="2.3"/><circle cx="1883.9" cy="960.5" r="2.3"/><circle cx="1888.3" cy="941" r="2.3"/><circle cx="1998.3" cy="942.5" r="2.3"/><circle cx="1997.9" cy="946.1" r="2.3"/><circle cx="1870.9" cy="918.3" r="2.3"/><circle cx="1899.6" cy="967.6" r="2.3"/><circle cx="1987.7" cy="897.7" r="2.3"/><circle cx="1994.2" cy="971.6" r="2.3"/><circle cx="2039.1" cy="979" r="2.3"/><circle cx="2049.4" cy="980.1" r="2.3"/><circle cx="2050.3" cy="1002.7" r="2.3"/><circle cx="2083.9" cy="1013" r="2.3"/><circle cx="2085.8" cy="1053.2" r="2.3"/><circle cx="2074.2" cy="1070.5" r="2.3"/><circle cx="2060.4" cy="1199.1" r="2.3"/><circle cx="1995.8" cy="1040" r="2.3"/><circle cx="2043.3" cy="1248.1" r="2.3"/><circle cx="2112.2" cy="1110.6" r="2.3"/><circle cx="2081.9" cy="1027.9" r="2.3"/><circle cx="2050.2" cy="985.6" r="2.3"/><circle cx="2085.3" cy="1036.6" r="2.3"/><circle cx="2017.9" cy="992.3" r="2.3"/></g>
<g font-family="'Liberation Sans', sans-serif" font-size="6.3" font-weight="700" fill="#dfe6e6" fill-opacity=".66" letter-spacing=".45"><text x="1932.4" y="757.3">Reykjavik</text><text x="1942.1" y="782.5">Nuuk</text><text x="2000.8" y="871.2">Montreal</text><text x="1994.8" y="886.3">Toronto</text><text x="2016.1" y="893.2">New York</text><text x="2015.1" y="905.6">Washington DC</text><text x="1979.2" y="904.1">Chicago</text><text x="1990.4" y="897">Detroit</text><text x="1996.4" y="931.2">Nashville</text><text x="2009.6" y="940.7">Atlanta</text><text x="2002.8" y="944.8">Birmingham</text><text x="1999.5" y="967">New Orleans</text><text x="2039.4" y="975.5">Miami</text><text x="1971.3" y="974">Austin</text><text x="1926.9" y="931.5">Denver</text><text x="1898.8" y="930.6">Salt Lake City</text><text x="1846.7" y="892.5">Vancouver</text><text x="1851.1" y="900.7">Seattle</text><text x="1851.5" y="911.3">Portland</text><text x="1858.8" y="951.3">San Francisco</text><text x="1880.3" y="969.4">Los Angeles</text><text x="1907.7" y="969.7">Phoenix</text><text x="1961.1" y="1031.7">Guadalajara</text><text x="1980.9" y="1034.5">Mexico City</text><text x="2037.8" y="992.9">Havana</text><text x="2062.7" y="1011.2">Kingston</text><text x="2079.3" y="997">Santo Domingo</text><text x="2096" y="1033.7">Caracas</text><text x="2075.2" y="1049.4">Cartagena</text><text x="2064.5" y="1063.5">Panama City</text><text x="2077.9" y="1071.9">Medellín</text><text x="2082.7" y="1077.3">Bogotá</text><text x="2070.9" y="1110.5">Quito</text><text x="2069.5" y="1167.8">Lima</text><text x="2044.7" y="1252.4">Santiago</text><text x="1687.4" y="1036">Honolulu</text><text x="1570.6" y="826.1">Beijing</text><text x="1552.1" y="850.9">Seoul</text><text x="1537" y="868.2">Shanghai</text><text x="1544.2" y="879.1">Tokyo</text><text x="1533.2" y="1215.7">Brisbane</text><text x="1548.1" y="1239.6">Sydney</text><text x="1606.4" y="1284.2">Auckland</text><text x="1618.6" y="1298.8">Wellington</text></g>
</svg>
<div class="t" style="left:348.9px;top:146.6px;font:400 23.5px/1 'Liberation Sans', sans-serif;color:#21201d;letter-spacing:0.862px;-webkit-text-stroke:0.6px #21201d;">Help me design a...</div>
<div class="t" style="left:847.7px;top:141.3px;font:400 24px/1 'Liberation Sans', sans-serif;color:#8b8a85;letter-spacing:1.206px;-webkit-text-stroke:0.3px #8b8a85;">Project</div>
<div class="t" style="left:992.8px;top:142.8px;font:400 24px/1 'Liberation Sans', sans-serif;color:#21201d;letter-spacing:0.931px;-webkit-text-stroke:0.35px #21201d;">Interactive landing...</div>
<div class="t" style="left:2529.8px;top:137.2px;font:400 20.5px/1 'Liberation Sans', sans-serif;color:#21201d;letter-spacing:0.856px;-webkit-text-stroke:0.3px #21201d;">Share</div>
<div class="t" style="left:2639.0px;top:137.2px;font:400 20.5px/1 'Liberation Sans', sans-serif;color:#fff;letter-spacing:2.219px;-webkit-text-stroke:0.5px #fff;">Export</div>
<div class="t" style="left:2748.2px;top:139.3px;font:700 17.6px/1 'Liberation Sans', sans-serif;color:#fff;letter-spacing:2.943px;">CY</div>
<div class="t" style="left:1779.7px;top:219.1px;font:400 22.5px/1 'Liberation Sans', sans-serif;color:#fdf1eb;letter-spacing:0.526px;-webkit-text-stroke:0.3px #fdf1eb;">Tweaks</div>
<div class="t" style="left:1996.3px;top:219.1px;font:400 22.5px/1 'Liberation Sans', sans-serif;color:#21201d;letter-spacing:1.314px;-webkit-text-stroke:0.35px #21201d;">Comment</div>
<div class="t" style="left:2150.9px;top:222.4px;font:400 18.5px/1 'Liberation Sans', sans-serif;color:#8f8e89;letter-spacing:-0.368px;">Aa</div>
<div class="t" style="left:2186.1px;top:219.1px;font:400 22.5px/1 'Liberation Sans', sans-serif;color:#21201d;letter-spacing:1.252px;-webkit-text-stroke:0.35px #21201d;">Edit text</div>
<div class="t" style="left:2361.3px;top:219.2px;font:400 22.5px/1 'Liberation Sans', sans-serif;color:#21201d;letter-spacing:1.175px;-webkit-text-stroke:0.35px #21201d;">Knobs</div>
<div class="t" style="left:2513.0px;top:219.2px;font:400 22.5px/1 'Liberation Sans', sans-serif;color:#21201d;letter-spacing:1.332px;-webkit-text-stroke:0.35px #21201d;">Draw</div>
<div class="t" style="left:2652.3px;top:219.6px;font:400 22px/1 'Liberation Sans', sans-serif;color:#8f8e89;letter-spacing:0.530px;">100%</div>
<div class="t" style="left:268.8px;top:211.6px;font:400 21.5px/1 'Liberation Sans', sans-serif;color:#a5a4a0;letter-spacing:0.190px;">Great-circle arcs with pulse animations</div>
<div class="t" style="left:268.8px;top:248.1px;font:400 21.5px/1 'Liberation Sans', sans-serif;color:#71706b;letter-spacing:0.229px;">City nodes with labels on the front hemisphere</div>
<div class="t" style="left:268.8px;top:284.2px;font:400 21.5px/1 'Liberation Sans', sans-serif;color:#71706b;letter-spacing:0.368px;">Atmospheric glow for depth</div>
<div class="t" style="left:268.8px;top:320.3px;font:400 21.5px/1 'Liberation Sans', sans-serif;color:#71706b;letter-spacing:0.104px;">“Every place has a story” headline with vertical</div>
<div class="t" style="left:268.8px;top:356.4px;font:400 21.5px/1 'Liberation Sans', sans-serif;color:#71706b;letter-spacing:1.030px;">stats</div>
<div class="t" style="left:238.5px;top:414.7px;font:400 21.5px/1 'Liberation Sans', sans-serif;color:#262522;letter-spacing:0.423px;-webkit-text-stroke:0.75px #262522;">You</div>
<div class="t" style="left:238.5px;top:444.6px;font:400 21.5px/1 'Liberation Sans', sans-serif;color:#71706b;letter-spacing:0.103px;">Add controls for the globe and arc details, and testing</div>
<div class="t" style="left:238.5px;top:480.6px;font:400 21.5px/1 'Liberation Sans', sans-serif;color:#71706b;letter-spacing:0.660px;">different breakpoints</div>
<div class="t" style="left:238.3px;top:541.8px;font:400 21.5px/1 'Liberation Sans', sans-serif;color:#262522;letter-spacing:0.657px;-webkit-text-stroke:0.75px #262522;">Claude</div>
<div class="t" style="left:294.1px;top:590.7px;font:400 19.5px/1 'Liberation Sans', sans-serif;color:#5f5e5a;letter-spacing:-0.025px;">Plan</div>
<div class="t" style="left:294.1px;top:649.0px;font:400 19.5px/1 'Liberation Sans', sans-serif;color:#5f5e5a;letter-spacing:1.156px;">write_file</div>
<div class="t" style="left:294.1px;top:706.5px;font:400 19.5px/1 'Liberation Sans', sans-serif;color:#5f5e5a;letter-spacing:0.272px;">Progress 5/5</div>
<div class="t" style="left:294.2px;top:1000.1px;font:400 19.5px/1 'Liberation Sans', sans-serif;color:#5f5e5a;letter-spacing:1.165px;">Verifier</div>
<div class="t" style="left:287.6px;top:760.7px;font:400 20.5px/1 'Liberation Sans', sans-serif;color:#9d9c97;letter-spacing:0.746px;text-decoration:line-through;text-decoration-thickness:1.6px;">Read current page layout and components</div>
<div class="t" style="left:287.6px;top:802.5px;font:400 20.5px/1 'Liberation Sans', sans-serif;color:#9d9c97;letter-spacing:0.947px;text-decoration:line-through;text-decoration-thickness:1.6px;">Build tweaks state with defaults</div>
<div class="t" style="left:287.6px;top:844.2px;font:400 20.5px/1 'Liberation Sans', sans-serif;color:#9d9c97;letter-spacing:0.782px;text-decoration:line-through;text-decoration-thickness:1.6px;">Create floating tweaks panel UI</div>
<div class="t" style="left:287.6px;top:886.0px;font:400 20.5px/1 'Liberation Sans', sans-serif;color:#9d9c97;letter-spacing:0.820px;text-decoration:line-through;text-decoration-thickness:1.6px;">Add arc and city toggle controls</div>
<div class="t" style="left:287.6px;top:927.7px;font:400 20.5px/1 'Liberation Sans', sans-serif;color:#9d9c97;letter-spacing:1.155px;text-decoration:line-through;text-decoration-thickness:1.6px;">Add breakpoint viewport switcher</div>
<div class="t" style="left:239.3px;top:1052.8px;font:400 21.5px/1 'Liberation Sans', sans-serif;color:#71706b;letter-spacing:0.108px;">Added a floating Tweaks panel with controls for:</div>
<div class="t" style="left:269.3px;top:1089.0px;font:400 21.5px/1 'Liberation Sans', sans-serif;color:#71706b;letter-spacing:0.008px;">Globe — rotation speed, radius, atmospheric glow</div>
<div class="t" style="left:269.3px;top:1125.2px;font:400 21.5px/1 'Liberation Sans', sans-serif;color:#71706b;letter-spacing:0.832px;">intensity</div>
<div class="t" style="left:269.3px;top:1163.1px;font:400 21.5px/1 'Liberation Sans', sans-serif;color:#71706b;letter-spacing:0.018px;">Arcs — color, width, opacity, pulse speed, show/</div>
<div class="t" style="left:269.3px;top:1199.2px;font:400 21.5px/1 'Liberation Sans', sans-serif;color:#71706b;letter-spacing:0.162px;">hide toggle</div>
<div class="t" style="left:269.3px;top:1236.1px;font:400 21.5px/1 'Liberation Sans', sans-serif;color:#71706b;letter-spacing:0.154px;">Cities — dot size, label visibility, front-hemisphere</div>
<div class="t" style="left:269.3px;top:1272.3px;font:400 21.5px/1 'Liberation Sans', sans-serif;color:#71706b;letter-spacing:0.658px;">only</div>
<div class="t" style="left:269.3px;top:1308.4px;font:400 21.5px/1 'Liberation Sans', sans-serif;color:#71706b;letter-spacing:-0.049px;">Breakpoints — Desktop (1440) / Tablet (768) /</div>
<div class="t" style="left:269.3px;top:1344.6px;font:400 21.5px/1 'Liberation Sans', sans-serif;color:#71706b;letter-spacing:0.301px;">Mobile (390) pills that resize the viewport with</div>
<div class="t" style="left:269.3px;top:1380.8px;font:400 21.5px/1 'Liberation Sans', sans-serif;color:#71706b;letter-spacing:0.092px;">smooth animation and adapt the layout</div>
<div class="t" style="left:257.9px;top:1449.8px;font:400 22px/1 'Liberation Sans', sans-serif;color:#8b8a85;letter-spacing:0.728px;">Describe what you want to create...</div>
<div class="t" style="left:493.2px;top:1537.5px;font:400 21.5px/1 'Liberation Sans', sans-serif;color:#2b2a27;letter-spacing:0.698px;-webkit-text-stroke:0.3px #2b2a27;">Import</div>
<div class="t" style="left:666.6px;top:1537.5px;font:400 21.5px/1 'Liberation Sans', sans-serif;color:#fcefea;letter-spacing:0.803px;-webkit-text-stroke:0.4px #fcefea;">Send</div>
<div class="t" style="left:1631.2px;top:392.9px;font:400 67px/1 'Liberation Serif', serif;color:#fff;letter-spacing:0.736px;-webkit-text-stroke:0.9px #fff;">Every place</div>
<div class="t" style="left:1633.5px;top:461.2px;font:400 67px/1 'Liberation Serif', serif;color:#fff;letter-spacing:1.870px;-webkit-text-stroke:0.9px;">has a <span style="color:#80e1c9">story.</span></div>
<div class="t" style="left:1530.9px;top:553.0px;font:400 23.4px/1 'Liberation Sans', sans-serif;color:#8b8e96;letter-spacing:0.061px;">Discover how ideas, art, and culture flow between</div>
<div class="t" style="left:1558.5px;top:586.6px;font:400 23.4px/1 'Liberation Sans', sans-serif;color:#8b8e96;letter-spacing:0.056px;">cities. 112 cities. 168 routes. One living map.</div>
<div class="t" style="left:2463.0px;top:328.3px;font:700 14px/1 'Liberation Sans', sans-serif;color:#85878d;letter-spacing:2.947px;">THEME</div>
<div class="t" style="left:2462.7px;top:437.5px;font:700 14px/1 'Liberation Sans', sans-serif;color:#85878d;letter-spacing:2.903px;">BREAKPOINT</div>
<div class="t" style="left:2462.7px;top:546.9px;font:700 14px/1 'Liberation Sans', sans-serif;color:#85878d;letter-spacing:3.060px;">NETWORK</div>
<div class="t" style="left:2462.7px;top:941.8px;font:700 14px/1 'Liberation Sans', sans-serif;color:#85878d;letter-spacing:3.077px;">GLOBE</div>
<div class="t" style="left:2511.2px;top:367.6px;font:700 13px/1 'Liberation Sans', sans-serif;color:#1b1c21;letter-spacing:2.247px;">DARK</div>
<div class="t" style="left:2648.6px;top:367.6px;font:700 13px/1 'Liberation Sans', sans-serif;color:#9a9ca4;letter-spacing:2.101px;">LIGHT</div>
<div class="t" style="left:2477.6px;top:476.6px;font:700 13px/1 'Liberation Sans', sans-serif;color:#a3a5ad;letter-spacing:2.049px;">DESKTOP</div>
<div class="t" style="left:2579.1px;top:476.6px;font:700 13px/1 'Liberation Sans', sans-serif;color:#1b1c21;letter-spacing:2.039px;">TABLET</div>
<div class="t" style="left:2665.8px;top:476.6px;font:700 13px/1 'Liberation Sans', sans-serif;color:#a3a5ad;letter-spacing:1.989px;">MOBILE</div>
<div class="t" style="left:2504.9px;top:580.9px;font:400 15.2px/1 'Liberation Sans', sans-serif;color:#d2d2d4;letter-spacing:0.000px;">Arc color</div>
<div class="t" style="left:2462.7px;top:614.8px;font:400 15.2px/1 'Liberation Sans', sans-serif;color:#d2d2d4;letter-spacing:0.000px;">Arc width</div>
<div class="t" style="right:280.8px;top:615.8px;font:400 14px/1 'Liberation Sans', sans-serif;color:#70727a;letter-spacing:0.000px;">0.6</div>
<div class="t" style="left:2462.7px;top:655.0px;font:400 15.2px/1 'Liberation Sans', sans-serif;color:#d2d2d4;letter-spacing:0.000px;">Arc glow</div>
<div class="t" style="right:280.8px;top:656.0px;font:400 14px/1 'Liberation Sans', sans-serif;color:#70727a;letter-spacing:0.000px;">13</div>
<div class="t" style="left:2462.7px;top:695.7px;font:400 15.2px/1 'Liberation Sans', sans-serif;color:#d2d2d4;letter-spacing:0.000px;">Arc density</div>
<div class="t" style="right:280.8px;top:696.7px;font:400 14px/1 'Liberation Sans', sans-serif;color:#70727a;letter-spacing:0.000px;">100%</div>
<div class="t" style="left:2462.7px;top:736.6px;font:400 15.2px/1 'Liberation Sans', sans-serif;color:#d2d2d4;letter-spacing:0.000px;">City size</div>
<div class="t" style="right:280.8px;top:737.6px;font:400 14px/1 'Liberation Sans', sans-serif;color:#70727a;letter-spacing:0.000px;">1.0</div>
<div class="t" style="left:2462.7px;top:777.1px;font:400 15.2px/1 'Liberation Sans', sans-serif;color:#d2d2d4;letter-spacing:0.000px;">Pulse speed</div>
<div class="t" style="right:280.8px;top:778.1px;font:400 14px/1 'Liberation Sans', sans-serif;color:#70727a;letter-spacing:0.000px;">3.4s</div>
<div class="t" style="left:2462.7px;top:971.0px;font:400 15.2px/1 'Liberation Sans', sans-serif;color:#d2d2d4;letter-spacing:0.000px;">Grid opacity</div>
<div class="t" style="right:280.8px;top:972.0px;font:400 14px/1 'Liberation Sans', sans-serif;color:#70727a;letter-spacing:0.000px;">0.10</div>
<div class="t" style="left:2462.7px;top:1011.7px;font:400 15.2px/1 'Liberation Sans', sans-serif;color:#d2d2d4;letter-spacing:0.000px;">Grid density</div>
<div class="t" style="right:280.8px;top:1012.7px;font:400 14px/1 'Liberation Sans', sans-serif;color:#70727a;letter-spacing:0.000px;">10°</div>
<div class="t" style="left:2462.7px;top:1052.5px;font:400 15.2px/1 'Liberation Sans', sans-serif;color:#d2d2d4;letter-spacing:0.000px;">Country fill</div>
<div class="t" style="right:280.8px;top:1053.5px;font:400 14px/1 'Liberation Sans', sans-serif;color:#70727a;letter-spacing:0.000px;">0.07</div>
<div class="t" style="left:2462.7px;top:1092.9px;font:400 15.2px/1 'Liberation Sans', sans-serif;color:#d2d2d4;letter-spacing:0.000px;">Globe size</div>
<div class="t" style="right:280.8px;top:1093.9px;font:400 14px/1 'Liberation Sans', sans-serif;color:#70727a;letter-spacing:0.000px;">400</div>
<div class="t" style="left:2462.7px;top:1133.6px;font:400 15.2px/1 'Liberation Sans', sans-serif;color:#d2d2d4;letter-spacing:0.000px;">Rotation</div>
<div class="t" style="right:280.8px;top:1134.6px;font:400 14px/1 'Liberation Sans', sans-serif;color:#70727a;letter-spacing:0.000px;">11°/s</div>
<div class="t" style="left:2462.7px;top:1174.0px;font:400 15.2px/1 'Liberation Sans', sans-serif;color:#d2d2d4;letter-spacing:0.000px;">Tilt</div>
<div class="t" style="right:280.8px;top:1175.0px;font:400 14px/1 'Liberation Sans', sans-serif;color:#70727a;letter-spacing:0.000px;">21°</div>
<div class="t" style="left:2489.3px;top:818.1px;font:400 15.2px/1 'Liberation Sans', sans-serif;color:#d2d2d4;letter-spacing:0.000px;">Show arcs</div>
<div class="t" style="left:2489.3px;top:848.9px;font:400 15.2px/1 'Liberation Sans', sans-serif;color:#d2d2d4;letter-spacing:0.000px;">Show cities</div>
<div class="t" style="left:2489.3px;top:879.7px;font:400 15.2px/1 'Liberation Sans', sans-serif;color:#d2d2d4;letter-spacing:0.000px;">City labels</div>
<div class="t" style="left:2489.3px;top:1214.6px;font:400 15.2px/1 'Liberation Sans', sans-serif;color:#d2d2d4;letter-spacing:0.000px;">Outer rings</div>
<div class="t" style="left:2489.3px;top:1245.3px;font:400 15.2px/1 'Liberation Sans', sans-serif;color:#d2d2d4;letter-spacing:0.000px;">Back grid</div>
<svg style="left:2541.0px;top:1034.5px;" width="48.0" height="78.0" viewBox="0 0 48 78" fill="none"><path d="M2.6 5.600 L2.6 63 L16.4 50.6 L24.6 69.2 Q28 73.400 32.6 69.200 L25.200 45 L39.400 43.2 Z" fill="#000" stroke="#fff" stroke-width="4.6" stroke-linejoin="round"/></svg>
</body></html>
